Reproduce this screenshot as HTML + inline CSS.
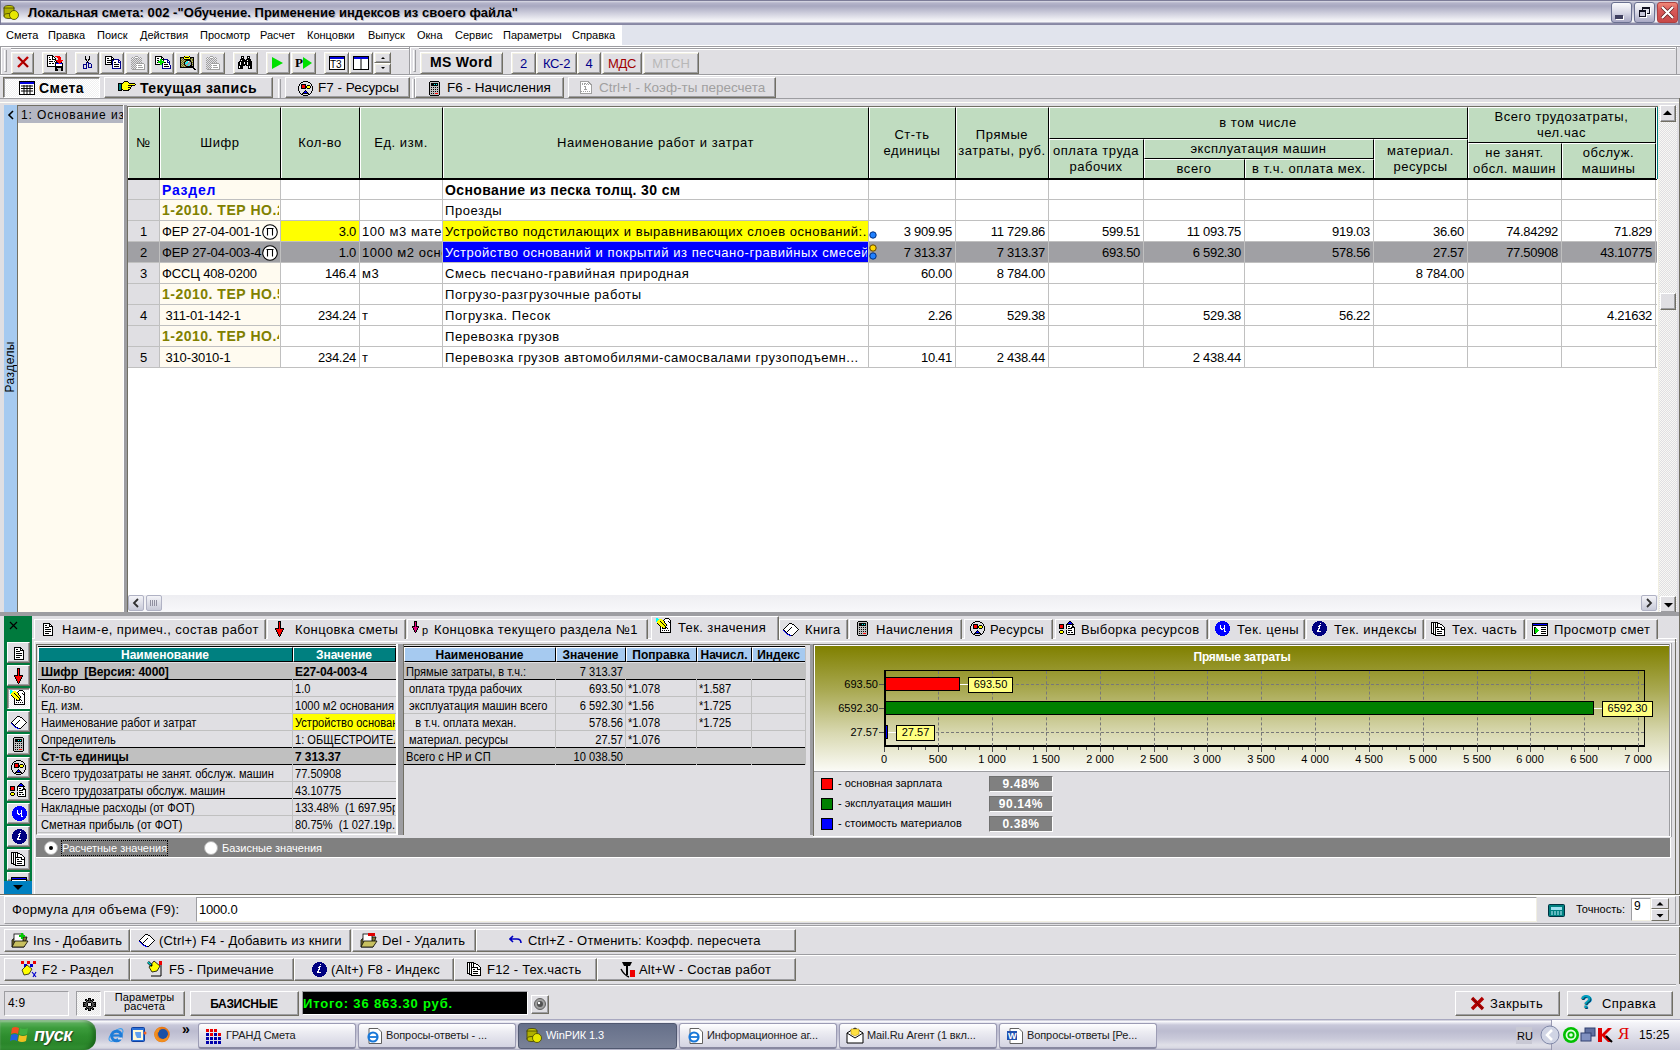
<!DOCTYPE html><html><head><meta charset="utf-8"><style>
*{margin:0;padding:0;box-sizing:border-box}
html,body{width:1680px;height:1050px;overflow:hidden;background:#E0DFE3;position:relative;font-family:"Liberation Sans",sans-serif;font-size:11px;color:#000}
div{position:absolute}
.t{white-space:nowrap;line-height:13px}
.b{font-weight:bold}
.btn{background:#E0DFE3;border:1px solid;border-color:#fff #716F64 #716F64 #fff;box-shadow:inset -1px -1px 0 #ACA899}
.sunk{border:1px solid;border-color:#ACA899 #fff #fff #ACA899}
</style></head><body><div style="left:0px;top:0px;width:1680px;height:25px;background:linear-gradient(#7C7C98 0px,#7C7C98 1px,#DCDCE6 1px,#B4B4CA 3px,#A8A8C0 6px,#C8C8D8 12px,#ECECF2 19px,#F8F8FA 22px,#9090AC 23px,#8484A0 25px)"></div><div style="left:0px;top:0px;width:1px;height:25px;background:#7C7C98"></div><div style="left:1678px;top:0px;width:2px;height:25px;background:#7C7C98"></div><svg style="position:absolute;left:2px;top:4px" width="17" height="17"><ellipse cx="7" cy="4" rx="5" ry="2.5" fill="#c8c800" stroke="#404000" stroke-width="0.8"/><rect x="2" y="4" width="10" height="8" fill="#b0b000" stroke="#404000" stroke-width="0.8"/><ellipse cx="7" cy="12" rx="5" ry="2.5" fill="#c0c000" stroke="#404000" stroke-width="0.8"/><ellipse cx="12" cy="11" rx="4.5" ry="4.5" fill="#e8e800" stroke="#404000" stroke-width="0.8"/></svg><div class="t" style="left:28px;top:5px;font-size:13px;font-weight:bold;line-height:15px;letter-spacing:0.05px;text-shadow:1px 1px 0 #b8b8c8">Локальная смета: 002 -"Обучение. Применение индексов из своего файла"</div><div style="left:1611px;top:2px;width:21px;height:21px;background:linear-gradient(#FAFAFC,#D8D8E6 50%,#A8A8C4);border:1px solid #6A7090;border-radius:3px"></div><div style="left:1634px;top:2px;width:21px;height:21px;background:linear-gradient(#FAFAFC,#D8D8E6 50%,#A8A8C4);border:1px solid #6A7090;border-radius:3px"></div><div style="left:1657px;top:2px;width:21px;height:21px;background:linear-gradient(#F08878,#D85858 40%,#C84848);border:1px solid #B04040;border-radius:3px"></div><div style="left:1615px;top:15px;width:8px;height:4px;background:#404060;box-shadow:1px 1px 0 #fff"></div><div style="left:1642px;top:7px;width:8px;height:7px;border:1px solid #101020;border-top-width:2px;box-shadow:1px 1px 0 #fff"></div><div style="left:1639px;top:10px;width:7px;height:7px;border:1px solid #101020;border-top-width:2px;background:#C8C8DA;box-shadow:1px 1px 0 #fff"></div><svg style="position:absolute;left:1657px;top:2px" width="21" height="21"><path d="M5 5 L16 16 M16 5 L5 16" stroke="#602020" stroke-width="3.6"/><path d="M5 5 L16 16 M16 5 L5 16" stroke="#fff" stroke-width="2.2"/></svg><div style="left:0px;top:25px;width:622px;height:20px;background:#fff"></div><div style="left:622px;top:25px;width:1058px;height:20px;background:#E1E4ED"></div><div class="t" style="left:6px;top:29px;">Смета</div><div class="t" style="left:48px;top:29px;">Правка</div><div class="t" style="left:97px;top:29px;">Поиск</div><div class="t" style="left:140px;top:29px;">Действия</div><div class="t" style="left:200px;top:29px;">Просмотр</div><div class="t" style="left:260px;top:29px;">Расчет</div><div class="t" style="left:307px;top:29px;">Концовки</div><div class="t" style="left:368px;top:29px;">Выпуск</div><div class="t" style="left:417px;top:29px;">Окна</div><div class="t" style="left:455px;top:29px;">Сервис</div><div class="t" style="left:503px;top:29px;">Параметры</div><div class="t" style="left:572px;top:29px;">Справка</div><div style="left:0px;top:45px;width:1680px;height:1px;background:#fff"></div><div style="left:0px;top:46px;width:1680px;height:1px;background:#9D9DA1"></div><div style="left:1px;top:47px;width:1677px;height:1px;background:#fff"></div><div style="left:0px;top:46px;width:1px;height:29px;background:#9D9DA1"></div><div style="left:1px;top:47px;width:1px;height:27px;background:#fff"></div><div style="left:0px;top:74px;width:1680px;height:1px;background:#9D9DA1"></div><div style="left:0px;top:75px;width:1680px;height:1px;background:#fff"></div><div style="left:11px;top:48px;width:398px;height:1px;background:#9D9DA1"></div><div style="left:11px;top:49px;width:398px;height:1px;background:#fff"></div><div style="left:419px;top:48px;width:1256px;height:1px;background:#9D9DA1"></div><div style="left:419px;top:49px;width:1256px;height:1px;background:#fff"></div><div style="left:409px;top:47px;width:1px;height:27px;background:#9D9DA1"></div><div style="left:410px;top:47px;width:1px;height:27px;background:#fff"></div><div style="left:1676px;top:46px;width:1px;height:29px;background:#9D9DA1"></div><div style="left:4px;top:50px;width:3px;height:22px;border-left:1px solid #fff;border-right:1px solid #9D9DA1;border-bottom:1px solid #9D9DA1"></div><div style="left:11px;top:52px;width:23px;height:22px;background:#E0DFE3;border:1px solid;border-color:#FFFFFF #716F64 #716F64 #FFFFFF;box-shadow:inset 1px 1px 0 #F1EFE2,inset -1px -1px 0 #9D9DA1"></div><div style="left:42px;top:52px;width:25px;height:22px;background:#E0DFE3;border:1px solid;border-color:#FFFFFF #716F64 #716F64 #FFFFFF;box-shadow:inset 1px 1px 0 #F1EFE2,inset -1px -1px 0 #9D9DA1"></div><div style="left:75px;top:52px;width:24px;height:22px;background:#E0DFE3;border:1px solid;border-color:#FFFFFF #716F64 #716F64 #FFFFFF;box-shadow:inset 1px 1px 0 #F1EFE2,inset -1px -1px 0 #9D9DA1"></div><div style="left:100px;top:52px;width:24px;height:22px;background:#E0DFE3;border:1px solid;border-color:#FFFFFF #716F64 #716F64 #FFFFFF;box-shadow:inset 1px 1px 0 #F1EFE2,inset -1px -1px 0 #9D9DA1"></div><div style="left:125px;top:52px;width:24px;height:22px;background:#E0DFE3;border:1px solid;border-color:#FFFFFF #716F64 #716F64 #FFFFFF;box-shadow:inset 1px 1px 0 #F1EFE2,inset -1px -1px 0 #9D9DA1"></div><div style="left:150px;top:52px;width:24px;height:22px;background:#E0DFE3;border:1px solid;border-color:#FFFFFF #716F64 #716F64 #FFFFFF;box-shadow:inset 1px 1px 0 #F1EFE2,inset -1px -1px 0 #9D9DA1"></div><div style="left:175px;top:52px;width:24px;height:22px;background:#E0DFE3;border:1px solid;border-color:#FFFFFF #716F64 #716F64 #FFFFFF;box-shadow:inset 1px 1px 0 #F1EFE2,inset -1px -1px 0 #9D9DA1"></div><div style="left:200px;top:52px;width:25px;height:22px;background:#E0DFE3;border:1px solid;border-color:#FFFFFF #716F64 #716F64 #FFFFFF;box-shadow:inset 1px 1px 0 #F1EFE2,inset -1px -1px 0 #9D9DA1"></div><div style="left:233px;top:52px;width:25px;height:22px;background:#E0DFE3;border:1px solid;border-color:#FFFFFF #716F64 #716F64 #FFFFFF;box-shadow:inset 1px 1px 0 #F1EFE2,inset -1px -1px 0 #9D9DA1"></div><div style="left:266px;top:52px;width:24px;height:22px;background:#E0DFE3;border:1px solid;border-color:#FFFFFF #716F64 #716F64 #FFFFFF;box-shadow:inset 1px 1px 0 #F1EFE2,inset -1px -1px 0 #9D9DA1"></div><div style="left:291px;top:52px;width:25px;height:22px;background:#E0DFE3;border:1px solid;border-color:#FFFFFF #716F64 #716F64 #FFFFFF;box-shadow:inset 1px 1px 0 #F1EFE2,inset -1px -1px 0 #9D9DA1"></div><div style="left:324px;top:52px;width:25px;height:22px;background:#E0DFE3;border:1px solid;border-color:#FFFFFF #716F64 #716F64 #FFFFFF;box-shadow:inset 1px 1px 0 #F1EFE2,inset -1px -1px 0 #9D9DA1"></div><div style="left:349px;top:52px;width:24px;height:22px;background:#E0DFE3;border:1px solid;border-color:#FFFFFF #716F64 #716F64 #FFFFFF;box-shadow:inset 1px 1px 0 #F1EFE2,inset -1px -1px 0 #9D9DA1"></div><div style="left:374px;top:52px;width:17px;height:11px;background:#E0DFE3;border:1px solid;border-color:#FFFFFF #716F64 #716F64 #FFFFFF;box-shadow:inset 1px 1px 0 #F1EFE2,inset -1px -1px 0 #9D9DA1"></div><div style="left:374px;top:63px;width:17px;height:11px;background:#E0DFE3;border:1px solid;border-color:#FFFFFF #716F64 #716F64 #FFFFFF;box-shadow:inset 1px 1px 0 #F1EFE2,inset -1px -1px 0 #9D9DA1"></div><svg style="position:absolute;left:16px;top:55px" width="14" height="14"><path d="M2 2 L12 12 M12 2 L2 12" stroke="#c00000" stroke-width="2.4"/><path d="M3 3 L12 12" stroke="#800000" stroke-width="1"/></svg><svg style="position:absolute;left:45px;top:54px;" width="20" height="17" shape-rendering="crispEdges"><rect x="2" y="1" width="6" height="1" fill="#000"/><rect x="2" y="2" width="1" height="1" fill="#000"/><rect x="3" y="2" width="4" height="1" fill="#fff"/><rect x="7" y="2" width="2" height="1" fill="#000"/><rect x="10" y="2" width="5" height="1" fill="#f00"/><rect x="2" y="3" width="1" height="1" fill="#000"/><rect x="3" y="3" width="1" height="1" fill="#fff"/><rect x="4" y="3" width="1" height="1" fill="#000"/><rect x="5" y="3" width="2" height="1" fill="#fff"/><rect x="7" y="3" width="1" height="1" fill="#000"/><rect x="8" y="3" width="1" height="1" fill="#fff"/><rect x="9" y="3" width="1" height="1" fill="#000"/><rect x="12" y="3" width="4" height="1" fill="#f00"/><rect x="2" y="4" width="1" height="1" fill="#000"/><rect x="3" y="4" width="4" height="1" fill="#fff"/><rect x="7" y="4" width="1" height="1" fill="#000"/><rect x="8" y="4" width="2" height="1" fill="#fff"/><rect x="10" y="4" width="1" height="1" fill="#000"/><rect x="13" y="4" width="3" height="1" fill="#f00"/><rect x="2" y="5" width="1" height="1" fill="#000"/><rect x="3" y="5" width="1" height="1" fill="#fff"/><rect x="4" y="5" width="2" height="1" fill="#000"/><rect x="6" y="5" width="1" height="1" fill="#fff"/><rect x="7" y="5" width="4" height="1" fill="#000"/><rect x="13" y="5" width="3" height="1" fill="#f00"/><rect x="2" y="6" width="1" height="1" fill="#000"/><rect x="3" y="6" width="7" height="1" fill="#fff"/><rect x="10" y="6" width="1" height="1" fill="#000"/><rect x="11" y="6" width="7" height="1" fill="#f00"/><rect x="2" y="7" width="1" height="1" fill="#000"/><rect x="3" y="7" width="1" height="1" fill="#fff"/><rect x="4" y="7" width="4" height="1" fill="#000"/><rect x="8" y="7" width="1" height="1" fill="#fff"/><rect x="9" y="7" width="1" height="1" fill="#000"/><rect x="10" y="7" width="1" height="1" fill="#fff"/><rect x="11" y="7" width="1" height="1" fill="#000"/><rect x="12" y="7" width="5" height="1" fill="#f00"/><rect x="2" y="8" width="1" height="1" fill="#000"/><rect x="3" y="8" width="7" height="1" fill="#fff"/><rect x="10" y="8" width="3" height="1" fill="#000"/><rect x="13" y="8" width="3" height="1" fill="#f00"/><rect x="16" y="8" width="1" height="1" fill="#000"/><rect x="2" y="9" width="1" height="1" fill="#000"/><rect x="3" y="9" width="1" height="1" fill="#fff"/><rect x="4" y="9" width="2" height="1" fill="#000"/><rect x="6" y="9" width="1" height="1" fill="#fff"/><rect x="7" y="9" width="2" height="1" fill="#000"/><rect x="9" y="9" width="1" height="1" fill="#fff"/><rect x="10" y="9" width="1" height="1" fill="#000"/><rect x="11" y="9" width="3" height="1" fill="#00f"/><rect x="14" y="9" width="1" height="1" fill="#f00"/><rect x="15" y="9" width="2" height="1" fill="#00f"/><rect x="17" y="9" width="1" height="1" fill="#000"/><rect x="2" y="10" width="1" height="1" fill="#000"/><rect x="3" y="10" width="7" height="1" fill="#fff"/><rect x="10" y="10" width="1" height="1" fill="#000"/><rect x="11" y="10" width="6" height="1" fill="#fff"/><rect x="17" y="10" width="1" height="1" fill="#000"/><rect x="2" y="11" width="1" height="1" fill="#000"/><rect x="3" y="11" width="7" height="1" fill="#fff"/><rect x="10" y="11" width="1" height="1" fill="#000"/><rect x="11" y="11" width="6" height="1" fill="#fff"/><rect x="17" y="11" width="1" height="1" fill="#000"/><rect x="2" y="12" width="16" height="1" fill="#000"/><rect x="10" y="13" width="8" height="1" fill="#000"/><rect x="10" y="14" width="2" height="1" fill="#000"/><rect x="12" y="14" width="4" height="1" fill="#c0c0c0"/><rect x="16" y="14" width="2" height="1" fill="#000"/><rect x="10" y="15" width="3" height="1" fill="#000"/><rect x="13" y="15" width="3" height="1" fill="#c0c0c0"/><rect x="16" y="15" width="2" height="1" fill="#000"/><rect x="10" y="16" width="3" height="1" fill="#000"/><rect x="13" y="16" width="3" height="1" fill="#c0c0c0"/><rect x="16" y="16" width="2" height="1" fill="#000"/></svg><svg style="position:absolute;left:80px;top:54px;" width="13" height="15" shape-rendering="crispEdges"><rect x="5" y="2" width="1" height="1" fill="#000"/><rect x="9" y="2" width="1" height="1" fill="#000"/><rect x="5" y="3" width="1" height="1" fill="#000"/><rect x="9" y="3" width="1" height="1" fill="#000"/><rect x="5" y="4" width="1" height="1" fill="#000"/><rect x="9" y="4" width="1" height="1" fill="#000"/><rect x="5" y="5" width="2" height="1" fill="#000"/><rect x="8" y="5" width="2" height="1" fill="#000"/><rect x="6" y="6" width="1" height="1" fill="#000"/><rect x="8" y="6" width="1" height="1" fill="#000"/><rect x="7" y="7" width="1" height="1" fill="#000"/><rect x="6" y="8" width="1" height="1" fill="#00008a"/><rect x="7" y="8" width="1" height="1" fill="#000"/><rect x="8" y="8" width="1" height="1" fill="#00008a"/><rect x="6" y="9" width="1" height="1" fill="#00008a"/><rect x="8" y="9" width="3" height="1" fill="#00008a"/><rect x="3" y="10" width="4" height="1" fill="#00008a"/><rect x="8" y="10" width="1" height="1" fill="#00008a"/><rect x="11" y="10" width="1" height="1" fill="#00008a"/><rect x="3" y="11" width="1" height="1" fill="#00008a"/><rect x="6" y="11" width="1" height="1" fill="#00008a"/><rect x="8" y="11" width="1" height="1" fill="#00008a"/><rect x="11" y="11" width="1" height="1" fill="#00008a"/><rect x="3" y="12" width="1" height="1" fill="#00008a"/><rect x="6" y="12" width="1" height="1" fill="#00008a"/><rect x="8" y="12" width="1" height="1" fill="#00008a"/><rect x="11" y="12" width="1" height="1" fill="#00008a"/><rect x="3" y="13" width="1" height="1" fill="#00008a"/><rect x="6" y="13" width="1" height="1" fill="#00008a"/><rect x="8" y="13" width="4" height="1" fill="#00008a"/><rect x="3" y="14" width="4" height="1" fill="#00008a"/></svg><svg style="position:absolute;left:105px;top:56px;" width="16" height="13" shape-rendering="crispEdges"><rect x="0" y="0" width="7" height="1" fill="#000"/><rect x="0" y="1" width="1" height="1" fill="#000"/><rect x="1" y="1" width="5" height="1" fill="#fff"/><rect x="6" y="1" width="2" height="1" fill="#000"/><rect x="0" y="2" width="1" height="1" fill="#000"/><rect x="1" y="2" width="1" height="1" fill="#fff"/><rect x="2" y="2" width="2" height="1" fill="#000"/><rect x="4" y="2" width="2" height="1" fill="#fff"/><rect x="6" y="2" width="1" height="1" fill="#000"/><rect x="7" y="2" width="1" height="1" fill="#fff"/><rect x="8" y="2" width="1" height="1" fill="#000"/><rect x="0" y="3" width="1" height="1" fill="#000"/><rect x="1" y="3" width="5" height="1" fill="#fff"/><rect x="6" y="3" width="3" height="1" fill="#000"/><rect x="9" y="3" width="5" height="1" fill="#00008a"/><rect x="0" y="4" width="1" height="1" fill="#000"/><rect x="1" y="4" width="1" height="1" fill="#fff"/><rect x="2" y="4" width="5" height="1" fill="#000"/><rect x="7" y="4" width="2" height="1" fill="#00008a"/><rect x="9" y="4" width="4" height="1" fill="#fff"/><rect x="13" y="4" width="2" height="1" fill="#00008a"/><rect x="0" y="5" width="1" height="1" fill="#000"/><rect x="1" y="5" width="5" height="1" fill="#fff"/><rect x="6" y="5" width="1" height="1" fill="#000"/><rect x="7" y="5" width="1" height="1" fill="#00008a"/><rect x="8" y="5" width="5" height="1" fill="#fff"/><rect x="13" y="5" width="1" height="1" fill="#00008a"/><rect x="14" y="5" width="1" height="1" fill="#fff"/><rect x="15" y="5" width="1" height="1" fill="#00008a"/><rect x="0" y="6" width="1" height="1" fill="#000"/><rect x="1" y="6" width="1" height="1" fill="#fff"/><rect x="2" y="6" width="5" height="1" fill="#000"/><rect x="7" y="6" width="1" height="1" fill="#00008a"/><rect x="8" y="6" width="1" height="1" fill="#fff"/><rect x="9" y="6" width="2" height="1" fill="#000"/><rect x="11" y="6" width="2" height="1" fill="#fff"/><rect x="13" y="6" width="3" height="1" fill="#00008a"/><rect x="0" y="7" width="1" height="1" fill="#000"/><rect x="1" y="7" width="5" height="1" fill="#fff"/><rect x="6" y="7" width="1" height="1" fill="#000"/><rect x="7" y="7" width="1" height="1" fill="#00008a"/><rect x="8" y="7" width="7" height="1" fill="#fff"/><rect x="15" y="7" width="1" height="1" fill="#00008a"/><rect x="0" y="8" width="7" height="1" fill="#000"/><rect x="7" y="8" width="1" height="1" fill="#00008a"/><rect x="8" y="8" width="1" height="1" fill="#fff"/><rect x="9" y="8" width="5" height="1" fill="#000"/><rect x="14" y="8" width="1" height="1" fill="#fff"/><rect x="15" y="8" width="1" height="1" fill="#00008a"/><rect x="7" y="9" width="1" height="1" fill="#00008a"/><rect x="8" y="9" width="7" height="1" fill="#fff"/><rect x="15" y="9" width="1" height="1" fill="#00008a"/><rect x="7" y="10" width="1" height="1" fill="#00008a"/><rect x="8" y="10" width="1" height="1" fill="#fff"/><rect x="9" y="10" width="5" height="1" fill="#000"/><rect x="14" y="10" width="1" height="1" fill="#fff"/><rect x="15" y="10" width="1" height="1" fill="#00008a"/><rect x="7" y="11" width="1" height="1" fill="#00008a"/><rect x="8" y="11" width="7" height="1" fill="#fff"/><rect x="15" y="11" width="1" height="1" fill="#00008a"/><rect x="7" y="12" width="9" height="1" fill="#00008a"/></svg><svg style="position:absolute;left:130px;top:56px;" width="16" height="14" shape-rendering="crispEdges"><rect x="5" y="0" width="3" height="1" fill="#A0A0A0"/><rect x="2" y="1" width="1" height="1" fill="#A0A0A0"/><rect x="4" y="1" width="1" height="1" fill="#A0A0A0"/><rect x="5" y="1" width="3" height="1" fill="#FFFFFF"/><rect x="8" y="1" width="1" height="1" fill="#A0A0A0"/><rect x="10" y="1" width="1" height="1" fill="#A0A0A0"/><rect x="1" y="2" width="1" height="1" fill="#A0A0A0"/><rect x="2" y="2" width="1" height="1" fill="#FFFFFF"/><rect x="3" y="2" width="1" height="1" fill="#A0A0A0"/><rect x="5" y="2" width="3" height="1" fill="#A0A0A0"/><rect x="9" y="2" width="1" height="1" fill="#A0A0A0"/><rect x="10" y="2" width="1" height="1" fill="#FFFFFF"/><rect x="11" y="2" width="1" height="1" fill="#A0A0A0"/><rect x="2" y="3" width="1" height="1" fill="#A0A0A0"/><rect x="4" y="3" width="1" height="1" fill="#A0A0A0"/><rect x="6" y="3" width="1" height="1" fill="#A0A0A0"/><rect x="8" y="3" width="1" height="1" fill="#A0A0A0"/><rect x="10" y="3" width="1" height="1" fill="#A0A0A0"/><rect x="1" y="4" width="1" height="1" fill="#A0A0A0"/><rect x="3" y="4" width="1" height="1" fill="#A0A0A0"/><rect x="5" y="4" width="1" height="1" fill="#A0A0A0"/><rect x="7" y="4" width="1" height="1" fill="#A0A0A0"/><rect x="9" y="4" width="1" height="1" fill="#A0A0A0"/><rect x="11" y="4" width="1" height="1" fill="#A0A0A0"/><rect x="2" y="5" width="1" height="1" fill="#A0A0A0"/><rect x="4" y="5" width="1" height="1" fill="#A0A0A0"/><rect x="6" y="5" width="1" height="1" fill="#A0A0A0"/><rect x="8" y="5" width="1" height="1" fill="#A0A0A0"/><rect x="10" y="5" width="1" height="1" fill="#A0A0A0"/><rect x="1" y="6" width="1" height="1" fill="#A0A0A0"/><rect x="3" y="6" width="1" height="1" fill="#A0A0A0"/><rect x="5" y="6" width="1" height="1" fill="#A0A0A0"/><rect x="7" y="6" width="1" height="1" fill="#A0A0A0"/><rect x="9" y="6" width="1" height="1" fill="#A0A0A0"/><rect x="11" y="6" width="1" height="1" fill="#A0A0A0"/><rect x="2" y="7" width="1" height="1" fill="#A0A0A0"/><rect x="4" y="7" width="1" height="1" fill="#A0A0A0"/><rect x="6" y="7" width="8" height="1" fill="#A0A0A0"/><rect x="1" y="8" width="1" height="1" fill="#A0A0A0"/><rect x="3" y="8" width="1" height="1" fill="#A0A0A0"/><rect x="5" y="8" width="1" height="1" fill="#A0A0A0"/><rect x="6" y="8" width="8" height="1" fill="#FFFFFF"/><rect x="14" y="8" width="1" height="1" fill="#A0A0A0"/><rect x="2" y="9" width="1" height="1" fill="#A0A0A0"/><rect x="4" y="9" width="1" height="1" fill="#A0A0A0"/><rect x="6" y="9" width="1" height="1" fill="#A0A0A0"/><rect x="7" y="9" width="1" height="1" fill="#FFFFFF"/><rect x="8" y="9" width="4" height="1" fill="#A0A0A0"/><rect x="12" y="9" width="2" height="1" fill="#FFFFFF"/><rect x="14" y="9" width="1" height="1" fill="#A0A0A0"/><rect x="1" y="10" width="1" height="1" fill="#A0A0A0"/><rect x="3" y="10" width="1" height="1" fill="#A0A0A0"/><rect x="5" y="10" width="1" height="1" fill="#A0A0A0"/><rect x="6" y="10" width="8" height="1" fill="#FFFFFF"/><rect x="14" y="10" width="1" height="1" fill="#A0A0A0"/><rect x="2" y="11" width="1" height="1" fill="#A0A0A0"/><rect x="4" y="11" width="1" height="1" fill="#A0A0A0"/><rect x="6" y="11" width="1" height="1" fill="#A0A0A0"/><rect x="7" y="11" width="1" height="1" fill="#FFFFFF"/><rect x="8" y="11" width="5" height="1" fill="#A0A0A0"/><rect x="13" y="11" width="1" height="1" fill="#FFFFFF"/><rect x="14" y="11" width="1" height="1" fill="#A0A0A0"/><rect x="1" y="12" width="1" height="1" fill="#A0A0A0"/><rect x="3" y="12" width="1" height="1" fill="#A0A0A0"/><rect x="5" y="12" width="1" height="1" fill="#A0A0A0"/><rect x="6" y="12" width="8" height="1" fill="#FFFFFF"/><rect x="14" y="12" width="1" height="1" fill="#A0A0A0"/><rect x="2" y="13" width="13" height="1" fill="#A0A0A0"/></svg><svg style="position:absolute;left:155px;top:56px;" width="16" height="13" shape-rendering="crispEdges"><rect x="0" y="0" width="7" height="1" fill="#000"/><rect x="0" y="1" width="1" height="1" fill="#000"/><rect x="1" y="1" width="5" height="1" fill="#fff"/><rect x="6" y="1" width="2" height="1" fill="#000"/><rect x="0" y="2" width="1" height="1" fill="#000"/><rect x="1" y="2" width="1" height="1" fill="#fff"/><rect x="2" y="2" width="2" height="1" fill="#000"/><rect x="4" y="2" width="2" height="1" fill="#fff"/><rect x="6" y="2" width="1" height="1" fill="#000"/><rect x="7" y="2" width="1" height="1" fill="#fff"/><rect x="8" y="2" width="1" height="1" fill="#000"/><rect x="0" y="3" width="1" height="1" fill="#000"/><rect x="1" y="3" width="4" height="1" fill="#fff"/><rect x="5" y="3" width="2" height="1" fill="#00E000"/><rect x="7" y="3" width="2" height="1" fill="#000"/><rect x="9" y="3" width="4" height="1" fill="#00008a"/><rect x="0" y="4" width="1" height="1" fill="#000"/><rect x="1" y="4" width="1" height="1" fill="#fff"/><rect x="2" y="4" width="2" height="1" fill="#000"/><rect x="4" y="4" width="1" height="1" fill="#fff"/><rect x="5" y="4" width="2" height="1" fill="#00E000"/><rect x="7" y="4" width="1" height="1" fill="#fff"/><rect x="8" y="4" width="1" height="1" fill="#000"/><rect x="9" y="4" width="3" height="1" fill="#fff"/><rect x="12" y="4" width="2" height="1" fill="#00008a"/><rect x="0" y="5" width="1" height="1" fill="#000"/><rect x="1" y="5" width="2" height="1" fill="#fff"/><rect x="3" y="5" width="6" height="1" fill="#00E000"/><rect x="9" y="5" width="3" height="1" fill="#fff"/><rect x="12" y="5" width="1" height="1" fill="#00008a"/><rect x="13" y="5" width="1" height="1" fill="#fff"/><rect x="14" y="5" width="1" height="1" fill="#00008a"/><rect x="0" y="6" width="1" height="1" fill="#000"/><rect x="1" y="6" width="1" height="1" fill="#fff"/><rect x="2" y="6" width="1" height="1" fill="#000"/><rect x="3" y="6" width="6" height="1" fill="#00E000"/><rect x="9" y="6" width="2" height="1" fill="#000"/><rect x="11" y="6" width="1" height="1" fill="#fff"/><rect x="12" y="6" width="3" height="1" fill="#00008a"/><rect x="0" y="7" width="1" height="1" fill="#000"/><rect x="1" y="7" width="4" height="1" fill="#fff"/><rect x="5" y="7" width="2" height="1" fill="#00E000"/><rect x="7" y="7" width="1" height="1" fill="#000"/><rect x="8" y="7" width="6" height="1" fill="#fff"/><rect x="14" y="7" width="1" height="1" fill="#00008a"/><rect x="0" y="8" width="5" height="1" fill="#000"/><rect x="5" y="8" width="2" height="1" fill="#00E000"/><rect x="7" y="8" width="1" height="1" fill="#00008a"/><rect x="8" y="8" width="1" height="1" fill="#fff"/><rect x="9" y="8" width="4" height="1" fill="#000"/><rect x="13" y="8" width="1" height="1" fill="#fff"/><rect x="14" y="8" width="1" height="1" fill="#00008a"/><rect x="7" y="9" width="1" height="1" fill="#00008a"/><rect x="8" y="9" width="7" height="1" fill="#fff"/><rect x="15" y="9" width="1" height="1" fill="#00008a"/><rect x="7" y="10" width="1" height="1" fill="#00008a"/><rect x="8" y="10" width="1" height="1" fill="#fff"/><rect x="9" y="10" width="5" height="1" fill="#000"/><rect x="14" y="10" width="1" height="1" fill="#fff"/><rect x="15" y="10" width="1" height="1" fill="#00008a"/><rect x="7" y="11" width="1" height="1" fill="#00008a"/><rect x="8" y="11" width="7" height="1" fill="#fff"/><rect x="15" y="11" width="1" height="1" fill="#00008a"/><rect x="7" y="12" width="9" height="1" fill="#00008a"/></svg><svg style="position:absolute;left:180px;top:56px;" width="17" height="14" shape-rendering="crispEdges"><rect x="4" y="0" width="1" height="1" fill="#000"/><rect x="5" y="0" width="4" height="1" fill="#FFFF00"/><rect x="9" y="0" width="1" height="1" fill="#000"/><rect x="0" y="1" width="4" height="1" fill="#000"/><rect x="4" y="1" width="1" height="1" fill="#FFFF00"/><rect x="5" y="1" width="4" height="1" fill="#000"/><rect x="9" y="1" width="1" height="1" fill="#FFFF00"/><rect x="10" y="1" width="4" height="1" fill="#000"/><rect x="0" y="2" width="1" height="1" fill="#000"/><rect x="1" y="2" width="1" height="1" fill="#808000"/><rect x="2" y="2" width="1" height="1" fill="#A0A0A0"/><rect x="3" y="2" width="1" height="1" fill="#000"/><rect x="4" y="2" width="6" height="1" fill="#FFFF00"/><rect x="10" y="2" width="1" height="1" fill="#000"/><rect x="11" y="2" width="1" height="1" fill="#808000"/><rect x="12" y="2" width="1" height="1" fill="#A0A0A0"/><rect x="13" y="2" width="1" height="1" fill="#000"/><rect x="0" y="3" width="1" height="1" fill="#000"/><rect x="1" y="3" width="1" height="1" fill="#A0A0A0"/><rect x="2" y="3" width="1" height="1" fill="#808000"/><rect x="3" y="3" width="1" height="1" fill="#A0A0A0"/><rect x="4" y="3" width="6" height="1" fill="#000"/><rect x="10" y="3" width="1" height="1" fill="#808000"/><rect x="11" y="3" width="1" height="1" fill="#A0A0A0"/><rect x="12" y="3" width="1" height="1" fill="#808000"/><rect x="13" y="3" width="1" height="1" fill="#000"/><rect x="0" y="4" width="1" height="1" fill="#000"/><rect x="1" y="4" width="1" height="1" fill="#808000"/><rect x="2" y="4" width="1" height="1" fill="#A0A0A0"/><rect x="3" y="4" width="1" height="1" fill="#808000"/><rect x="4" y="4" width="1" height="1" fill="#A0A0A0"/><rect x="5" y="4" width="1" height="1" fill="#808000"/><rect x="6" y="4" width="5" height="1" fill="#000"/><rect x="11" y="4" width="1" height="1" fill="#A0A0A0"/><rect x="12" y="4" width="1" height="1" fill="#808000"/><rect x="13" y="4" width="1" height="1" fill="#000"/><rect x="0" y="5" width="1" height="1" fill="#000"/><rect x="1" y="5" width="1" height="1" fill="#A0A0A0"/><rect x="2" y="5" width="1" height="1" fill="#808000"/><rect x="3" y="5" width="1" height="1" fill="#A0A0A0"/><rect x="4" y="5" width="1" height="1" fill="#808000"/><rect x="5" y="5" width="1" height="1" fill="#000"/><rect x="6" y="5" width="1" height="1" fill="#A0A0A0"/><rect x="7" y="5" width="1" height="1" fill="#00FFFF"/><rect x="8" y="5" width="1" height="1" fill="#fff"/><rect x="9" y="5" width="1" height="1" fill="#A0A0A0"/><rect x="10" y="5" width="1" height="1" fill="#000"/><rect x="11" y="5" width="1" height="1" fill="#808000"/><rect x="12" y="5" width="1" height="1" fill="#A0A0A0"/><rect x="13" y="5" width="1" height="1" fill="#000"/><rect x="0" y="6" width="1" height="1" fill="#000"/><rect x="1" y="6" width="1" height="1" fill="#808000"/><rect x="2" y="6" width="1" height="1" fill="#A0A0A0"/><rect x="3" y="6" width="1" height="1" fill="#808000"/><rect x="4" y="6" width="1" height="1" fill="#000"/><rect x="5" y="6" width="1" height="1" fill="#A0A0A0"/><rect x="6" y="6" width="2" height="1" fill="#00FFFF"/><rect x="8" y="6" width="3" height="1" fill="#A0A0A0"/><rect x="11" y="6" width="1" height="1" fill="#000"/><rect x="12" y="6" width="1" height="1" fill="#808000"/><rect x="13" y="6" width="1" height="1" fill="#000"/><rect x="0" y="7" width="1" height="1" fill="#000"/><rect x="1" y="7" width="1" height="1" fill="#A0A0A0"/><rect x="2" y="7" width="1" height="1" fill="#808000"/><rect x="3" y="7" width="1" height="1" fill="#A0A0A0"/><rect x="4" y="7" width="1" height="1" fill="#000"/><rect x="5" y="7" width="2" height="1" fill="#00FFFF"/><rect x="7" y="7" width="4" height="1" fill="#A0A0A0"/><rect x="11" y="7" width="1" height="1" fill="#000"/><rect x="12" y="7" width="1" height="1" fill="#A0A0A0"/><rect x="13" y="7" width="1" height="1" fill="#000"/><rect x="0" y="8" width="1" height="1" fill="#000"/><rect x="1" y="8" width="1" height="1" fill="#808000"/><rect x="2" y="8" width="1" height="1" fill="#A0A0A0"/><rect x="3" y="8" width="1" height="1" fill="#808000"/><rect x="4" y="8" width="1" height="1" fill="#000"/><rect x="5" y="8" width="4" height="1" fill="#A0A0A0"/><rect x="9" y="8" width="1" height="1" fill="#00FFFF"/><rect x="10" y="8" width="1" height="1" fill="#A0A0A0"/><rect x="11" y="8" width="1" height="1" fill="#000"/><rect x="12" y="8" width="1" height="1" fill="#808000"/><rect x="13" y="8" width="1" height="1" fill="#000"/><rect x="0" y="9" width="1" height="1" fill="#000"/><rect x="1" y="9" width="1" height="1" fill="#A0A0A0"/><rect x="2" y="9" width="1" height="1" fill="#808000"/><rect x="3" y="9" width="1" height="1" fill="#A0A0A0"/><rect x="4" y="9" width="1" height="1" fill="#808000"/><rect x="5" y="9" width="1" height="1" fill="#000"/><rect x="6" y="9" width="2" height="1" fill="#A0A0A0"/><rect x="8" y="9" width="1" height="1" fill="#00FFFF"/><rect x="9" y="9" width="1" height="1" fill="#A0A0A0"/><rect x="10" y="9" width="2" height="1" fill="#000"/><rect x="12" y="9" width="1" height="1" fill="#A0A0A0"/><rect x="13" y="9" width="1" height="1" fill="#000"/><rect x="0" y="10" width="1" height="1" fill="#000"/><rect x="1" y="10" width="1" height="1" fill="#808000"/><rect x="2" y="10" width="1" height="1" fill="#A0A0A0"/><rect x="3" y="10" width="1" height="1" fill="#808000"/><rect x="4" y="10" width="1" height="1" fill="#A0A0A0"/><rect x="5" y="10" width="1" height="1" fill="#808000"/><rect x="6" y="10" width="8" height="1" fill="#000"/><rect x="0" y="11" width="14" height="1" fill="#000"/><rect x="13" y="12" width="2" height="1" fill="#000"/><rect x="14" y="13" width="2" height="1" fill="#000"/></svg><svg style="position:absolute;left:205px;top:56px;" width="16" height="14" shape-rendering="crispEdges"><rect x="5" y="0" width="3" height="1" fill="#A0A0A0"/><rect x="2" y="1" width="1" height="1" fill="#A0A0A0"/><rect x="4" y="1" width="1" height="1" fill="#A0A0A0"/><rect x="5" y="1" width="3" height="1" fill="#FFFFFF"/><rect x="8" y="1" width="1" height="1" fill="#A0A0A0"/><rect x="10" y="1" width="1" height="1" fill="#A0A0A0"/><rect x="1" y="2" width="1" height="1" fill="#A0A0A0"/><rect x="2" y="2" width="1" height="1" fill="#FFFFFF"/><rect x="3" y="2" width="1" height="1" fill="#A0A0A0"/><rect x="5" y="2" width="3" height="1" fill="#A0A0A0"/><rect x="9" y="2" width="1" height="1" fill="#A0A0A0"/><rect x="10" y="2" width="1" height="1" fill="#FFFFFF"/><rect x="11" y="2" width="1" height="1" fill="#A0A0A0"/><rect x="2" y="3" width="1" height="1" fill="#A0A0A0"/><rect x="4" y="3" width="1" height="1" fill="#A0A0A0"/><rect x="6" y="3" width="1" height="1" fill="#A0A0A0"/><rect x="8" y="3" width="1" height="1" fill="#A0A0A0"/><rect x="10" y="3" width="1" height="1" fill="#A0A0A0"/><rect x="1" y="4" width="1" height="1" fill="#A0A0A0"/><rect x="3" y="4" width="1" height="1" fill="#A0A0A0"/><rect x="5" y="4" width="1" height="1" fill="#A0A0A0"/><rect x="7" y="4" width="1" height="1" fill="#A0A0A0"/><rect x="9" y="4" width="1" height="1" fill="#A0A0A0"/><rect x="11" y="4" width="1" height="1" fill="#A0A0A0"/><rect x="2" y="5" width="1" height="1" fill="#A0A0A0"/><rect x="4" y="5" width="1" height="1" fill="#A0A0A0"/><rect x="6" y="5" width="1" height="1" fill="#A0A0A0"/><rect x="8" y="5" width="1" height="1" fill="#A0A0A0"/><rect x="10" y="5" width="1" height="1" fill="#A0A0A0"/><rect x="1" y="6" width="1" height="1" fill="#A0A0A0"/><rect x="3" y="6" width="1" height="1" fill="#A0A0A0"/><rect x="5" y="6" width="1" height="1" fill="#A0A0A0"/><rect x="7" y="6" width="1" height="1" fill="#A0A0A0"/><rect x="9" y="6" width="1" height="1" fill="#A0A0A0"/><rect x="11" y="6" width="1" height="1" fill="#A0A0A0"/><rect x="2" y="7" width="1" height="1" fill="#A0A0A0"/><rect x="4" y="7" width="1" height="1" fill="#A0A0A0"/><rect x="6" y="7" width="8" height="1" fill="#A0A0A0"/><rect x="1" y="8" width="1" height="1" fill="#A0A0A0"/><rect x="3" y="8" width="1" height="1" fill="#A0A0A0"/><rect x="5" y="8" width="1" height="1" fill="#A0A0A0"/><rect x="6" y="8" width="8" height="1" fill="#FFFFFF"/><rect x="14" y="8" width="1" height="1" fill="#A0A0A0"/><rect x="2" y="9" width="1" height="1" fill="#A0A0A0"/><rect x="4" y="9" width="1" height="1" fill="#A0A0A0"/><rect x="6" y="9" width="1" height="1" fill="#A0A0A0"/><rect x="7" y="9" width="1" height="1" fill="#FFFFFF"/><rect x="8" y="9" width="4" height="1" fill="#A0A0A0"/><rect x="12" y="9" width="2" height="1" fill="#FFFFFF"/><rect x="14" y="9" width="1" height="1" fill="#A0A0A0"/><rect x="1" y="10" width="1" height="1" fill="#A0A0A0"/><rect x="3" y="10" width="1" height="1" fill="#A0A0A0"/><rect x="5" y="10" width="1" height="1" fill="#A0A0A0"/><rect x="6" y="10" width="8" height="1" fill="#FFFFFF"/><rect x="14" y="10" width="1" height="1" fill="#A0A0A0"/><rect x="2" y="11" width="1" height="1" fill="#A0A0A0"/><rect x="4" y="11" width="1" height="1" fill="#A0A0A0"/><rect x="6" y="11" width="1" height="1" fill="#A0A0A0"/><rect x="7" y="11" width="1" height="1" fill="#FFFFFF"/><rect x="8" y="11" width="5" height="1" fill="#A0A0A0"/><rect x="13" y="11" width="1" height="1" fill="#FFFFFF"/><rect x="14" y="11" width="1" height="1" fill="#A0A0A0"/><rect x="1" y="12" width="1" height="1" fill="#A0A0A0"/><rect x="3" y="12" width="1" height="1" fill="#A0A0A0"/><rect x="5" y="12" width="1" height="1" fill="#A0A0A0"/><rect x="6" y="12" width="8" height="1" fill="#FFFFFF"/><rect x="14" y="12" width="1" height="1" fill="#A0A0A0"/><rect x="2" y="13" width="13" height="1" fill="#A0A0A0"/></svg><svg style="position:absolute;left:238px;top:56px;" width="14" height="13" shape-rendering="crispEdges"><rect x="3" y="0" width="3" height="1" fill="#000"/><rect x="9" y="0" width="3" height="1" fill="#000"/><rect x="3" y="1" width="1" height="1" fill="#000"/><rect x="4" y="1" width="1" height="1" fill="#fff"/><rect x="5" y="1" width="1" height="1" fill="#000"/><rect x="9" y="1" width="1" height="1" fill="#000"/><rect x="10" y="1" width="1" height="1" fill="#fff"/><rect x="11" y="1" width="1" height="1" fill="#000"/><rect x="3" y="2" width="3" height="1" fill="#000"/><rect x="9" y="2" width="3" height="1" fill="#000"/><rect x="2" y="3" width="5" height="1" fill="#000"/><rect x="8" y="3" width="5" height="1" fill="#000"/><rect x="2" y="4" width="1" height="1" fill="#000"/><rect x="3" y="4" width="1" height="1" fill="#fff"/><rect x="4" y="4" width="5" height="1" fill="#000"/><rect x="9" y="4" width="1" height="1" fill="#fff"/><rect x="10" y="4" width="3" height="1" fill="#000"/><rect x="1" y="5" width="13" height="1" fill="#000"/><rect x="0" y="6" width="2" height="1" fill="#000"/><rect x="2" y="6" width="1" height="1" fill="#fff"/><rect x="3" y="6" width="3" height="1" fill="#000"/><rect x="6" y="6" width="1" height="1" fill="#fff"/><rect x="7" y="6" width="2" height="1" fill="#000"/><rect x="9" y="6" width="1" height="1" fill="#fff"/><rect x="10" y="6" width="4" height="1" fill="#000"/><rect x="0" y="7" width="2" height="1" fill="#000"/><rect x="2" y="7" width="1" height="1" fill="#fff"/><rect x="3" y="7" width="3" height="1" fill="#000"/><rect x="6" y="7" width="1" height="1" fill="#fff"/><rect x="7" y="7" width="2" height="1" fill="#000"/><rect x="9" y="7" width="1" height="1" fill="#fff"/><rect x="10" y="7" width="4" height="1" fill="#000"/><rect x="0" y="8" width="2" height="1" fill="#000"/><rect x="2" y="8" width="1" height="1" fill="#fff"/><rect x="3" y="8" width="6" height="1" fill="#000"/><rect x="9" y="8" width="1" height="1" fill="#fff"/><rect x="10" y="8" width="4" height="1" fill="#000"/><rect x="0" y="9" width="7" height="1" fill="#000"/><rect x="8" y="9" width="6" height="1" fill="#000"/><rect x="0" y="10" width="1" height="1" fill="#000"/><rect x="1" y="10" width="1" height="1" fill="#fff"/><rect x="2" y="10" width="3" height="1" fill="#000"/><rect x="10" y="10" width="1" height="1" fill="#000"/><rect x="11" y="10" width="1" height="1" fill="#fff"/><rect x="12" y="10" width="2" height="1" fill="#000"/><rect x="0" y="11" width="1" height="1" fill="#000"/><rect x="1" y="11" width="1" height="1" fill="#fff"/><rect x="2" y="11" width="3" height="1" fill="#000"/><rect x="10" y="11" width="1" height="1" fill="#000"/><rect x="11" y="11" width="1" height="1" fill="#fff"/><rect x="12" y="11" width="2" height="1" fill="#000"/><rect x="0" y="12" width="5" height="1" fill="#000"/><rect x="10" y="12" width="4" height="1" fill="#000"/></svg><svg style="position:absolute;left:271px;top:56px" width="14" height="14"><path d="M1 1 L12 7 L1 13 Z" fill="#00e000"/></svg><div class="t" style="left:295px;top:55px;font:bold 13px 'Liberation Serif';line-height:15px">P</div><svg style="position:absolute;left:303px;top:56px" width="10" height="14"><path d="M0 1 L9 7 L0 13 Z" fill="#00e000"/></svg><svg style="position:absolute;left:329px;top:56px" width="16" height="14"><rect x="0.5" y="0.5" width="15" height="13" fill="#fff" stroke="#000"/><rect x="1" y="1" width="14" height="2" fill="#0000e0"/></svg><div class="t" style="left:330px;top:59px;font-size:10px;line-height:11px">T3</div><svg style="position:absolute;left:353px;top:56px" width="16" height="14"><rect x="0.5" y="0.5" width="15" height="13" fill="#fff" stroke="#000"/><rect x="1" y="1" width="14" height="2" fill="#0000e0"/><path d="M8 3 v10" stroke="#000"/></svg><svg style="position:absolute;left:380px;top:55px" width="6" height="16"><path d="M1 4 L3 2 L5 4Z M1 12 L3 14 L5 12Z" fill="#000"/></svg><div style="left:413px;top:50px;width:3px;height:22px;border-left:1px solid #fff;border-right:1px solid #9D9DA1;border-bottom:1px solid #9D9DA1"></div><div style="left:420px;top:52px;width:83px;height:22px;background:#E0DFE3;border:1px solid;border-color:#FFFFFF #716F64 #716F64 #FFFFFF;box-shadow:inset 1px 1px 0 #F1EFE2,inset -1px -1px 0 #9D9DA1"></div><div class="t" style="left:430px;top:55px;font-weight:bold;font-size:14px;line-height:15px;letter-spacing:0.3px">MS Word</div><div style="left:511px;top:52px;width:25px;height:22px;background:#E0DFE3;border:1px solid;border-color:#FFFFFF #716F64 #716F64 #FFFFFF;box-shadow:inset 1px 1px 0 #F1EFE2,inset -1px -1px 0 #9D9DA1"></div><div class="t" style="left:511px;top:56px;width:25px;text-align:center;color:#00008a;font-size:13px;line-height:16px">2</div><div style="left:536px;top:52px;width:41px;height:22px;background:#E0DFE3;border:1px solid;border-color:#FFFFFF #716F64 #716F64 #FFFFFF;box-shadow:inset 1px 1px 0 #F1EFE2,inset -1px -1px 0 #9D9DA1"></div><div class="t" style="left:536px;top:56px;width:41px;text-align:center;color:#00008a;font-size:13px;line-height:16px;letter-spacing:-0.3px">КС-2</div><div style="left:577px;top:52px;width:24px;height:22px;background:#E0DFE3;border:1px solid;border-color:#FFFFFF #716F64 #716F64 #FFFFFF;box-shadow:inset 1px 1px 0 #F1EFE2,inset -1px -1px 0 #9D9DA1"></div><div class="t" style="left:577px;top:56px;width:24px;text-align:center;color:#00008a;font-size:13px;line-height:16px">4</div><div style="left:602px;top:52px;width:40px;height:22px;background:#E0DFE3;border:1px solid;border-color:#FFFFFF #716F64 #716F64 #FFFFFF;box-shadow:inset 1px 1px 0 #F1EFE2,inset -1px -1px 0 #9D9DA1"></div><div class="t" style="left:602px;top:56px;width:40px;text-align:center;color:#a00000;font-size:13px;line-height:16px;letter-spacing:-0.3px">МДС</div><div style="left:643px;top:52px;width:56px;height:22px;background:#E0DFE3;border:1px solid;border-color:#FFFFFF #716F64 #716F64 #FFFFFF;box-shadow:inset 1px 1px 0 #F1EFE2,inset -1px -1px 0 #9D9DA1"></div><div class="t" style="left:643px;top:56px;width:56px;text-align:center;color:#b8b8b8;font-size:13px;line-height:16px">МТСН</div><div style="left:3px;top:77px;width:97px;height:21px;background:repeating-conic-gradient(#F0F0F0 0 25%,#FFFFFF 0 50%) 0 0/2px 2px;border:1px solid;border-color:#716F64 #fff #fff #716F64;box-shadow:inset 1px 1px 0 #9D9DA1"></div><svg style="position:absolute;left:19px;top:81px" width="16" height="14"><rect x="0.5" y="0.5" width="15" height="13" fill="#fff" stroke="#000"/><rect x="1" y="1" width="14" height="2" fill="#0000e0"/><path d="M2 5h12M2 7.5h12M2 10h12M5 4v9M8 4v9M11 4v9" stroke="#000" stroke-width="1"/></svg><div class="t" style="left:39px;top:80px;font-weight:bold;font-size:14px;line-height:16px;letter-spacing:0.46px">Смета</div><div style="left:104px;top:77px;width:169px;height:21px;background:#E0DFE3;border:1px solid;border-color:#fff #716F64 #716F64 #fff;box-shadow:inset -1px -1px 0 #9D9DA1"></div><svg style="position:absolute;left:118px;top:81px;" width="19" height="10" shape-rendering="crispEdges"><rect x="6" y="0" width="4" height="1" fill="#000"/><rect x="5" y="1" width="1" height="1" fill="#000"/><rect x="6" y="1" width="4" height="1" fill="#FFFF00"/><rect x="10" y="1" width="1" height="1" fill="#000"/><rect x="0" y="2" width="5" height="1" fill="#000"/><rect x="5" y="2" width="6" height="1" fill="#FFFF00"/><rect x="11" y="2" width="6" height="1" fill="#000"/><rect x="0" y="3" width="1" height="1" fill="#000"/><rect x="1" y="3" width="2" height="1" fill="#008080"/><rect x="3" y="3" width="1" height="1" fill="#000"/><rect x="4" y="3" width="13" height="1" fill="#FFFF00"/><rect x="17" y="3" width="1" height="1" fill="#000"/><rect x="0" y="4" width="1" height="1" fill="#000"/><rect x="1" y="4" width="2" height="1" fill="#008080"/><rect x="3" y="4" width="1" height="1" fill="#000"/><rect x="4" y="4" width="6" height="1" fill="#FFFF00"/><rect x="10" y="4" width="7" height="1" fill="#000"/><rect x="0" y="5" width="1" height="1" fill="#000"/><rect x="1" y="5" width="2" height="1" fill="#008080"/><rect x="3" y="5" width="1" height="1" fill="#000"/><rect x="4" y="5" width="9" height="1" fill="#FFFF00"/><rect x="13" y="5" width="1" height="1" fill="#000"/><rect x="0" y="6" width="1" height="1" fill="#000"/><rect x="1" y="6" width="2" height="1" fill="#008080"/><rect x="3" y="6" width="1" height="1" fill="#000"/><rect x="4" y="6" width="6" height="1" fill="#FFFF00"/><rect x="10" y="6" width="3" height="1" fill="#000"/><rect x="0" y="7" width="1" height="1" fill="#000"/><rect x="1" y="7" width="2" height="1" fill="#008080"/><rect x="3" y="7" width="1" height="1" fill="#000"/><rect x="4" y="7" width="8" height="1" fill="#FFFF00"/><rect x="12" y="7" width="1" height="1" fill="#000"/><rect x="0" y="8" width="1" height="1" fill="#000"/><rect x="1" y="8" width="2" height="1" fill="#008080"/><rect x="3" y="8" width="2" height="1" fill="#000"/><rect x="5" y="8" width="5" height="1" fill="#FFFF00"/><rect x="10" y="8" width="2" height="1" fill="#000"/><rect x="0" y="9" width="4" height="1" fill="#000"/><rect x="5" y="9" width="6" height="1" fill="#000"/></svg><div class="t" style="left:140px;top:80px;font-weight:bold;font-size:14px;line-height:16px;letter-spacing:0.48px">Текущая запись</div><div style="left:278px;top:79px;width:3px;height:19px;border-left:1px solid #fff;border-right:1px solid #9D9DA1"></div><div style="left:285px;top:77px;width:125px;height:21px;background:#E0DFE3;border:1px solid;border-color:#fff #716F64 #716F64 #fff;box-shadow:inset -1px -1px 0 #9D9DA1"></div><svg style="position:absolute;left:298px;top:81px;" width="15" height="15" shape-rendering="crispEdges"><rect x="5" y="0" width="5" height="1" fill="#000"/><rect x="3" y="1" width="2" height="1" fill="#000"/><rect x="10" y="1" width="2" height="1" fill="#000"/><rect x="2" y="2" width="1" height="1" fill="#000"/><rect x="12" y="2" width="1" height="1" fill="#000"/><rect x="1" y="3" width="1" height="1" fill="#000"/><rect x="3" y="3" width="5" height="1" fill="#000"/><rect x="13" y="3" width="1" height="1" fill="#000"/><rect x="1" y="4" width="1" height="1" fill="#000"/><rect x="3" y="4" width="1" height="1" fill="#000"/><rect x="4" y="4" width="3" height="1" fill="#f00"/><rect x="7" y="4" width="1" height="1" fill="#000"/><rect x="9" y="4" width="3" height="1" fill="#000"/><rect x="13" y="4" width="1" height="1" fill="#000"/><rect x="0" y="5" width="1" height="1" fill="#000"/><rect x="3" y="5" width="1" height="1" fill="#000"/><rect x="4" y="5" width="3" height="1" fill="#f00"/><rect x="7" y="5" width="2" height="1" fill="#000"/><rect x="9" y="5" width="3" height="1" fill="#FFFF00"/><rect x="12" y="5" width="1" height="1" fill="#000"/><rect x="14" y="5" width="1" height="1" fill="#000"/><rect x="0" y="6" width="1" height="1" fill="#000"/><rect x="3" y="6" width="1" height="1" fill="#000"/><rect x="4" y="6" width="3" height="1" fill="#f00"/><rect x="7" y="6" width="2" height="1" fill="#000"/><rect x="9" y="6" width="3" height="1" fill="#FFFF00"/><rect x="12" y="6" width="1" height="1" fill="#000"/><rect x="14" y="6" width="1" height="1" fill="#000"/><rect x="0" y="7" width="1" height="1" fill="#000"/><rect x="3" y="7" width="5" height="1" fill="#000"/><rect x="9" y="7" width="3" height="1" fill="#000"/><rect x="14" y="7" width="1" height="1" fill="#000"/><rect x="0" y="8" width="1" height="1" fill="#000"/><rect x="14" y="8" width="1" height="1" fill="#000"/><rect x="0" y="9" width="1" height="1" fill="#000"/><rect x="7" y="9" width="1" height="1" fill="#000"/><rect x="14" y="9" width="1" height="1" fill="#000"/><rect x="1" y="10" width="1" height="1" fill="#000"/><rect x="6" y="10" width="1" height="1" fill="#000"/><rect x="7" y="10" width="1" height="1" fill="#00f"/><rect x="8" y="10" width="1" height="1" fill="#000"/><rect x="13" y="10" width="1" height="1" fill="#000"/><rect x="1" y="11" width="1" height="1" fill="#000"/><rect x="5" y="11" width="1" height="1" fill="#000"/><rect x="6" y="11" width="3" height="1" fill="#00f"/><rect x="9" y="11" width="1" height="1" fill="#000"/><rect x="13" y="11" width="1" height="1" fill="#000"/><rect x="2" y="12" width="1" height="1" fill="#000"/><rect x="4" y="12" width="7" height="1" fill="#000"/><rect x="12" y="12" width="1" height="1" fill="#000"/><rect x="3" y="13" width="2" height="1" fill="#000"/><rect x="10" y="13" width="2" height="1" fill="#000"/><rect x="5" y="14" width="5" height="1" fill="#000"/></svg><div class="t" style="left:318px;top:80px;font-size:13.5px;line-height:16px">F7 - Ресурсы</div><div style="left:412px;top:79px;width:3px;height:19px;border-left:1px solid #fff;border-right:1px solid #9D9DA1"></div><div style="left:415px;top:77px;width:149px;height:21px;background:#E0DFE3;border:1px solid;border-color:#fff #716F64 #716F64 #fff;box-shadow:inset -1px -1px 0 #9D9DA1"></div><svg style="position:absolute;left:429px;top:81px;" width="11" height="15" shape-rendering="crispEdges"><rect x="1" y="0" width="9" height="1" fill="#000"/><rect x="0" y="1" width="1" height="1" fill="#000"/><rect x="1" y="1" width="9" height="1" fill="#C0C0C0"/><rect x="10" y="1" width="1" height="1" fill="#000"/><rect x="0" y="2" width="1" height="1" fill="#000"/><rect x="1" y="2" width="1" height="1" fill="#C0C0C0"/><rect x="2" y="2" width="7" height="1" fill="#000"/><rect x="9" y="2" width="1" height="1" fill="#C0C0C0"/><rect x="10" y="2" width="1" height="1" fill="#000"/><rect x="0" y="3" width="1" height="1" fill="#000"/><rect x="1" y="3" width="1" height="1" fill="#C0C0C0"/><rect x="2" y="3" width="3" height="1" fill="#000"/><rect x="5" y="3" width="1" height="1" fill="#00FFFF"/><rect x="6" y="3" width="1" height="1" fill="#000"/><rect x="7" y="3" width="1" height="1" fill="#00FFFF"/><rect x="8" y="3" width="1" height="1" fill="#000"/><rect x="9" y="3" width="1" height="1" fill="#C0C0C0"/><rect x="10" y="3" width="1" height="1" fill="#000"/><rect x="0" y="4" width="1" height="1" fill="#000"/><rect x="1" y="4" width="1" height="1" fill="#C0C0C0"/><rect x="2" y="4" width="7" height="1" fill="#000"/><rect x="9" y="4" width="1" height="1" fill="#C0C0C0"/><rect x="10" y="4" width="1" height="1" fill="#000"/><rect x="0" y="5" width="1" height="1" fill="#000"/><rect x="1" y="5" width="9" height="1" fill="#C0C0C0"/><rect x="10" y="5" width="1" height="1" fill="#000"/><rect x="0" y="6" width="1" height="1" fill="#000"/><rect x="1" y="6" width="1" height="1" fill="#C0C0C0"/><rect x="2" y="6" width="1" height="1" fill="#000"/><rect x="3" y="6" width="1" height="1" fill="#C0C0C0"/><rect x="4" y="6" width="1" height="1" fill="#000"/><rect x="5" y="6" width="1" height="1" fill="#C0C0C0"/><rect x="6" y="6" width="1" height="1" fill="#000"/><rect x="7" y="6" width="1" height="1" fill="#C0C0C0"/><rect x="8" y="6" width="1" height="1" fill="#000"/><rect x="9" y="6" width="1" height="1" fill="#C0C0C0"/><rect x="10" y="6" width="1" height="1" fill="#000"/><rect x="0" y="7" width="1" height="1" fill="#000"/><rect x="1" y="7" width="9" height="1" fill="#C0C0C0"/><rect x="10" y="7" width="1" height="1" fill="#000"/><rect x="0" y="8" width="1" height="1" fill="#000"/><rect x="1" y="8" width="1" height="1" fill="#C0C0C0"/><rect x="2" y="8" width="1" height="1" fill="#000"/><rect x="3" y="8" width="1" height="1" fill="#C0C0C0"/><rect x="4" y="8" width="1" height="1" fill="#000"/><rect x="5" y="8" width="1" height="1" fill="#C0C0C0"/><rect x="6" y="8" width="1" height="1" fill="#000"/><rect x="7" y="8" width="1" height="1" fill="#C0C0C0"/><rect x="8" y="8" width="1" height="1" fill="#000"/><rect x="9" y="8" width="1" height="1" fill="#C0C0C0"/><rect x="10" y="8" width="1" height="1" fill="#000"/><rect x="0" y="9" width="1" height="1" fill="#000"/><rect x="1" y="9" width="9" height="1" fill="#C0C0C0"/><rect x="10" y="9" width="1" height="1" fill="#000"/><rect x="0" y="10" width="1" height="1" fill="#000"/><rect x="1" y="10" width="1" height="1" fill="#C0C0C0"/><rect x="2" y="10" width="1" height="1" fill="#000"/><rect x="3" y="10" width="1" height="1" fill="#C0C0C0"/><rect x="4" y="10" width="1" height="1" fill="#000"/><rect x="5" y="10" width="1" height="1" fill="#C0C0C0"/><rect x="6" y="10" width="1" height="1" fill="#000"/><rect x="7" y="10" width="1" height="1" fill="#C0C0C0"/><rect x="8" y="10" width="1" height="1" fill="#000"/><rect x="9" y="10" width="1" height="1" fill="#C0C0C0"/><rect x="10" y="10" width="1" height="1" fill="#000"/><rect x="0" y="11" width="1" height="1" fill="#000"/><rect x="1" y="11" width="9" height="1" fill="#C0C0C0"/><rect x="10" y="11" width="1" height="1" fill="#000"/><rect x="0" y="12" width="1" height="1" fill="#000"/><rect x="1" y="12" width="1" height="1" fill="#C0C0C0"/><rect x="2" y="12" width="1" height="1" fill="#000"/><rect x="3" y="12" width="1" height="1" fill="#C0C0C0"/><rect x="4" y="12" width="1" height="1" fill="#000"/><rect x="5" y="12" width="1" height="1" fill="#C0C0C0"/><rect x="6" y="12" width="3" height="1" fill="#f00"/><rect x="9" y="12" width="1" height="1" fill="#C0C0C0"/><rect x="10" y="12" width="1" height="1" fill="#000"/><rect x="0" y="13" width="1" height="1" fill="#000"/><rect x="1" y="13" width="9" height="1" fill="#C0C0C0"/><rect x="10" y="13" width="1" height="1" fill="#000"/><rect x="1" y="14" width="9" height="1" fill="#000"/></svg><div class="t" style="left:447px;top:80px;font-size:13.5px;line-height:16px">F6 - Начисления</div><div style="left:568px;top:77px;width:208px;height:21px;background:#E0DFE3;border:1px solid;border-color:#fff #716F64 #716F64 #fff;box-shadow:inset -1px -1px 0 #9D9DA1"></div><svg style="position:absolute;left:580px;top:81px;" width="12" height="13" shape-rendering="crispEdges"><rect x="0" y="0" width="9" height="1" fill="#A0A0A0"/><rect x="0" y="1" width="1" height="1" fill="#A0A0A0"/><rect x="1" y="1" width="7" height="1" fill="#FFFFFF"/><rect x="8" y="1" width="2" height="1" fill="#A0A0A0"/><rect x="0" y="2" width="1" height="1" fill="#A0A0A0"/><rect x="1" y="2" width="1" height="1" fill="#FFFFFF"/><rect x="2" y="2" width="1" height="1" fill="#A0A0A0"/><rect x="3" y="2" width="1" height="1" fill="#FFFFFF"/><rect x="4" y="2" width="2" height="1" fill="#A0A0A0"/><rect x="6" y="2" width="1" height="1" fill="#FFFFFF"/><rect x="7" y="2" width="1" height="1" fill="#A0A0A0"/><rect x="8" y="2" width="1" height="1" fill="#FFFFFF"/><rect x="9" y="2" width="2" height="1" fill="#A0A0A0"/><rect x="0" y="3" width="1" height="1" fill="#A0A0A0"/><rect x="1" y="3" width="1" height="1" fill="#FFFFFF"/><rect x="2" y="3" width="1" height="1" fill="#A0A0A0"/><rect x="3" y="3" width="1" height="1" fill="#FFFFFF"/><rect x="4" y="3" width="1" height="1" fill="#A0A0A0"/><rect x="5" y="3" width="1" height="1" fill="#FFFFFF"/><rect x="6" y="3" width="1" height="1" fill="#A0A0A0"/><rect x="7" y="3" width="1" height="1" fill="#FFFFFF"/><rect x="8" y="3" width="1" height="1" fill="#A0A0A0"/><rect x="9" y="3" width="1" height="1" fill="#FFFFFF"/><rect x="10" y="3" width="2" height="1" fill="#A0A0A0"/><rect x="0" y="4" width="1" height="1" fill="#A0A0A0"/><rect x="1" y="4" width="10" height="1" fill="#FFFFFF"/><rect x="11" y="4" width="1" height="1" fill="#A0A0A0"/><rect x="0" y="5" width="1" height="1" fill="#A0A0A0"/><rect x="1" y="5" width="3" height="1" fill="#FFFFFF"/><rect x="4" y="5" width="2" height="1" fill="#A0A0A0"/><rect x="6" y="5" width="5" height="1" fill="#FFFFFF"/><rect x="11" y="5" width="1" height="1" fill="#A0A0A0"/><rect x="0" y="6" width="1" height="1" fill="#A0A0A0"/><rect x="1" y="6" width="4" height="1" fill="#FFFFFF"/><rect x="5" y="6" width="1" height="1" fill="#A0A0A0"/><rect x="6" y="6" width="5" height="1" fill="#FFFFFF"/><rect x="11" y="6" width="1" height="1" fill="#A0A0A0"/><rect x="0" y="7" width="1" height="1" fill="#A0A0A0"/><rect x="1" y="7" width="4" height="1" fill="#FFFFFF"/><rect x="5" y="7" width="1" height="1" fill="#A0A0A0"/><rect x="6" y="7" width="5" height="1" fill="#FFFFFF"/><rect x="11" y="7" width="1" height="1" fill="#A0A0A0"/><rect x="0" y="8" width="1" height="1" fill="#A0A0A0"/><rect x="1" y="8" width="3" height="1" fill="#FFFFFF"/><rect x="4" y="8" width="3" height="1" fill="#A0A0A0"/><rect x="7" y="8" width="4" height="1" fill="#FFFFFF"/><rect x="11" y="8" width="1" height="1" fill="#A0A0A0"/><rect x="0" y="9" width="1" height="1" fill="#A0A0A0"/><rect x="1" y="9" width="10" height="1" fill="#FFFFFF"/><rect x="11" y="9" width="1" height="1" fill="#A0A0A0"/><rect x="0" y="10" width="2" height="1" fill="#A0A0A0"/><rect x="2" y="10" width="1" height="1" fill="#FFFFFF"/><rect x="3" y="10" width="1" height="1" fill="#A0A0A0"/><rect x="4" y="10" width="1" height="1" fill="#FFFFFF"/><rect x="5" y="10" width="1" height="1" fill="#A0A0A0"/><rect x="6" y="10" width="1" height="1" fill="#FFFFFF"/><rect x="7" y="10" width="1" height="1" fill="#A0A0A0"/><rect x="8" y="10" width="1" height="1" fill="#FFFFFF"/><rect x="9" y="10" width="1" height="1" fill="#A0A0A0"/><rect x="10" y="10" width="1" height="1" fill="#FFFFFF"/><rect x="11" y="10" width="1" height="1" fill="#A0A0A0"/><rect x="0" y="11" width="1" height="1" fill="#A0A0A0"/><rect x="1" y="11" width="10" height="1" fill="#FFFFFF"/><rect x="11" y="11" width="1" height="1" fill="#A0A0A0"/><rect x="0" y="12" width="12" height="1" fill="#A0A0A0"/></svg><div class="t" style="left:599px;top:80px;font-size:13.5px;line-height:16px;color:#A0A0A0">Ctrl+I - Коэф-ты пересчета</div><div style="left:0px;top:98px;width:1679px;height:1px;background:#9D9DA1"></div><div style="left:0px;top:102px;width:1679px;height:1px;background:#FFFFF8"></div><div style="left:4px;top:105px;width:14px;height:507px;background:#A6CAF0"></div><svg style="position:absolute;left:7px;top:110px" width="8" height="10"><path d="M6 1 L2 5 L6 9" stroke="#000" stroke-width="1.6" fill="none"/></svg><div class="t" style="left:-15px;top:361px;width:50px;transform:rotate(-90deg);font-size:12px;letter-spacing:0.45px;text-align:center">Разделы</div><div style="left:17px;top:105px;width:106px;height:507px;background:#FFFBF0;border-left:1px solid #716F64;border-top:1px solid #716F64"></div><div style="left:18px;top:106px;width:105px;height:17px;background:#B4B6C2"></div><div class="t" style="left:21px;top:109px;font-size:12px;letter-spacing:0.9px;clip-path:inset(0 0 0 0);overflow:hidden;width:102px">1: Основание из</div><div style="left:123px;top:105px;width:1px;height:507px;background:#fff"></div><div style="left:124px;top:105px;width:3px;height:508px;background:#9D9DA1"></div><div style="left:127px;top:106px;width:1531px;height:506px;background:#fff;border-left:1px solid #716F64;border-top:1px solid #716F64"></div><div style="left:128px;top:107px;width:32px;height:72px;background:#C0DCC0;border-left:1px solid #fff;border-top:1px solid #fff;border-right:1px solid #000;border-bottom:1px solid #000"></div><div class="t hd" style="left:128px;top:135px;width:31px;text-align:center;line-height:16px;font-size:13px;letter-spacing:0.55px">№</div><div style="left:160px;top:107px;width:121px;height:72px;background:#C0DCC0;border-left:1px solid #fff;border-top:1px solid #fff;border-right:1px solid #000;border-bottom:1px solid #000"></div><div class="t hd" style="left:160px;top:135px;width:120px;text-align:center;line-height:16px;font-size:13px;letter-spacing:0.55px">Шифр</div><div style="left:281px;top:107px;width:79px;height:72px;background:#C0DCC0;border-left:1px solid #fff;border-top:1px solid #fff;border-right:1px solid #000;border-bottom:1px solid #000"></div><div class="t hd" style="left:281px;top:135px;width:78px;text-align:center;line-height:16px;font-size:13px;letter-spacing:0.55px">Кол-во</div><div style="left:360px;top:107px;width:83px;height:72px;background:#C0DCC0;border-left:1px solid #fff;border-top:1px solid #fff;border-right:1px solid #000;border-bottom:1px solid #000"></div><div class="t hd" style="left:360px;top:135px;width:82px;text-align:center;line-height:16px;font-size:13px;letter-spacing:0.55px">Ед. изм.</div><div style="left:443px;top:107px;width:426px;height:72px;background:#C0DCC0;border-left:1px solid #fff;border-top:1px solid #fff;border-right:1px solid #000;border-bottom:1px solid #000"></div><div class="t hd" style="left:443px;top:135px;width:425px;text-align:center;line-height:16px;font-size:13px;letter-spacing:0.55px">Наименование работ и затрат</div><div style="left:869px;top:107px;width:87px;height:72px;background:#C0DCC0;border-left:1px solid #fff;border-top:1px solid #fff;border-right:1px solid #000;border-bottom:1px solid #000"></div><div class="t hd" style="left:869px;top:127px;width:86px;text-align:center;line-height:16px;font-size:13px;letter-spacing:0.55px">Ст-ть<br>единицы</div><div style="left:956px;top:107px;width:93px;height:72px;background:#C0DCC0;border-left:1px solid #fff;border-top:1px solid #fff;border-right:1px solid #000;border-bottom:1px solid #000"></div><div class="t hd" style="left:956px;top:127px;width:92px;text-align:center;line-height:16px;font-size:13px;letter-spacing:0.55px">Прямые<br>затраты, руб.</div><div style="left:1049px;top:107px;width:419px;height:32px;background:#C0DCC0;border-left:1px solid #fff;border-top:1px solid #fff;border-right:1px solid #000;border-bottom:1px solid #000"></div><div class="t hd" style="left:1049px;top:115px;width:418px;text-align:center;line-height:16px;font-size:13px;letter-spacing:0.55px">в том числе</div><div style="left:1049px;top:139px;width:95px;height:40px;background:#C0DCC0;border-left:1px solid #fff;border-top:1px solid #fff;border-right:1px solid #000;border-bottom:1px solid #000"></div><div class="t hd" style="left:1049px;top:143px;width:94px;text-align:center;line-height:16px;font-size:13px;letter-spacing:0.55px">оплата труда<br>рабочих</div><div style="left:1144px;top:139px;width:230px;height:20px;background:#C0DCC0;border-left:1px solid #fff;border-top:1px solid #fff;border-right:1px solid #000;border-bottom:1px solid #000"></div><div class="t hd" style="left:1144px;top:141px;width:229px;text-align:center;line-height:16px;font-size:13px;letter-spacing:0.55px">эксплуатация машин</div><div style="left:1144px;top:159px;width:101px;height:20px;background:#C0DCC0;border-left:1px solid #fff;border-top:1px solid #fff;border-right:1px solid #000;border-bottom:1px solid #000"></div><div class="t hd" style="left:1144px;top:161px;width:100px;text-align:center;line-height:16px;font-size:13px;letter-spacing:0.55px">всего</div><div style="left:1245px;top:159px;width:129px;height:20px;background:#C0DCC0;border-left:1px solid #fff;border-top:1px solid #fff;border-right:1px solid #000;border-bottom:1px solid #000"></div><div class="t hd" style="left:1245px;top:161px;width:128px;text-align:center;line-height:16px;font-size:13px;letter-spacing:0.55px">в т.ч. оплата мех.</div><div style="left:1374px;top:139px;width:94px;height:40px;background:#C0DCC0;border-left:1px solid #fff;border-top:1px solid #fff;border-right:1px solid #000;border-bottom:1px solid #000"></div><div class="t hd" style="left:1374px;top:143px;width:93px;text-align:center;line-height:16px;font-size:13px;letter-spacing:0.55px">материал.<br>ресурсы</div><div style="left:1468px;top:107px;width:188px;height:36px;background:#C0DCC0;border-left:1px solid #fff;border-top:1px solid #fff;border-right:1px solid #000;border-bottom:1px solid #000"></div><div class="t hd" style="left:1468px;top:109px;width:187px;text-align:center;line-height:16px;font-size:13px;letter-spacing:0.55px">Всего трудозатраты,<br>чел.час</div><div style="left:1468px;top:143px;width:94px;height:36px;background:#C0DCC0;border-left:1px solid #fff;border-top:1px solid #fff;border-right:1px solid #000;border-bottom:1px solid #000"></div><div class="t hd" style="left:1468px;top:145px;width:93px;text-align:center;line-height:16px;font-size:13px;letter-spacing:0.55px">не занят.<br>обсл. машин</div><div style="left:1562px;top:143px;width:94px;height:36px;background:#C0DCC0;border-left:1px solid #fff;border-top:1px solid #fff;border-right:1px solid #000;border-bottom:1px solid #000"></div><div class="t hd" style="left:1562px;top:145px;width:93px;text-align:center;line-height:16px;font-size:13px;letter-spacing:0.55px">обслуж.<br>машины</div><div style="left:128px;top:178px;width:1529px;height:2px;background:#000"></div><div style="left:1656px;top:107px;width:1px;height:72px;background:#fff"></div><div style="left:1657px;top:107px;width:1px;height:72px;background:#008080"></div><div style="left:128px;top:180px;width:31px;height:19px;background:#E0DFE3"></div><div style="left:160px;top:180px;width:120px;height:19px;background:#FFFBF0"></div><div style="left:281px;top:180px;width:1376px;height:19px;background:#fff"></div><div style="left:128px;top:199px;width:1529px;height:1px;background:#C0C0C0"></div><div class="t" style="left:162px;top:182px;width:117px;overflow:hidden;color:#0000FF;font-weight:bold;font-size:14px;letter-spacing:0.73px;line-height:16px">Раздел</div><div class="t" style="left:445px;top:182px;width:422px;overflow:hidden;font-weight:bold;font-size:14px;letter-spacing:0.4px;line-height:16px">Основание из песка толщ. 30 см</div><div style="left:128px;top:200px;width:31px;height:20px;background:#E0DFE3"></div><div style="left:160px;top:200px;width:120px;height:20px;background:#FFFBF0"></div><div style="left:281px;top:200px;width:1376px;height:20px;background:#fff"></div><div style="left:128px;top:220px;width:1529px;height:1px;background:#C0C0C0"></div><div class="t" style="left:162px;top:202px;width:117px;overflow:hidden;color:#808000;font-weight:bold;font-size:14px;letter-spacing:0.5px;line-height:16px">1-2010. ТЕР НО.2</div><div class="t" style="left:445px;top:203px;width:422px;overflow:hidden;letter-spacing:0.55px;font-size:13px;line-height:16px">Проезды</div><div style="left:128px;top:221px;width:31px;height:20px;background:#E0DFE3"></div><div style="left:160px;top:221px;width:120px;height:20px;background:#FFFBF0"></div><div style="left:281px;top:221px;width:1376px;height:20px;background:#fff"></div><div style="left:281px;top:221px;width:78px;height:20px;background:#FFFF00"></div><div style="left:443px;top:221px;width:425px;height:20px;background:#FFFF00"></div><div style="left:128px;top:241px;width:1529px;height:1px;background:#C0C0C0"></div><div class="t" style="left:128px;top:224px;width:31px;text-align:center;font-size:13px;line-height:16px">1</div><div class="t" style="left:162px;top:224px;width:117px;overflow:hidden;letter-spacing:-0.15px;font-size:13px;line-height:16px">ФЕР 27-04-001-1</div><svg style="position:absolute;left:262px;top:224px" width="17" height="16"><circle cx="8" cy="8" r="7.3" fill="#fff" stroke="#000" stroke-width="1.1"/><path d="M4.5 4.5 h7 M5.5 4.5 v7 M10.5 4.5 v7" stroke="#000" stroke-width="1.1"/></svg><div class="t" style="left:281px;top:224px;width:75px;text-align:right;letter-spacing:-0.3px;font-size:13px;line-height:16px">3.0</div><div class="t" style="left:362px;top:224px;width:80px;overflow:hidden;letter-spacing:0.55px;font-size:13px;line-height:16px">100 м3 материала</div><div class="t" style="left:445px;top:224px;width:422px;overflow:hidden;letter-spacing:0.55px;font-size:13px;line-height:16px">Устройство подстилающих и выравнивающих слоев оснований:...</div><svg style="position:absolute;left:869px;top:231px" width="8" height="8"><circle cx="4" cy="4" r="3.2" fill="#2080ff" stroke="#003080"/></svg><div class="t" style="left:869px;top:224px;width:83px;text-align:right;letter-spacing:-0.3px;font-size:13px;line-height:16px">3 909.95</div><div class="t" style="left:956px;top:224px;width:89px;text-align:right;letter-spacing:-0.3px;font-size:13px;line-height:16px">11 729.86</div><div class="t" style="left:1049px;top:224px;width:91px;text-align:right;letter-spacing:-0.3px;font-size:13px;line-height:16px">599.51</div><div class="t" style="left:1144px;top:224px;width:97px;text-align:right;letter-spacing:-0.3px;font-size:13px;line-height:16px">11 093.75</div><div class="t" style="left:1245px;top:224px;width:125px;text-align:right;letter-spacing:-0.3px;font-size:13px;line-height:16px">919.03</div><div class="t" style="left:1374px;top:224px;width:90px;text-align:right;letter-spacing:-0.3px;font-size:13px;line-height:16px">36.60</div><div class="t" style="left:1468px;top:224px;width:90px;text-align:right;letter-spacing:-0.3px;font-size:13px;line-height:16px">74.84292</div><div class="t" style="left:1562px;top:224px;width:90px;text-align:right;letter-spacing:-0.3px;font-size:13px;line-height:16px">71.829</div><div style="left:128px;top:242px;width:31px;height:20px;background:#A0A0A4"></div><div style="left:160px;top:242px;width:120px;height:20px;background:#A0A0A4"></div><div style="left:281px;top:242px;width:1376px;height:20px;background:#A0A0A4"></div><div style="left:443px;top:242px;width:425px;height:20px;background:#0000FF"></div><div style="left:128px;top:262px;width:1529px;height:1px;background:#C0C0C0"></div><div class="t" style="left:128px;top:245px;width:31px;text-align:center;font-size:13px;line-height:16px">2</div><div class="t" style="left:162px;top:245px;width:117px;overflow:hidden;letter-spacing:-0.15px;font-size:13px;line-height:16px">ФЕР 27-04-003-4</div><svg style="position:absolute;left:262px;top:245px" width="17" height="16"><circle cx="8" cy="8" r="7.3" fill="#fff" stroke="#000" stroke-width="1.1"/><path d="M4.5 4.5 h7 M5.5 4.5 v7 M10.5 4.5 v7" stroke="#000" stroke-width="1.1"/></svg><div class="t" style="left:281px;top:245px;width:75px;text-align:right;letter-spacing:-0.3px;font-size:13px;line-height:16px">1.0</div><div class="t" style="left:362px;top:245px;width:80px;overflow:hidden;letter-spacing:0.55px;font-size:13px;line-height:16px">1000 м2 основания</div><div class="t" style="left:445px;top:245px;width:422px;overflow:hidden;color:#fff;letter-spacing:0.55px;font-size:13px;line-height:16px">Устройство оснований и покрытий из песчано-гравийных смесей</div><svg style="position:absolute;left:869px;top:244px" width="8" height="16"><circle cx="4" cy="4" r="3.2" fill="#ffd800" stroke="#604000"/><circle cx="4" cy="12" r="3.2" fill="#2080ff" stroke="#003080"/></svg><div class="t" style="left:869px;top:245px;width:83px;text-align:right;letter-spacing:-0.3px;font-size:13px;line-height:16px">7 313.37</div><div class="t" style="left:956px;top:245px;width:89px;text-align:right;letter-spacing:-0.3px;font-size:13px;line-height:16px">7 313.37</div><div class="t" style="left:1049px;top:245px;width:91px;text-align:right;letter-spacing:-0.3px;font-size:13px;line-height:16px">693.50</div><div class="t" style="left:1144px;top:245px;width:97px;text-align:right;letter-spacing:-0.3px;font-size:13px;line-height:16px">6 592.30</div><div class="t" style="left:1245px;top:245px;width:125px;text-align:right;letter-spacing:-0.3px;font-size:13px;line-height:16px">578.56</div><div class="t" style="left:1374px;top:245px;width:90px;text-align:right;letter-spacing:-0.3px;font-size:13px;line-height:16px">27.57</div><div class="t" style="left:1468px;top:245px;width:90px;text-align:right;letter-spacing:-0.3px;font-size:13px;line-height:16px">77.50908</div><div class="t" style="left:1562px;top:245px;width:90px;text-align:right;letter-spacing:-0.3px;font-size:13px;line-height:16px">43.10775</div><div style="left:128px;top:263px;width:31px;height:20px;background:#E0DFE3"></div><div style="left:160px;top:263px;width:120px;height:20px;background:#FFFBF0"></div><div style="left:281px;top:263px;width:1376px;height:20px;background:#fff"></div><div style="left:128px;top:283px;width:1529px;height:1px;background:#C0C0C0"></div><div class="t" style="left:128px;top:266px;width:31px;text-align:center;font-size:13px;line-height:16px">3</div><div class="t" style="left:162px;top:266px;width:117px;overflow:hidden;letter-spacing:-0.15px;font-size:13px;line-height:16px">ФССЦ 408-0200</div><div class="t" style="left:281px;top:266px;width:75px;text-align:right;letter-spacing:-0.3px;font-size:13px;line-height:16px">146.4</div><div class="t" style="left:362px;top:266px;width:80px;overflow:hidden;letter-spacing:0.55px;font-size:13px;line-height:16px">м3</div><div class="t" style="left:445px;top:266px;width:422px;overflow:hidden;letter-spacing:0.55px;font-size:13px;line-height:16px">Смесь песчано-гравийная природная</div><div class="t" style="left:869px;top:266px;width:83px;text-align:right;letter-spacing:-0.3px;font-size:13px;line-height:16px">60.00</div><div class="t" style="left:956px;top:266px;width:89px;text-align:right;letter-spacing:-0.3px;font-size:13px;line-height:16px">8 784.00</div><div class="t" style="left:1374px;top:266px;width:90px;text-align:right;letter-spacing:-0.3px;font-size:13px;line-height:16px">8 784.00</div><div style="left:128px;top:284px;width:31px;height:20px;background:#E0DFE3"></div><div style="left:160px;top:284px;width:120px;height:20px;background:#FFFBF0"></div><div style="left:281px;top:284px;width:1376px;height:20px;background:#fff"></div><div style="left:128px;top:304px;width:1529px;height:1px;background:#C0C0C0"></div><div class="t" style="left:162px;top:286px;width:117px;overflow:hidden;color:#808000;font-weight:bold;font-size:14px;letter-spacing:0.5px;line-height:16px">1-2010. ТЕР НО.5</div><div class="t" style="left:445px;top:287px;width:422px;overflow:hidden;letter-spacing:0.55px;font-size:13px;line-height:16px">Погрузо-разгрузочные работы</div><div style="left:128px;top:305px;width:31px;height:20px;background:#E0DFE3"></div><div style="left:160px;top:305px;width:120px;height:20px;background:#FFFBF0"></div><div style="left:281px;top:305px;width:1376px;height:20px;background:#fff"></div><div style="left:128px;top:325px;width:1529px;height:1px;background:#C0C0C0"></div><div class="t" style="left:128px;top:308px;width:31px;text-align:center;font-size:13px;line-height:16px">4</div><div class="t" style="left:162px;top:308px;width:117px;overflow:hidden;letter-spacing:-0.15px;font-size:13px;line-height:16px">&nbsp;311-01-142-1</div><div class="t" style="left:281px;top:308px;width:75px;text-align:right;letter-spacing:-0.3px;font-size:13px;line-height:16px">234.24</div><div class="t" style="left:362px;top:308px;width:80px;overflow:hidden;letter-spacing:0.55px;font-size:13px;line-height:16px">т</div><div class="t" style="left:445px;top:308px;width:422px;overflow:hidden;letter-spacing:0.55px;font-size:13px;line-height:16px">Погрузка. Песок</div><div class="t" style="left:869px;top:308px;width:83px;text-align:right;letter-spacing:-0.3px;font-size:13px;line-height:16px">2.26</div><div class="t" style="left:956px;top:308px;width:89px;text-align:right;letter-spacing:-0.3px;font-size:13px;line-height:16px">529.38</div><div class="t" style="left:1144px;top:308px;width:97px;text-align:right;letter-spacing:-0.3px;font-size:13px;line-height:16px">529.38</div><div class="t" style="left:1245px;top:308px;width:125px;text-align:right;letter-spacing:-0.3px;font-size:13px;line-height:16px">56.22</div><div class="t" style="left:1562px;top:308px;width:90px;text-align:right;letter-spacing:-0.3px;font-size:13px;line-height:16px">4.21632</div><div style="left:128px;top:326px;width:31px;height:20px;background:#E0DFE3"></div><div style="left:160px;top:326px;width:120px;height:20px;background:#FFFBF0"></div><div style="left:281px;top:326px;width:1376px;height:20px;background:#fff"></div><div style="left:128px;top:346px;width:1529px;height:1px;background:#C0C0C0"></div><div class="t" style="left:162px;top:328px;width:117px;overflow:hidden;color:#808000;font-weight:bold;font-size:14px;letter-spacing:0.5px;line-height:16px">1-2010. ТЕР НО.4</div><div class="t" style="left:445px;top:329px;width:422px;overflow:hidden;letter-spacing:0.55px;font-size:13px;line-height:16px">Перевозка грузов</div><div style="left:128px;top:347px;width:31px;height:20px;background:#E0DFE3"></div><div style="left:160px;top:347px;width:120px;height:20px;background:#FFFBF0"></div><div style="left:281px;top:347px;width:1376px;height:20px;background:#fff"></div><div style="left:128px;top:367px;width:1529px;height:1px;background:#C0C0C0"></div><div class="t" style="left:128px;top:350px;width:31px;text-align:center;font-size:13px;line-height:16px">5</div><div class="t" style="left:162px;top:350px;width:117px;overflow:hidden;letter-spacing:-0.15px;font-size:13px;line-height:16px">&nbsp;310-3010-1</div><div class="t" style="left:281px;top:350px;width:75px;text-align:right;letter-spacing:-0.3px;font-size:13px;line-height:16px">234.24</div><div class="t" style="left:362px;top:350px;width:80px;overflow:hidden;letter-spacing:0.55px;font-size:13px;line-height:16px">т</div><div class="t" style="left:445px;top:350px;width:422px;overflow:hidden;letter-spacing:0.55px;font-size:13px;line-height:16px">Перевозка грузов автомобилями-самосвалами грузоподъемн...</div><div class="t" style="left:869px;top:350px;width:83px;text-align:right;letter-spacing:-0.3px;font-size:13px;line-height:16px">10.41</div><div class="t" style="left:956px;top:350px;width:89px;text-align:right;letter-spacing:-0.3px;font-size:13px;line-height:16px">2 438.44</div><div class="t" style="left:1144px;top:350px;width:97px;text-align:right;letter-spacing:-0.3px;font-size:13px;line-height:16px">2 438.44</div><div style="left:159px;top:180px;width:1px;height:188px;background:#C0C0C0"></div><div style="left:280px;top:180px;width:1px;height:188px;background:#C0C0C0"></div><div style="left:359px;top:180px;width:1px;height:188px;background:#C0C0C0"></div><div style="left:442px;top:180px;width:1px;height:188px;background:#C0C0C0"></div><div style="left:868px;top:180px;width:1px;height:188px;background:#C0C0C0"></div><div style="left:955px;top:180px;width:1px;height:188px;background:#C0C0C0"></div><div style="left:1048px;top:180px;width:1px;height:188px;background:#C0C0C0"></div><div style="left:1143px;top:180px;width:1px;height:188px;background:#C0C0C0"></div><div style="left:1244px;top:180px;width:1px;height:188px;background:#C0C0C0"></div><div style="left:1373px;top:180px;width:1px;height:188px;background:#C0C0C0"></div><div style="left:1467px;top:180px;width:1px;height:188px;background:#C0C0C0"></div><div style="left:1561px;top:180px;width:1px;height:188px;background:#C0C0C0"></div><div style="left:1655px;top:180px;width:1px;height:188px;background:#C0C0C0"></div><div style="left:127px;top:180px;width:1px;height:432px;background:#716F64"></div><div style="left:128px;top:595px;width:1530px;height:17px;background:linear-gradient(#EEEEF2,#F8F8FA)"></div><div style="left:128px;top:595px;width:16px;height:16px;background:linear-gradient(#F4F4F8,#C8CAD8);border:1px solid #B0B2C4;border-radius:2px"></div><svg style="position:absolute;left:132px;top:598px" width="8" height="10"><path d="M6 1 L2 5 L6 9" stroke="#303030" stroke-width="1.8" fill="none"/></svg><div style="left:146px;top:595px;width:16px;height:16px;background:linear-gradient(#F4F4F8,#C8CAD8);border:1px solid #B0B2C4;border-radius:2px"></div><svg style="position:absolute;left:150px;top:600px" width="8" height="6"><path d="M0.5 0v6M2.5 0v6M4.5 0v6M6.5 0v6" stroke="#9090a0"/></svg><div style="left:1641px;top:595px;width:16px;height:16px;background:linear-gradient(#F4F4F8,#C8CAD8);border:1px solid #B0B2C4;border-radius:2px"></div><svg style="position:absolute;left:1645px;top:598px" width="8" height="10"><path d="M2 1 L6 5 L2 9" stroke="#303030" stroke-width="1.8" fill="none"/></svg><div style="left:1658px;top:105px;width:19px;height:508px;background:repeating-conic-gradient(#F8F8F4 0 25%,#E0DFE3 0 50%) 0 0/2px 2px"></div><div style="left:1658px;top:105px;width:1px;height:508px;background:#F1EFE2"></div><div style="left:1660px;top:105px;width:16px;height:17px;background:#E0DFE3;border:1px solid;border-color:#fff #716F64 #716F64 #fff;box-shadow:inset -1px -1px 0 #9D9DA1"></div><svg style="position:absolute;left:1663px;top:110px" width="9" height="6"><path d="M0 5 L4.5 0.5 L9 5Z" fill="#000"/></svg><div style="left:1660px;top:293px;width:16px;height:17px;background:#E0DFE3;border:1px solid;border-color:#fff #716F64 #716F64 #fff;box-shadow:inset -1px -1px 0 #9D9DA1"></div><div style="left:1660px;top:596px;width:16px;height:17px;background:#E0DFE3;border:1px solid;border-color:#fff #716F64 #716F64 #fff;box-shadow:inset -1px -1px 0 #9D9DA1"></div><svg style="position:absolute;left:1664px;top:602px" width="9" height="6"><path d="M0 1 L4.5 5.5 L9 1Z" fill="#000"/></svg><div style="left:0px;top:612px;width:1680px;height:4px;background:#9D9DA1"></div><div style="left:1679px;top:98px;width:1px;height:886px;background:#716F64"></div><div style="left:4px;top:616px;width:28px;height:265px;background:#007A3D"></div><svg style="position:absolute;left:9px;top:621px" width="9" height="9"><path d="M1 1 L8 8 M8 1 L1 8" stroke="#000" stroke-width="1.2"/></svg><div style="left:7px;top:642px;width:23px;height:21px;background:#E0DFE3;border:1px solid;border-color:#fff #716F64 #716F64 #fff;box-shadow:inset -1px -1px 0 #9D9DA1"></div><div style="left:7px;top:665px;width:23px;height:21px;background:#E0DFE3;border:1px solid;border-color:#fff #716F64 #716F64 #fff;box-shadow:inset -1px -1px 0 #9D9DA1"></div><div style="left:7px;top:688px;width:23px;height:21px;background:#E0DFE3;border:1px solid;border-color:#fff #716F64 #716F64 #fff;box-shadow:inset -1px -1px 0 #9D9DA1"></div><div style="left:7px;top:711px;width:23px;height:21px;background:#E0DFE3;border:1px solid;border-color:#fff #716F64 #716F64 #fff;box-shadow:inset -1px -1px 0 #9D9DA1"></div><div style="left:7px;top:734px;width:23px;height:21px;background:#E0DFE3;border:1px solid;border-color:#fff #716F64 #716F64 #fff;box-shadow:inset -1px -1px 0 #9D9DA1"></div><div style="left:7px;top:757px;width:23px;height:21px;background:#E0DFE3;border:1px solid;border-color:#fff #716F64 #716F64 #fff;box-shadow:inset -1px -1px 0 #9D9DA1"></div><div style="left:7px;top:780px;width:23px;height:21px;background:#E0DFE3;border:1px solid;border-color:#fff #716F64 #716F64 #fff;box-shadow:inset -1px -1px 0 #9D9DA1"></div><div style="left:7px;top:803px;width:23px;height:21px;background:#E0DFE3;border:1px solid;border-color:#fff #716F64 #716F64 #fff;box-shadow:inset -1px -1px 0 #9D9DA1"></div><div style="left:7px;top:826px;width:23px;height:21px;background:#E0DFE3;border:1px solid;border-color:#fff #716F64 #716F64 #fff;box-shadow:inset -1px -1px 0 #9D9DA1"></div><div style="left:7px;top:849px;width:23px;height:21px;background:#E0DFE3;border:1px solid;border-color:#fff #716F64 #716F64 #fff;box-shadow:inset -1px -1px 0 #9D9DA1"></div><div style="left:7px;top:872px;width:23px;height:9px;background:#E0DFE3;border:1px solid;border-color:#fff #716F64 #716F64 #fff;box-shadow:inset -1px -1px 0 #9D9DA1"></div><div style="left:4px;top:881px;width:28px;height:14px;background:#0080C0"></div><svg style="position:absolute;left:13px;top:885px" width="10" height="6"><path d="M0 0 L5 5 L10 0Z" fill="#000"/></svg><svg style="position:absolute;left:14px;top:647px;" width="10" height="13" shape-rendering="crispEdges"><rect x="0" y="0" width="7" height="1" fill="#000"/><rect x="0" y="1" width="1" height="1" fill="#000"/><rect x="1" y="1" width="5" height="1" fill="#fff"/><rect x="6" y="1" width="2" height="1" fill="#000"/><rect x="0" y="2" width="1" height="1" fill="#000"/><rect x="1" y="2" width="1" height="1" fill="#fff"/><rect x="2" y="2" width="2" height="1" fill="#000"/><rect x="4" y="2" width="2" height="1" fill="#fff"/><rect x="6" y="2" width="1" height="1" fill="#000"/><rect x="7" y="2" width="1" height="1" fill="#fff"/><rect x="8" y="2" width="1" height="1" fill="#000"/><rect x="0" y="3" width="1" height="1" fill="#000"/><rect x="1" y="3" width="5" height="1" fill="#fff"/><rect x="6" y="3" width="4" height="1" fill="#000"/><rect x="0" y="4" width="1" height="1" fill="#000"/><rect x="1" y="4" width="1" height="1" fill="#fff"/><rect x="2" y="4" width="4" height="1" fill="#000"/><rect x="6" y="4" width="3" height="1" fill="#fff"/><rect x="9" y="4" width="1" height="1" fill="#000"/><rect x="0" y="5" width="1" height="1" fill="#000"/><rect x="1" y="5" width="8" height="1" fill="#fff"/><rect x="9" y="5" width="1" height="1" fill="#000"/><rect x="0" y="6" width="1" height="1" fill="#000"/><rect x="1" y="6" width="1" height="1" fill="#fff"/><rect x="2" y="6" width="6" height="1" fill="#000"/><rect x="8" y="6" width="1" height="1" fill="#fff"/><rect x="9" y="6" width="1" height="1" fill="#000"/><rect x="0" y="7" width="1" height="1" fill="#000"/><rect x="1" y="7" width="8" height="1" fill="#fff"/><rect x="9" y="7" width="1" height="1" fill="#000"/><rect x="0" y="8" width="1" height="1" fill="#000"/><rect x="1" y="8" width="1" height="1" fill="#fff"/><rect x="2" y="8" width="6" height="1" fill="#000"/><rect x="8" y="8" width="1" height="1" fill="#fff"/><rect x="9" y="8" width="1" height="1" fill="#000"/><rect x="0" y="9" width="1" height="1" fill="#000"/><rect x="1" y="9" width="8" height="1" fill="#fff"/><rect x="9" y="9" width="1" height="1" fill="#000"/><rect x="0" y="10" width="1" height="1" fill="#000"/><rect x="1" y="10" width="1" height="1" fill="#fff"/><rect x="2" y="10" width="4" height="1" fill="#000"/><rect x="6" y="10" width="3" height="1" fill="#fff"/><rect x="9" y="10" width="1" height="1" fill="#000"/><rect x="0" y="11" width="1" height="1" fill="#000"/><rect x="1" y="11" width="8" height="1" fill="#fff"/><rect x="9" y="11" width="1" height="1" fill="#000"/><rect x="0" y="12" width="10" height="1" fill="#000"/></svg><svg style="position:absolute;left:14px;top:668px;" width="9" height="16" shape-rendering="crispEdges"><rect x="3" y="0" width="3" height="1" fill="#000"/><rect x="3" y="1" width="1" height="1" fill="#000"/><rect x="4" y="1" width="1" height="1" fill="#f00"/><rect x="5" y="1" width="1" height="1" fill="#000"/><rect x="3" y="2" width="1" height="1" fill="#000"/><rect x="4" y="2" width="1" height="1" fill="#f00"/><rect x="5" y="2" width="1" height="1" fill="#000"/><rect x="3" y="3" width="1" height="1" fill="#000"/><rect x="4" y="3" width="1" height="1" fill="#f00"/><rect x="5" y="3" width="1" height="1" fill="#000"/><rect x="3" y="4" width="1" height="1" fill="#000"/><rect x="4" y="4" width="1" height="1" fill="#f00"/><rect x="5" y="4" width="1" height="1" fill="#000"/><rect x="3" y="5" width="1" height="1" fill="#000"/><rect x="4" y="5" width="1" height="1" fill="#f00"/><rect x="5" y="5" width="1" height="1" fill="#000"/><rect x="3" y="6" width="1" height="1" fill="#000"/><rect x="4" y="6" width="1" height="1" fill="#f00"/><rect x="5" y="6" width="1" height="1" fill="#000"/><rect x="0" y="7" width="4" height="1" fill="#000"/><rect x="4" y="7" width="1" height="1" fill="#f00"/><rect x="5" y="7" width="4" height="1" fill="#000"/><rect x="0" y="8" width="1" height="1" fill="#000"/><rect x="1" y="8" width="7" height="1" fill="#f00"/><rect x="8" y="8" width="1" height="1" fill="#000"/><rect x="1" y="9" width="1" height="1" fill="#000"/><rect x="2" y="9" width="5" height="1" fill="#f00"/><rect x="7" y="9" width="1" height="1" fill="#000"/><rect x="1" y="10" width="1" height="1" fill="#000"/><rect x="2" y="10" width="5" height="1" fill="#f00"/><rect x="7" y="10" width="1" height="1" fill="#000"/><rect x="2" y="11" width="1" height="1" fill="#000"/><rect x="3" y="11" width="3" height="1" fill="#f00"/><rect x="6" y="11" width="1" height="1" fill="#000"/><rect x="2" y="12" width="1" height="1" fill="#000"/><rect x="3" y="12" width="3" height="1" fill="#f00"/><rect x="6" y="12" width="1" height="1" fill="#000"/><rect x="3" y="13" width="1" height="1" fill="#000"/><rect x="4" y="13" width="1" height="1" fill="#f00"/><rect x="5" y="13" width="1" height="1" fill="#000"/><rect x="3" y="14" width="1" height="1" fill="#000"/><rect x="4" y="14" width="1" height="1" fill="#f00"/><rect x="5" y="14" width="1" height="1" fill="#000"/><rect x="4" y="15" width="1" height="1" fill="#000"/></svg><svg style="position:absolute;left:10px;top:690px;" width="17" height="15" shape-rendering="crispEdges"><rect x="0" y="0" width="2" height="1" fill="#00FFFF"/><rect x="9" y="0" width="4" height="1" fill="#000"/><rect x="0" y="1" width="3" height="1" fill="#00FFFF"/><rect x="3" y="1" width="3" height="1" fill="#FFFF00"/><rect x="8" y="1" width="1" height="1" fill="#000"/><rect x="9" y="1" width="4" height="1" fill="#fff"/><rect x="13" y="1" width="1" height="1" fill="#000"/><rect x="0" y="2" width="2" height="1" fill="#00FFFF"/><rect x="2" y="2" width="5" height="1" fill="#FFFF00"/><rect x="7" y="2" width="1" height="1" fill="#000"/><rect x="8" y="2" width="6" height="1" fill="#fff"/><rect x="14" y="2" width="1" height="1" fill="#000"/><rect x="0" y="3" width="1" height="1" fill="#00FFFF"/><rect x="1" y="3" width="3" height="1" fill="#FFFF00"/><rect x="4" y="3" width="1" height="1" fill="#000"/><rect x="5" y="3" width="3" height="1" fill="#FFFF00"/><rect x="8" y="3" width="1" height="1" fill="#000"/><rect x="9" y="3" width="3" height="1" fill="#fff"/><rect x="12" y="3" width="1" height="1" fill="#000"/><rect x="13" y="3" width="1" height="1" fill="#fff"/><rect x="14" y="3" width="1" height="1" fill="#000"/><rect x="1" y="4" width="4" height="1" fill="#FFFF00"/><rect x="5" y="4" width="1" height="1" fill="#000"/><rect x="6" y="4" width="2" height="1" fill="#FFFF00"/><rect x="8" y="4" width="1" height="1" fill="#000"/><rect x="9" y="4" width="4" height="1" fill="#fff"/><rect x="13" y="4" width="2" height="1" fill="#000"/><rect x="1" y="5" width="1" height="1" fill="#000"/><rect x="2" y="5" width="4" height="1" fill="#FFFF00"/><rect x="6" y="5" width="1" height="1" fill="#000"/><rect x="7" y="5" width="2" height="1" fill="#FFFF00"/><rect x="9" y="5" width="1" height="1" fill="#000"/><rect x="10" y="5" width="4" height="1" fill="#fff"/><rect x="14" y="5" width="1" height="1" fill="#000"/><rect x="2" y="6" width="1" height="1" fill="#000"/><rect x="3" y="6" width="4" height="1" fill="#FFFF00"/><rect x="7" y="6" width="1" height="1" fill="#000"/><rect x="8" y="6" width="2" height="1" fill="#FFFF00"/><rect x="10" y="6" width="1" height="1" fill="#000"/><rect x="11" y="6" width="3" height="1" fill="#fff"/><rect x="14" y="6" width="1" height="1" fill="#000"/><rect x="3" y="7" width="1" height="1" fill="#000"/><rect x="4" y="7" width="4" height="1" fill="#FFFF00"/><rect x="8" y="7" width="1" height="1" fill="#000"/><rect x="9" y="7" width="1" height="1" fill="#FFFF00"/><rect x="10" y="7" width="1" height="1" fill="#000"/><rect x="12" y="7" width="2" height="1" fill="#fff"/><rect x="14" y="7" width="1" height="1" fill="#000"/><rect x="4" y="8" width="1" height="1" fill="#000"/><rect x="5" y="8" width="4" height="1" fill="#FFFF00"/><rect x="9" y="8" width="1" height="1" fill="#000"/><rect x="10" y="8" width="4" height="1" fill="#fff"/><rect x="14" y="8" width="1" height="1" fill="#000"/><rect x="4" y="9" width="1" height="1" fill="#000"/><rect x="5" y="9" width="1" height="1" fill="#fff"/><rect x="6" y="9" width="1" height="1" fill="#000"/><rect x="7" y="9" width="2" height="1" fill="#FFFF00"/><rect x="9" y="9" width="2" height="1" fill="#000"/><rect x="11" y="9" width="3" height="1" fill="#fff"/><rect x="14" y="9" width="1" height="1" fill="#000"/><rect x="4" y="10" width="1" height="1" fill="#000"/><rect x="5" y="10" width="1" height="1" fill="#fff"/><rect x="6" y="10" width="4" height="1" fill="#000"/><rect x="10" y="10" width="1" height="1" fill="#fff"/><rect x="11" y="10" width="1" height="1" fill="#000"/><rect x="12" y="10" width="2" height="1" fill="#fff"/><rect x="14" y="10" width="1" height="1" fill="#000"/><rect x="4" y="11" width="1" height="1" fill="#000"/><rect x="5" y="11" width="9" height="1" fill="#fff"/><rect x="14" y="11" width="1" height="1" fill="#000"/><rect x="4" y="12" width="1" height="1" fill="#000"/><rect x="5" y="12" width="1" height="1" fill="#fff"/><rect x="6" y="12" width="1" height="1" fill="#000"/><rect x="7" y="12" width="1" height="1" fill="#fff"/><rect x="8" y="12" width="1" height="1" fill="#000"/><rect x="9" y="12" width="1" height="1" fill="#fff"/><rect x="10" y="12" width="1" height="1" fill="#000"/><rect x="11" y="12" width="1" height="1" fill="#fff"/><rect x="12" y="12" width="1" height="1" fill="#000"/><rect x="13" y="12" width="1" height="1" fill="#fff"/><rect x="14" y="12" width="1" height="1" fill="#000"/><rect x="4" y="13" width="1" height="1" fill="#000"/><rect x="5" y="13" width="9" height="1" fill="#fff"/><rect x="14" y="13" width="1" height="1" fill="#000"/><rect x="4" y="14" width="11" height="1" fill="#000"/></svg><svg style="position:absolute;left:11px;top:716px;" width="17" height="13" shape-rendering="crispEdges"><rect x="6" y="0" width="3" height="1" fill="#000"/><rect x="5" y="1" width="1" height="1" fill="#000"/><rect x="6" y="1" width="3" height="1" fill="#fff"/><rect x="9" y="1" width="2" height="1" fill="#000"/><rect x="4" y="2" width="1" height="1" fill="#000"/><rect x="5" y="2" width="6" height="1" fill="#fff"/><rect x="11" y="2" width="1" height="1" fill="#000"/><rect x="3" y="3" width="1" height="1" fill="#000"/><rect x="4" y="3" width="8" height="1" fill="#fff"/><rect x="12" y="3" width="1" height="1" fill="#000"/><rect x="2" y="4" width="1" height="1" fill="#000"/><rect x="3" y="4" width="5" height="1" fill="#fff"/><rect x="8" y="4" width="1" height="1" fill="#000"/><rect x="9" y="4" width="4" height="1" fill="#fff"/><rect x="13" y="4" width="1" height="1" fill="#000"/><rect x="1" y="5" width="1" height="1" fill="#000"/><rect x="2" y="5" width="5" height="1" fill="#fff"/><rect x="7" y="5" width="1" height="1" fill="#000"/><rect x="8" y="5" width="6" height="1" fill="#fff"/><rect x="14" y="5" width="1" height="1" fill="#000"/><rect x="0" y="6" width="1" height="1" fill="#000"/><rect x="1" y="6" width="5" height="1" fill="#fff"/><rect x="6" y="6" width="1" height="1" fill="#000"/><rect x="7" y="6" width="8" height="1" fill="#fff"/><rect x="15" y="6" width="1" height="1" fill="#000"/><rect x="0" y="7" width="1" height="1" fill="#00f"/><rect x="1" y="7" width="1" height="1" fill="#000"/><rect x="2" y="7" width="3" height="1" fill="#fff"/><rect x="5" y="7" width="1" height="1" fill="#000"/><rect x="6" y="7" width="8" height="1" fill="#fff"/><rect x="14" y="7" width="1" height="1" fill="#000"/><rect x="1" y="8" width="1" height="1" fill="#00f"/><rect x="2" y="8" width="1" height="1" fill="#000"/><rect x="3" y="8" width="1" height="1" fill="#fff"/><rect x="4" y="8" width="1" height="1" fill="#000"/><rect x="5" y="8" width="8" height="1" fill="#fff"/><rect x="13" y="8" width="1" height="1" fill="#000"/><rect x="2" y="9" width="1" height="1" fill="#00f"/><rect x="3" y="9" width="1" height="1" fill="#000"/><rect x="4" y="9" width="8" height="1" fill="#fff"/><rect x="12" y="9" width="1" height="1" fill="#000"/><rect x="3" y="10" width="1" height="1" fill="#00f"/><rect x="4" y="10" width="1" height="1" fill="#000"/><rect x="5" y="10" width="6" height="1" fill="#fff"/><rect x="11" y="10" width="1" height="1" fill="#000"/><rect x="4" y="11" width="2" height="1" fill="#00f"/><rect x="6" y="11" width="1" height="1" fill="#000"/><rect x="7" y="11" width="3" height="1" fill="#fff"/><rect x="10" y="11" width="1" height="1" fill="#000"/><rect x="6" y="12" width="2" height="1" fill="#00f"/><rect x="8" y="12" width="2" height="1" fill="#000"/></svg><svg style="position:absolute;left:13px;top:737px;" width="11" height="15" shape-rendering="crispEdges"><rect x="1" y="0" width="9" height="1" fill="#000"/><rect x="0" y="1" width="1" height="1" fill="#000"/><rect x="1" y="1" width="9" height="1" fill="#C0C0C0"/><rect x="10" y="1" width="1" height="1" fill="#000"/><rect x="0" y="2" width="1" height="1" fill="#000"/><rect x="1" y="2" width="1" height="1" fill="#C0C0C0"/><rect x="2" y="2" width="7" height="1" fill="#000"/><rect x="9" y="2" width="1" height="1" fill="#C0C0C0"/><rect x="10" y="2" width="1" height="1" fill="#000"/><rect x="0" y="3" width="1" height="1" fill="#000"/><rect x="1" y="3" width="1" height="1" fill="#C0C0C0"/><rect x="2" y="3" width="3" height="1" fill="#000"/><rect x="5" y="3" width="1" height="1" fill="#00FFFF"/><rect x="6" y="3" width="1" height="1" fill="#000"/><rect x="7" y="3" width="1" height="1" fill="#00FFFF"/><rect x="8" y="3" width="1" height="1" fill="#000"/><rect x="9" y="3" width="1" height="1" fill="#C0C0C0"/><rect x="10" y="3" width="1" height="1" fill="#000"/><rect x="0" y="4" width="1" height="1" fill="#000"/><rect x="1" y="4" width="1" height="1" fill="#C0C0C0"/><rect x="2" y="4" width="7" height="1" fill="#000"/><rect x="9" y="4" width="1" height="1" fill="#C0C0C0"/><rect x="10" y="4" width="1" height="1" fill="#000"/><rect x="0" y="5" width="1" height="1" fill="#000"/><rect x="1" y="5" width="9" height="1" fill="#C0C0C0"/><rect x="10" y="5" width="1" height="1" fill="#000"/><rect x="0" y="6" width="1" height="1" fill="#000"/><rect x="1" y="6" width="1" height="1" fill="#C0C0C0"/><rect x="2" y="6" width="1" height="1" fill="#000"/><rect x="3" y="6" width="1" height="1" fill="#C0C0C0"/><rect x="4" y="6" width="1" height="1" fill="#000"/><rect x="5" y="6" width="1" height="1" fill="#C0C0C0"/><rect x="6" y="6" width="1" height="1" fill="#000"/><rect x="7" y="6" width="1" height="1" fill="#C0C0C0"/><rect x="8" y="6" width="1" height="1" fill="#000"/><rect x="9" y="6" width="1" height="1" fill="#C0C0C0"/><rect x="10" y="6" width="1" height="1" fill="#000"/><rect x="0" y="7" width="1" height="1" fill="#000"/><rect x="1" y="7" width="9" height="1" fill="#C0C0C0"/><rect x="10" y="7" width="1" height="1" fill="#000"/><rect x="0" y="8" width="1" height="1" fill="#000"/><rect x="1" y="8" width="1" height="1" fill="#C0C0C0"/><rect x="2" y="8" width="1" height="1" fill="#000"/><rect x="3" y="8" width="1" height="1" fill="#C0C0C0"/><rect x="4" y="8" width="1" height="1" fill="#000"/><rect x="5" y="8" width="1" height="1" fill="#C0C0C0"/><rect x="6" y="8" width="1" height="1" fill="#000"/><rect x="7" y="8" width="1" height="1" fill="#C0C0C0"/><rect x="8" y="8" width="1" height="1" fill="#000"/><rect x="9" y="8" width="1" height="1" fill="#C0C0C0"/><rect x="10" y="8" width="1" height="1" fill="#000"/><rect x="0" y="9" width="1" height="1" fill="#000"/><rect x="1" y="9" width="9" height="1" fill="#C0C0C0"/><rect x="10" y="9" width="1" height="1" fill="#000"/><rect x="0" y="10" width="1" height="1" fill="#000"/><rect x="1" y="10" width="1" height="1" fill="#C0C0C0"/><rect x="2" y="10" width="1" height="1" fill="#000"/><rect x="3" y="10" width="1" height="1" fill="#C0C0C0"/><rect x="4" y="10" width="1" height="1" fill="#000"/><rect x="5" y="10" width="1" height="1" fill="#C0C0C0"/><rect x="6" y="10" width="1" height="1" fill="#000"/><rect x="7" y="10" width="1" height="1" fill="#C0C0C0"/><rect x="8" y="10" width="1" height="1" fill="#000"/><rect x="9" y="10" width="1" height="1" fill="#C0C0C0"/><rect x="10" y="10" width="1" height="1" fill="#000"/><rect x="0" y="11" width="1" height="1" fill="#000"/><rect x="1" y="11" width="9" height="1" fill="#C0C0C0"/><rect x="10" y="11" width="1" height="1" fill="#000"/><rect x="0" y="12" width="1" height="1" fill="#000"/><rect x="1" y="12" width="1" height="1" fill="#C0C0C0"/><rect x="2" y="12" width="1" height="1" fill="#000"/><rect x="3" y="12" width="1" height="1" fill="#C0C0C0"/><rect x="4" y="12" width="1" height="1" fill="#000"/><rect x="5" y="12" width="1" height="1" fill="#C0C0C0"/><rect x="6" y="12" width="3" height="1" fill="#f00"/><rect x="9" y="12" width="1" height="1" fill="#C0C0C0"/><rect x="10" y="12" width="1" height="1" fill="#000"/><rect x="0" y="13" width="1" height="1" fill="#000"/><rect x="1" y="13" width="9" height="1" fill="#C0C0C0"/><rect x="10" y="13" width="1" height="1" fill="#000"/><rect x="1" y="14" width="9" height="1" fill="#000"/></svg><svg style="position:absolute;left:11px;top:760px;" width="15" height="15" shape-rendering="crispEdges"><rect x="5" y="0" width="5" height="1" fill="#000"/><rect x="3" y="1" width="2" height="1" fill="#000"/><rect x="10" y="1" width="2" height="1" fill="#000"/><rect x="2" y="2" width="1" height="1" fill="#000"/><rect x="12" y="2" width="1" height="1" fill="#000"/><rect x="1" y="3" width="1" height="1" fill="#000"/><rect x="3" y="3" width="5" height="1" fill="#000"/><rect x="13" y="3" width="1" height="1" fill="#000"/><rect x="1" y="4" width="1" height="1" fill="#000"/><rect x="3" y="4" width="1" height="1" fill="#000"/><rect x="4" y="4" width="3" height="1" fill="#f00"/><rect x="7" y="4" width="1" height="1" fill="#000"/><rect x="9" y="4" width="3" height="1" fill="#000"/><rect x="13" y="4" width="1" height="1" fill="#000"/><rect x="0" y="5" width="1" height="1" fill="#000"/><rect x="3" y="5" width="1" height="1" fill="#000"/><rect x="4" y="5" width="3" height="1" fill="#f00"/><rect x="7" y="5" width="2" height="1" fill="#000"/><rect x="9" y="5" width="3" height="1" fill="#FFFF00"/><rect x="12" y="5" width="1" height="1" fill="#000"/><rect x="14" y="5" width="1" height="1" fill="#000"/><rect x="0" y="6" width="1" height="1" fill="#000"/><rect x="3" y="6" width="1" height="1" fill="#000"/><rect x="4" y="6" width="3" height="1" fill="#f00"/><rect x="7" y="6" width="2" height="1" fill="#000"/><rect x="9" y="6" width="3" height="1" fill="#FFFF00"/><rect x="12" y="6" width="1" height="1" fill="#000"/><rect x="14" y="6" width="1" height="1" fill="#000"/><rect x="0" y="7" width="1" height="1" fill="#000"/><rect x="3" y="7" width="5" height="1" fill="#000"/><rect x="9" y="7" width="3" height="1" fill="#000"/><rect x="14" y="7" width="1" height="1" fill="#000"/><rect x="0" y="8" width="1" height="1" fill="#000"/><rect x="14" y="8" width="1" height="1" fill="#000"/><rect x="0" y="9" width="1" height="1" fill="#000"/><rect x="7" y="9" width="1" height="1" fill="#000"/><rect x="14" y="9" width="1" height="1" fill="#000"/><rect x="1" y="10" width="1" height="1" fill="#000"/><rect x="6" y="10" width="1" height="1" fill="#000"/><rect x="7" y="10" width="1" height="1" fill="#00f"/><rect x="8" y="10" width="1" height="1" fill="#000"/><rect x="13" y="10" width="1" height="1" fill="#000"/><rect x="1" y="11" width="1" height="1" fill="#000"/><rect x="5" y="11" width="1" height="1" fill="#000"/><rect x="6" y="11" width="3" height="1" fill="#00f"/><rect x="9" y="11" width="1" height="1" fill="#000"/><rect x="13" y="11" width="1" height="1" fill="#000"/><rect x="2" y="12" width="1" height="1" fill="#000"/><rect x="4" y="12" width="7" height="1" fill="#000"/><rect x="12" y="12" width="1" height="1" fill="#000"/><rect x="3" y="13" width="2" height="1" fill="#000"/><rect x="10" y="13" width="2" height="1" fill="#000"/><rect x="5" y="14" width="5" height="1" fill="#000"/></svg><svg style="position:absolute;left:10px;top:783px;" width="17" height="14" shape-rendering="crispEdges"><rect x="10" y="0" width="2" height="1" fill="#000"/><rect x="9" y="1" width="1" height="1" fill="#000"/><rect x="10" y="1" width="2" height="1" fill="#00f"/><rect x="12" y="1" width="1" height="1" fill="#000"/><rect x="8" y="2" width="1" height="1" fill="#000"/><rect x="9" y="2" width="4" height="1" fill="#00f"/><rect x="13" y="2" width="1" height="1" fill="#000"/><rect x="0" y="3" width="5" height="1" fill="#000"/><rect x="7" y="3" width="8" height="1" fill="#000"/><rect x="0" y="4" width="1" height="1" fill="#000"/><rect x="1" y="4" width="3" height="1" fill="#f00"/><rect x="4" y="4" width="1" height="1" fill="#000"/><rect x="7" y="4" width="1" height="1" fill="#000"/><rect x="8" y="4" width="5" height="1" fill="#fff"/><rect x="13" y="4" width="1" height="1" fill="#000"/><rect x="0" y="5" width="1" height="1" fill="#000"/><rect x="1" y="5" width="3" height="1" fill="#f00"/><rect x="4" y="5" width="1" height="1" fill="#000"/><rect x="7" y="5" width="1" height="1" fill="#000"/><rect x="8" y="5" width="1" height="1" fill="#fff"/><rect x="9" y="5" width="2" height="1" fill="#000"/><rect x="11" y="5" width="2" height="1" fill="#fff"/><rect x="13" y="5" width="2" height="1" fill="#000"/><rect x="0" y="6" width="1" height="1" fill="#000"/><rect x="1" y="6" width="3" height="1" fill="#f00"/><rect x="4" y="6" width="1" height="1" fill="#000"/><rect x="7" y="6" width="1" height="1" fill="#000"/><rect x="8" y="6" width="4" height="1" fill="#fff"/><rect x="12" y="6" width="4" height="1" fill="#000"/><rect x="0" y="7" width="5" height="1" fill="#000"/><rect x="7" y="7" width="1" height="1" fill="#000"/><rect x="8" y="7" width="1" height="1" fill="#fff"/><rect x="9" y="7" width="4" height="1" fill="#000"/><rect x="13" y="7" width="2" height="1" fill="#fff"/><rect x="15" y="7" width="1" height="1" fill="#000"/><rect x="10" y="8" width="5" height="1" fill="#fff"/><rect x="15" y="8" width="1" height="1" fill="#000"/><rect x="1" y="9" width="3" height="1" fill="#000"/><rect x="7" y="9" width="1" height="1" fill="#000"/><rect x="8" y="9" width="1" height="1" fill="#fff"/><rect x="9" y="9" width="4" height="1" fill="#000"/><rect x="13" y="9" width="2" height="1" fill="#fff"/><rect x="15" y="9" width="1" height="1" fill="#000"/><rect x="0" y="10" width="1" height="1" fill="#000"/><rect x="1" y="10" width="3" height="1" fill="#FFFF00"/><rect x="4" y="10" width="1" height="1" fill="#000"/><rect x="7" y="10" width="1" height="1" fill="#000"/><rect x="8" y="10" width="7" height="1" fill="#fff"/><rect x="15" y="10" width="1" height="1" fill="#000"/><rect x="0" y="11" width="1" height="1" fill="#000"/><rect x="1" y="11" width="3" height="1" fill="#FFFF00"/><rect x="4" y="11" width="1" height="1" fill="#000"/><rect x="7" y="11" width="1" height="1" fill="#000"/><rect x="8" y="11" width="1" height="1" fill="#fff"/><rect x="9" y="11" width="2" height="1" fill="#000"/><rect x="11" y="11" width="1" height="1" fill="#fff"/><rect x="12" y="11" width="2" height="1" fill="#000"/><rect x="14" y="11" width="1" height="1" fill="#fff"/><rect x="15" y="11" width="1" height="1" fill="#000"/><rect x="1" y="12" width="3" height="1" fill="#000"/><rect x="7" y="12" width="1" height="1" fill="#000"/><rect x="8" y="12" width="7" height="1" fill="#fff"/><rect x="15" y="12" width="1" height="1" fill="#000"/><rect x="8" y="13" width="8" height="1" fill="#000"/></svg><svg style="position:absolute;left:12px;top:806px;" width="15" height="15" shape-rendering="crispEdges"><rect x="5" y="0" width="5" height="1" fill="#00f"/><rect x="3" y="1" width="9" height="1" fill="#00f"/><rect x="2" y="2" width="11" height="1" fill="#00f"/><rect x="1" y="3" width="13" height="1" fill="#00f"/><rect x="1" y="4" width="4" height="1" fill="#00f"/><rect x="5" y="4" width="1" height="1" fill="#fff"/><rect x="6" y="4" width="3" height="1" fill="#00f"/><rect x="9" y="4" width="1" height="1" fill="#fff"/><rect x="10" y="4" width="4" height="1" fill="#00f"/><rect x="0" y="5" width="5" height="1" fill="#00f"/><rect x="5" y="5" width="1" height="1" fill="#fff"/><rect x="6" y="5" width="3" height="1" fill="#00f"/><rect x="9" y="5" width="1" height="1" fill="#fff"/><rect x="10" y="5" width="5" height="1" fill="#00f"/><rect x="0" y="6" width="5" height="1" fill="#00f"/><rect x="5" y="6" width="1" height="1" fill="#fff"/><rect x="6" y="6" width="3" height="1" fill="#00f"/><rect x="9" y="6" width="1" height="1" fill="#fff"/><rect x="10" y="6" width="5" height="1" fill="#00f"/><rect x="0" y="7" width="5" height="1" fill="#00f"/><rect x="5" y="7" width="2" height="1" fill="#fff"/><rect x="7" y="7" width="1" height="1" fill="#00f"/><rect x="8" y="7" width="2" height="1" fill="#fff"/><rect x="10" y="7" width="5" height="1" fill="#00f"/><rect x="0" y="8" width="6" height="1" fill="#00f"/><rect x="6" y="8" width="2" height="1" fill="#fff"/><rect x="8" y="8" width="1" height="1" fill="#00f"/><rect x="9" y="8" width="1" height="1" fill="#fff"/><rect x="10" y="8" width="5" height="1" fill="#00f"/><rect x="0" y="9" width="9" height="1" fill="#00f"/><rect x="9" y="9" width="1" height="1" fill="#fff"/><rect x="10" y="9" width="5" height="1" fill="#00f"/><rect x="1" y="10" width="8" height="1" fill="#00f"/><rect x="9" y="10" width="2" height="1" fill="#fff"/><rect x="11" y="10" width="3" height="1" fill="#00f"/><rect x="1" y="11" width="13" height="1" fill="#00f"/><rect x="2" y="12" width="11" height="1" fill="#00f"/><rect x="3" y="13" width="9" height="1" fill="#00f"/><rect x="5" y="14" width="5" height="1" fill="#00f"/></svg><svg style="position:absolute;left:12px;top:829px;" width="15" height="15" shape-rendering="crispEdges"><rect x="5" y="0" width="5" height="1" fill="#000080"/><rect x="3" y="1" width="9" height="1" fill="#000080"/><rect x="2" y="2" width="6" height="1" fill="#000080"/><rect x="8" y="2" width="1" height="1" fill="#fff"/><rect x="9" y="2" width="4" height="1" fill="#000080"/><rect x="1" y="3" width="13" height="1" fill="#000080"/><rect x="1" y="4" width="6" height="1" fill="#000080"/><rect x="7" y="4" width="2" height="1" fill="#fff"/><rect x="9" y="4" width="5" height="1" fill="#000080"/><rect x="0" y="5" width="6" height="1" fill="#000080"/><rect x="6" y="5" width="2" height="1" fill="#fff"/><rect x="8" y="5" width="7" height="1" fill="#000080"/><rect x="0" y="6" width="7" height="1" fill="#000080"/><rect x="7" y="6" width="1" height="1" fill="#fff"/><rect x="8" y="6" width="7" height="1" fill="#000080"/><rect x="0" y="7" width="6" height="1" fill="#000080"/><rect x="6" y="7" width="2" height="1" fill="#fff"/><rect x="8" y="7" width="7" height="1" fill="#000080"/><rect x="0" y="8" width="6" height="1" fill="#000080"/><rect x="6" y="8" width="1" height="1" fill="#fff"/><rect x="7" y="8" width="8" height="1" fill="#000080"/><rect x="0" y="9" width="5" height="1" fill="#000080"/><rect x="5" y="9" width="2" height="1" fill="#fff"/><rect x="7" y="9" width="8" height="1" fill="#000080"/><rect x="1" y="10" width="4" height="1" fill="#000080"/><rect x="5" y="10" width="4" height="1" fill="#fff"/><rect x="9" y="10" width="5" height="1" fill="#000080"/><rect x="1" y="11" width="13" height="1" fill="#000080"/><rect x="2" y="12" width="11" height="1" fill="#000080"/><rect x="3" y="13" width="9" height="1" fill="#000080"/><rect x="5" y="14" width="5" height="1" fill="#000080"/></svg><svg style="position:absolute;left:11px;top:852px;" width="16" height="14" shape-rendering="crispEdges"><rect x="0" y="0" width="7" height="1" fill="#000"/><rect x="0" y="1" width="1" height="1" fill="#000"/><rect x="1" y="1" width="1" height="1" fill="#fff"/><rect x="2" y="1" width="1" height="1" fill="#000"/><rect x="3" y="1" width="1" height="1" fill="#fff"/><rect x="4" y="1" width="1" height="1" fill="#000"/><rect x="5" y="1" width="1" height="1" fill="#fff"/><rect x="6" y="1" width="3" height="1" fill="#000"/><rect x="0" y="2" width="1" height="1" fill="#000"/><rect x="1" y="2" width="1" height="1" fill="#fff"/><rect x="2" y="2" width="1" height="1" fill="#000"/><rect x="3" y="2" width="1" height="1" fill="#fff"/><rect x="4" y="2" width="1" height="1" fill="#000"/><rect x="5" y="2" width="1" height="1" fill="#fff"/><rect x="6" y="2" width="1" height="1" fill="#000"/><rect x="7" y="2" width="2" height="1" fill="#fff"/><rect x="9" y="2" width="2" height="1" fill="#000"/><rect x="0" y="3" width="1" height="1" fill="#000"/><rect x="1" y="3" width="1" height="1" fill="#fff"/><rect x="2" y="3" width="1" height="1" fill="#000"/><rect x="3" y="3" width="1" height="1" fill="#fff"/><rect x="4" y="3" width="1" height="1" fill="#000"/><rect x="5" y="3" width="1" height="1" fill="#fff"/><rect x="6" y="3" width="1" height="1" fill="#000"/><rect x="7" y="3" width="4" height="1" fill="#fff"/><rect x="11" y="3" width="1" height="1" fill="#000"/><rect x="0" y="4" width="1" height="1" fill="#000"/><rect x="1" y="4" width="1" height="1" fill="#fff"/><rect x="2" y="4" width="1" height="1" fill="#000"/><rect x="3" y="4" width="1" height="1" fill="#fff"/><rect x="4" y="4" width="1" height="1" fill="#000"/><rect x="5" y="4" width="1" height="1" fill="#fff"/><rect x="6" y="4" width="1" height="1" fill="#000"/><rect x="7" y="4" width="5" height="1" fill="#fff"/><rect x="12" y="4" width="1" height="1" fill="#000"/><rect x="0" y="5" width="1" height="1" fill="#000"/><rect x="1" y="5" width="1" height="1" fill="#fff"/><rect x="2" y="5" width="1" height="1" fill="#000"/><rect x="3" y="5" width="1" height="1" fill="#fff"/><rect x="4" y="5" width="7" height="1" fill="#000"/><rect x="11" y="5" width="2" height="1" fill="#fff"/><rect x="13" y="5" width="1" height="1" fill="#000"/><rect x="0" y="6" width="1" height="1" fill="#000"/><rect x="1" y="6" width="1" height="1" fill="#fff"/><rect x="2" y="6" width="1" height="1" fill="#000"/><rect x="3" y="6" width="1" height="1" fill="#fff"/><rect x="4" y="6" width="1" height="1" fill="#000"/><rect x="5" y="6" width="5" height="1" fill="#fff"/><rect x="10" y="6" width="1" height="1" fill="#000"/><rect x="11" y="6" width="2" height="1" fill="#fff"/><rect x="13" y="6" width="1" height="1" fill="#000"/><rect x="0" y="7" width="1" height="1" fill="#000"/><rect x="1" y="7" width="1" height="1" fill="#fff"/><rect x="2" y="7" width="1" height="1" fill="#000"/><rect x="3" y="7" width="1" height="1" fill="#fff"/><rect x="4" y="7" width="1" height="1" fill="#000"/><rect x="5" y="7" width="1" height="1" fill="#fff"/><rect x="6" y="7" width="2" height="1" fill="#000"/><rect x="8" y="7" width="2" height="1" fill="#fff"/><rect x="10" y="7" width="4" height="1" fill="#000"/><rect x="0" y="8" width="1" height="1" fill="#000"/><rect x="1" y="8" width="1" height="1" fill="#fff"/><rect x="2" y="8" width="1" height="1" fill="#000"/><rect x="3" y="8" width="1" height="1" fill="#fff"/><rect x="4" y="8" width="1" height="1" fill="#000"/><rect x="5" y="8" width="8" height="1" fill="#fff"/><rect x="13" y="8" width="1" height="1" fill="#000"/><rect x="0" y="9" width="1" height="1" fill="#000"/><rect x="1" y="9" width="1" height="1" fill="#fff"/><rect x="2" y="9" width="1" height="1" fill="#000"/><rect x="3" y="9" width="1" height="1" fill="#fff"/><rect x="4" y="9" width="1" height="1" fill="#000"/><rect x="5" y="9" width="1" height="1" fill="#fff"/><rect x="6" y="9" width="5" height="1" fill="#000"/><rect x="11" y="9" width="2" height="1" fill="#fff"/><rect x="13" y="9" width="1" height="1" fill="#000"/><rect x="0" y="10" width="1" height="1" fill="#000"/><rect x="1" y="10" width="1" height="1" fill="#fff"/><rect x="2" y="10" width="1" height="1" fill="#000"/><rect x="3" y="10" width="1" height="1" fill="#fff"/><rect x="4" y="10" width="1" height="1" fill="#000"/><rect x="5" y="10" width="8" height="1" fill="#fff"/><rect x="13" y="10" width="1" height="1" fill="#000"/><rect x="0" y="11" width="3" height="1" fill="#000"/><rect x="3" y="11" width="1" height="1" fill="#fff"/><rect x="4" y="11" width="1" height="1" fill="#000"/><rect x="5" y="11" width="1" height="1" fill="#fff"/><rect x="6" y="11" width="5" height="1" fill="#000"/><rect x="11" y="11" width="2" height="1" fill="#fff"/><rect x="13" y="11" width="1" height="1" fill="#000"/><rect x="2" y="12" width="3" height="1" fill="#000"/><rect x="5" y="12" width="8" height="1" fill="#fff"/><rect x="13" y="12" width="1" height="1" fill="#000"/><rect x="4" y="13" width="10" height="1" fill="#000"/></svg><svg style="position:absolute;left:11px;top:877px;" width="16" height="4" shape-rendering="crispEdges"><rect x="0" y="0" width="16" height="1" fill="#000"/><rect x="0" y="1" width="1" height="1" fill="#000"/><rect x="1" y="1" width="14" height="1" fill="#00f"/><rect x="15" y="1" width="1" height="1" fill="#000"/><rect x="0" y="2" width="16" height="1" fill="#000"/><rect x="0" y="3" width="1" height="1" fill="#000"/><rect x="1" y="3" width="14" height="1" fill="#fff"/><rect x="15" y="3" width="1" height="1" fill="#000"/></svg><div style="left:7px;top:688px;width:23px;height:21px;background:repeating-conic-gradient(#F0F0F0 0 25%,#FFFFFF 0 50%) 0 0/2px 2px;border:1px solid;border-color:#716F64 #fff #fff #716F64;box-shadow:inset 1px 1px 0 #9D9DA1"></div><svg style="position:absolute;left:10px;top:690px;" width="17" height="15" shape-rendering="crispEdges"><rect x="0" y="0" width="2" height="1" fill="#00FFFF"/><rect x="9" y="0" width="4" height="1" fill="#000"/><rect x="0" y="1" width="3" height="1" fill="#00FFFF"/><rect x="3" y="1" width="3" height="1" fill="#FFFF00"/><rect x="8" y="1" width="1" height="1" fill="#000"/><rect x="9" y="1" width="4" height="1" fill="#fff"/><rect x="13" y="1" width="1" height="1" fill="#000"/><rect x="0" y="2" width="2" height="1" fill="#00FFFF"/><rect x="2" y="2" width="5" height="1" fill="#FFFF00"/><rect x="7" y="2" width="1" height="1" fill="#000"/><rect x="8" y="2" width="6" height="1" fill="#fff"/><rect x="14" y="2" width="1" height="1" fill="#000"/><rect x="0" y="3" width="1" height="1" fill="#00FFFF"/><rect x="1" y="3" width="3" height="1" fill="#FFFF00"/><rect x="4" y="3" width="1" height="1" fill="#000"/><rect x="5" y="3" width="3" height="1" fill="#FFFF00"/><rect x="8" y="3" width="1" height="1" fill="#000"/><rect x="9" y="3" width="3" height="1" fill="#fff"/><rect x="12" y="3" width="1" height="1" fill="#000"/><rect x="13" y="3" width="1" height="1" fill="#fff"/><rect x="14" y="3" width="1" height="1" fill="#000"/><rect x="1" y="4" width="4" height="1" fill="#FFFF00"/><rect x="5" y="4" width="1" height="1" fill="#000"/><rect x="6" y="4" width="2" height="1" fill="#FFFF00"/><rect x="8" y="4" width="1" height="1" fill="#000"/><rect x="9" y="4" width="4" height="1" fill="#fff"/><rect x="13" y="4" width="2" height="1" fill="#000"/><rect x="1" y="5" width="1" height="1" fill="#000"/><rect x="2" y="5" width="4" height="1" fill="#FFFF00"/><rect x="6" y="5" width="1" height="1" fill="#000"/><rect x="7" y="5" width="2" height="1" fill="#FFFF00"/><rect x="9" y="5" width="1" height="1" fill="#000"/><rect x="10" y="5" width="4" height="1" fill="#fff"/><rect x="14" y="5" width="1" height="1" fill="#000"/><rect x="2" y="6" width="1" height="1" fill="#000"/><rect x="3" y="6" width="4" height="1" fill="#FFFF00"/><rect x="7" y="6" width="1" height="1" fill="#000"/><rect x="8" y="6" width="2" height="1" fill="#FFFF00"/><rect x="10" y="6" width="1" height="1" fill="#000"/><rect x="11" y="6" width="3" height="1" fill="#fff"/><rect x="14" y="6" width="1" height="1" fill="#000"/><rect x="3" y="7" width="1" height="1" fill="#000"/><rect x="4" y="7" width="4" height="1" fill="#FFFF00"/><rect x="8" y="7" width="1" height="1" fill="#000"/><rect x="9" y="7" width="1" height="1" fill="#FFFF00"/><rect x="10" y="7" width="1" height="1" fill="#000"/><rect x="12" y="7" width="2" height="1" fill="#fff"/><rect x="14" y="7" width="1" height="1" fill="#000"/><rect x="4" y="8" width="1" height="1" fill="#000"/><rect x="5" y="8" width="4" height="1" fill="#FFFF00"/><rect x="9" y="8" width="1" height="1" fill="#000"/><rect x="10" y="8" width="4" height="1" fill="#fff"/><rect x="14" y="8" width="1" height="1" fill="#000"/><rect x="4" y="9" width="1" height="1" fill="#000"/><rect x="5" y="9" width="1" height="1" fill="#fff"/><rect x="6" y="9" width="1" height="1" fill="#000"/><rect x="7" y="9" width="2" height="1" fill="#FFFF00"/><rect x="9" y="9" width="2" height="1" fill="#000"/><rect x="11" y="9" width="3" height="1" fill="#fff"/><rect x="14" y="9" width="1" height="1" fill="#000"/><rect x="4" y="10" width="1" height="1" fill="#000"/><rect x="5" y="10" width="1" height="1" fill="#fff"/><rect x="6" y="10" width="4" height="1" fill="#000"/><rect x="10" y="10" width="1" height="1" fill="#fff"/><rect x="11" y="10" width="1" height="1" fill="#000"/><rect x="12" y="10" width="2" height="1" fill="#fff"/><rect x="14" y="10" width="1" height="1" fill="#000"/><rect x="4" y="11" width="1" height="1" fill="#000"/><rect x="5" y="11" width="9" height="1" fill="#fff"/><rect x="14" y="11" width="1" height="1" fill="#000"/><rect x="4" y="12" width="1" height="1" fill="#000"/><rect x="5" y="12" width="1" height="1" fill="#fff"/><rect x="6" y="12" width="1" height="1" fill="#000"/><rect x="7" y="12" width="1" height="1" fill="#fff"/><rect x="8" y="12" width="1" height="1" fill="#000"/><rect x="9" y="12" width="1" height="1" fill="#fff"/><rect x="10" y="12" width="1" height="1" fill="#000"/><rect x="11" y="12" width="1" height="1" fill="#fff"/><rect x="12" y="12" width="1" height="1" fill="#000"/><rect x="13" y="12" width="1" height="1" fill="#fff"/><rect x="14" y="12" width="1" height="1" fill="#000"/><rect x="4" y="13" width="1" height="1" fill="#000"/><rect x="5" y="13" width="9" height="1" fill="#fff"/><rect x="14" y="13" width="1" height="1" fill="#000"/><rect x="4" y="14" width="11" height="1" fill="#000"/></svg><div style="left:32px;top:616px;width:1645px;height:279px;background:#E0DFE3"></div><div style="left:32px;top:638px;width:1645px;height:1px;background:#fff"></div><div style="left:34px;top:619px;width:232px;height:20px;background:#E0DFE3;border-left:1px solid #fff;border-top:1px solid #fff;border-right:1px solid #716F64;box-shadow:inset -1px 0 0 #9D9DA1"></div><div class="t" style="left:62px;top:622px;font-size:13px;letter-spacing:0.4px;line-height:16px">Наим-е, примеч., состав работ</div><div style="left:267px;top:619px;width:139px;height:20px;background:#E0DFE3;border-left:1px solid #fff;border-top:1px solid #fff;border-right:1px solid #716F64;box-shadow:inset -1px 0 0 #9D9DA1"></div><div class="t" style="left:295px;top:622px;font-size:13px;letter-spacing:0.4px;line-height:16px">Концовка сметы</div><div style="left:407px;top:619px;width:241px;height:20px;background:#E0DFE3;border-left:1px solid #fff;border-top:1px solid #fff;border-right:1px solid #716F64;box-shadow:inset -1px 0 0 #9D9DA1"></div><div class="t" style="left:434px;top:622px;font-size:13px;letter-spacing:0.4px;line-height:16px">Концовка текущего раздела №1</div><div style="left:651px;top:616px;width:128px;height:24px;background:#E0DFE3;border-left:1px solid #fff;border-top:1px solid #fff;border-right:1px solid #716F64;box-shadow:inset -1px 0 0 #9D9DA1"></div><div class="t" style="left:678px;top:620px;font-size:13px;letter-spacing:0.4px;line-height:16px">Тек. значения</div><div style="left:779px;top:619px;width:69px;height:20px;background:#E0DFE3;border-left:1px solid #fff;border-top:1px solid #fff;border-right:1px solid #716F64;box-shadow:inset -1px 0 0 #9D9DA1"></div><div class="t" style="left:805px;top:622px;font-size:13px;letter-spacing:0.4px;line-height:16px">Книга</div><div style="left:849px;top:619px;width:113px;height:20px;background:#E0DFE3;border-left:1px solid #fff;border-top:1px solid #fff;border-right:1px solid #716F64;box-shadow:inset -1px 0 0 #9D9DA1"></div><div class="t" style="left:876px;top:622px;font-size:13px;letter-spacing:0.4px;line-height:16px">Начисления</div><div style="left:964px;top:619px;width:89px;height:20px;background:#E0DFE3;border-left:1px solid #fff;border-top:1px solid #fff;border-right:1px solid #716F64;box-shadow:inset -1px 0 0 #9D9DA1"></div><div class="t" style="left:990px;top:622px;font-size:13px;letter-spacing:0.4px;line-height:16px">Ресурсы</div><div style="left:1055px;top:619px;width:153px;height:20px;background:#E0DFE3;border-left:1px solid #fff;border-top:1px solid #fff;border-right:1px solid #716F64;box-shadow:inset -1px 0 0 #9D9DA1"></div><div class="t" style="left:1081px;top:622px;font-size:13px;letter-spacing:0.4px;line-height:16px">Выборка ресурсов</div><div style="left:1209px;top:619px;width:96px;height:20px;background:#E0DFE3;border-left:1px solid #fff;border-top:1px solid #fff;border-right:1px solid #716F64;box-shadow:inset -1px 0 0 #9D9DA1"></div><div class="t" style="left:1237px;top:622px;font-size:13px;letter-spacing:0.4px;line-height:16px">Тек. цены</div><div style="left:1306px;top:619px;width:118px;height:20px;background:#E0DFE3;border-left:1px solid #fff;border-top:1px solid #fff;border-right:1px solid #716F64;box-shadow:inset -1px 0 0 #9D9DA1"></div><div class="t" style="left:1334px;top:622px;font-size:13px;letter-spacing:0.4px;line-height:16px">Тек. индексы</div><div style="left:1425px;top:619px;width:100px;height:20px;background:#E0DFE3;border-left:1px solid #fff;border-top:1px solid #fff;border-right:1px solid #716F64;box-shadow:inset -1px 0 0 #9D9DA1"></div><div class="t" style="left:1452px;top:622px;font-size:13px;letter-spacing:0.4px;line-height:16px">Тех. часть</div><div style="left:1526px;top:619px;width:132px;height:20px;background:#E0DFE3;border-left:1px solid #fff;border-top:1px solid #fff;border-right:1px solid #716F64;box-shadow:inset -1px 0 0 #9D9DA1"></div><div class="t" style="left:1554px;top:622px;font-size:13px;letter-spacing:0.4px;line-height:16px">Просмотр смет</div><svg style="position:absolute;left:43px;top:623px;" width="10" height="13" shape-rendering="crispEdges"><rect x="0" y="0" width="7" height="1" fill="#000"/><rect x="0" y="1" width="1" height="1" fill="#000"/><rect x="1" y="1" width="5" height="1" fill="#fff"/><rect x="6" y="1" width="2" height="1" fill="#000"/><rect x="0" y="2" width="1" height="1" fill="#000"/><rect x="1" y="2" width="1" height="1" fill="#fff"/><rect x="2" y="2" width="2" height="1" fill="#000"/><rect x="4" y="2" width="2" height="1" fill="#fff"/><rect x="6" y="2" width="1" height="1" fill="#000"/><rect x="7" y="2" width="1" height="1" fill="#fff"/><rect x="8" y="2" width="1" height="1" fill="#000"/><rect x="0" y="3" width="1" height="1" fill="#000"/><rect x="1" y="3" width="5" height="1" fill="#fff"/><rect x="6" y="3" width="4" height="1" fill="#000"/><rect x="0" y="4" width="1" height="1" fill="#000"/><rect x="1" y="4" width="1" height="1" fill="#fff"/><rect x="2" y="4" width="4" height="1" fill="#000"/><rect x="6" y="4" width="3" height="1" fill="#fff"/><rect x="9" y="4" width="1" height="1" fill="#000"/><rect x="0" y="5" width="1" height="1" fill="#000"/><rect x="1" y="5" width="8" height="1" fill="#fff"/><rect x="9" y="5" width="1" height="1" fill="#000"/><rect x="0" y="6" width="1" height="1" fill="#000"/><rect x="1" y="6" width="1" height="1" fill="#fff"/><rect x="2" y="6" width="6" height="1" fill="#000"/><rect x="8" y="6" width="1" height="1" fill="#fff"/><rect x="9" y="6" width="1" height="1" fill="#000"/><rect x="0" y="7" width="1" height="1" fill="#000"/><rect x="1" y="7" width="8" height="1" fill="#fff"/><rect x="9" y="7" width="1" height="1" fill="#000"/><rect x="0" y="8" width="1" height="1" fill="#000"/><rect x="1" y="8" width="1" height="1" fill="#fff"/><rect x="2" y="8" width="6" height="1" fill="#000"/><rect x="8" y="8" width="1" height="1" fill="#fff"/><rect x="9" y="8" width="1" height="1" fill="#000"/><rect x="0" y="9" width="1" height="1" fill="#000"/><rect x="1" y="9" width="8" height="1" fill="#fff"/><rect x="9" y="9" width="1" height="1" fill="#000"/><rect x="0" y="10" width="1" height="1" fill="#000"/><rect x="1" y="10" width="1" height="1" fill="#fff"/><rect x="2" y="10" width="4" height="1" fill="#000"/><rect x="6" y="10" width="3" height="1" fill="#fff"/><rect x="9" y="10" width="1" height="1" fill="#000"/><rect x="0" y="11" width="1" height="1" fill="#000"/><rect x="1" y="11" width="8" height="1" fill="#fff"/><rect x="9" y="11" width="1" height="1" fill="#000"/><rect x="0" y="12" width="10" height="1" fill="#000"/></svg><svg style="position:absolute;left:275px;top:621px;" width="9" height="16" shape-rendering="crispEdges"><rect x="3" y="0" width="3" height="1" fill="#000"/><rect x="3" y="1" width="1" height="1" fill="#000"/><rect x="4" y="1" width="1" height="1" fill="#f00"/><rect x="5" y="1" width="1" height="1" fill="#000"/><rect x="3" y="2" width="1" height="1" fill="#000"/><rect x="4" y="2" width="1" height="1" fill="#f00"/><rect x="5" y="2" width="1" height="1" fill="#000"/><rect x="3" y="3" width="1" height="1" fill="#000"/><rect x="4" y="3" width="1" height="1" fill="#f00"/><rect x="5" y="3" width="1" height="1" fill="#000"/><rect x="3" y="4" width="1" height="1" fill="#000"/><rect x="4" y="4" width="1" height="1" fill="#f00"/><rect x="5" y="4" width="1" height="1" fill="#000"/><rect x="3" y="5" width="1" height="1" fill="#000"/><rect x="4" y="5" width="1" height="1" fill="#f00"/><rect x="5" y="5" width="1" height="1" fill="#000"/><rect x="3" y="6" width="1" height="1" fill="#000"/><rect x="4" y="6" width="1" height="1" fill="#f00"/><rect x="5" y="6" width="1" height="1" fill="#000"/><rect x="0" y="7" width="4" height="1" fill="#000"/><rect x="4" y="7" width="1" height="1" fill="#f00"/><rect x="5" y="7" width="4" height="1" fill="#000"/><rect x="0" y="8" width="1" height="1" fill="#000"/><rect x="1" y="8" width="7" height="1" fill="#f00"/><rect x="8" y="8" width="1" height="1" fill="#000"/><rect x="1" y="9" width="1" height="1" fill="#000"/><rect x="2" y="9" width="5" height="1" fill="#f00"/><rect x="7" y="9" width="1" height="1" fill="#000"/><rect x="1" y="10" width="1" height="1" fill="#000"/><rect x="2" y="10" width="5" height="1" fill="#f00"/><rect x="7" y="10" width="1" height="1" fill="#000"/><rect x="2" y="11" width="1" height="1" fill="#000"/><rect x="3" y="11" width="3" height="1" fill="#f00"/><rect x="6" y="11" width="1" height="1" fill="#000"/><rect x="2" y="12" width="1" height="1" fill="#000"/><rect x="3" y="12" width="3" height="1" fill="#f00"/><rect x="6" y="12" width="1" height="1" fill="#000"/><rect x="3" y="13" width="1" height="1" fill="#000"/><rect x="4" y="13" width="1" height="1" fill="#f00"/><rect x="5" y="13" width="1" height="1" fill="#000"/><rect x="3" y="14" width="1" height="1" fill="#000"/><rect x="4" y="14" width="1" height="1" fill="#f00"/><rect x="5" y="14" width="1" height="1" fill="#000"/><rect x="4" y="15" width="1" height="1" fill="#000"/></svg><svg style="position:absolute;left:412px;top:621px;" width="9" height="12" shape-rendering="crispEdges"><rect x="2" y="0" width="3" height="1" fill="#000"/><rect x="2" y="1" width="1" height="1" fill="#000"/><rect x="3" y="1" width="1" height="1" fill="#E0007C"/><rect x="4" y="1" width="1" height="1" fill="#000"/><rect x="2" y="2" width="1" height="1" fill="#000"/><rect x="3" y="2" width="1" height="1" fill="#E0007C"/><rect x="4" y="2" width="1" height="1" fill="#000"/><rect x="2" y="3" width="1" height="1" fill="#000"/><rect x="3" y="3" width="1" height="1" fill="#E0007C"/><rect x="4" y="3" width="1" height="1" fill="#000"/><rect x="2" y="4" width="1" height="1" fill="#000"/><rect x="3" y="4" width="1" height="1" fill="#E0007C"/><rect x="4" y="4" width="1" height="1" fill="#000"/><rect x="0" y="5" width="3" height="1" fill="#000"/><rect x="3" y="5" width="1" height="1" fill="#E0007C"/><rect x="4" y="5" width="3" height="1" fill="#000"/><rect x="0" y="6" width="1" height="1" fill="#000"/><rect x="1" y="6" width="5" height="1" fill="#E0007C"/><rect x="6" y="6" width="1" height="1" fill="#000"/><rect x="1" y="7" width="1" height="1" fill="#000"/><rect x="2" y="7" width="3" height="1" fill="#E0007C"/><rect x="5" y="7" width="1" height="1" fill="#000"/><rect x="1" y="8" width="1" height="1" fill="#000"/><rect x="2" y="8" width="3" height="1" fill="#E0007C"/><rect x="5" y="8" width="1" height="1" fill="#000"/><rect x="2" y="9" width="1" height="1" fill="#000"/><rect x="3" y="9" width="1" height="1" fill="#E0007C"/><rect x="4" y="9" width="1" height="1" fill="#000"/><rect x="2" y="10" width="1" height="1" fill="#000"/><rect x="3" y="10" width="1" height="1" fill="#E0007C"/><rect x="4" y="10" width="1" height="1" fill="#000"/><rect x="3" y="11" width="1" height="1" fill="#000"/></svg><div class="t" style="left:422px;top:624px;font-size:11px;line-height:12px">р</div><svg style="position:absolute;left:656px;top:618px;" width="17" height="15" shape-rendering="crispEdges"><rect x="0" y="0" width="2" height="1" fill="#00FFFF"/><rect x="9" y="0" width="4" height="1" fill="#000"/><rect x="0" y="1" width="3" height="1" fill="#00FFFF"/><rect x="3" y="1" width="3" height="1" fill="#FFFF00"/><rect x="8" y="1" width="1" height="1" fill="#000"/><rect x="9" y="1" width="4" height="1" fill="#fff"/><rect x="13" y="1" width="1" height="1" fill="#000"/><rect x="0" y="2" width="2" height="1" fill="#00FFFF"/><rect x="2" y="2" width="5" height="1" fill="#FFFF00"/><rect x="7" y="2" width="1" height="1" fill="#000"/><rect x="8" y="2" width="6" height="1" fill="#fff"/><rect x="14" y="2" width="1" height="1" fill="#000"/><rect x="0" y="3" width="1" height="1" fill="#00FFFF"/><rect x="1" y="3" width="3" height="1" fill="#FFFF00"/><rect x="4" y="3" width="1" height="1" fill="#000"/><rect x="5" y="3" width="3" height="1" fill="#FFFF00"/><rect x="8" y="3" width="1" height="1" fill="#000"/><rect x="9" y="3" width="3" height="1" fill="#fff"/><rect x="12" y="3" width="1" height="1" fill="#000"/><rect x="13" y="3" width="1" height="1" fill="#fff"/><rect x="14" y="3" width="1" height="1" fill="#000"/><rect x="1" y="4" width="4" height="1" fill="#FFFF00"/><rect x="5" y="4" width="1" height="1" fill="#000"/><rect x="6" y="4" width="2" height="1" fill="#FFFF00"/><rect x="8" y="4" width="1" height="1" fill="#000"/><rect x="9" y="4" width="4" height="1" fill="#fff"/><rect x="13" y="4" width="2" height="1" fill="#000"/><rect x="1" y="5" width="1" height="1" fill="#000"/><rect x="2" y="5" width="4" height="1" fill="#FFFF00"/><rect x="6" y="5" width="1" height="1" fill="#000"/><rect x="7" y="5" width="2" height="1" fill="#FFFF00"/><rect x="9" y="5" width="1" height="1" fill="#000"/><rect x="10" y="5" width="4" height="1" fill="#fff"/><rect x="14" y="5" width="1" height="1" fill="#000"/><rect x="2" y="6" width="1" height="1" fill="#000"/><rect x="3" y="6" width="4" height="1" fill="#FFFF00"/><rect x="7" y="6" width="1" height="1" fill="#000"/><rect x="8" y="6" width="2" height="1" fill="#FFFF00"/><rect x="10" y="6" width="1" height="1" fill="#000"/><rect x="11" y="6" width="3" height="1" fill="#fff"/><rect x="14" y="6" width="1" height="1" fill="#000"/><rect x="3" y="7" width="1" height="1" fill="#000"/><rect x="4" y="7" width="4" height="1" fill="#FFFF00"/><rect x="8" y="7" width="1" height="1" fill="#000"/><rect x="9" y="7" width="1" height="1" fill="#FFFF00"/><rect x="10" y="7" width="1" height="1" fill="#000"/><rect x="12" y="7" width="2" height="1" fill="#fff"/><rect x="14" y="7" width="1" height="1" fill="#000"/><rect x="4" y="8" width="1" height="1" fill="#000"/><rect x="5" y="8" width="4" height="1" fill="#FFFF00"/><rect x="9" y="8" width="1" height="1" fill="#000"/><rect x="10" y="8" width="4" height="1" fill="#fff"/><rect x="14" y="8" width="1" height="1" fill="#000"/><rect x="4" y="9" width="1" height="1" fill="#000"/><rect x="5" y="9" width="1" height="1" fill="#fff"/><rect x="6" y="9" width="1" height="1" fill="#000"/><rect x="7" y="9" width="2" height="1" fill="#FFFF00"/><rect x="9" y="9" width="2" height="1" fill="#000"/><rect x="11" y="9" width="3" height="1" fill="#fff"/><rect x="14" y="9" width="1" height="1" fill="#000"/><rect x="4" y="10" width="1" height="1" fill="#000"/><rect x="5" y="10" width="1" height="1" fill="#fff"/><rect x="6" y="10" width="4" height="1" fill="#000"/><rect x="10" y="10" width="1" height="1" fill="#fff"/><rect x="11" y="10" width="1" height="1" fill="#000"/><rect x="12" y="10" width="2" height="1" fill="#fff"/><rect x="14" y="10" width="1" height="1" fill="#000"/><rect x="4" y="11" width="1" height="1" fill="#000"/><rect x="5" y="11" width="9" height="1" fill="#fff"/><rect x="14" y="11" width="1" height="1" fill="#000"/><rect x="4" y="12" width="1" height="1" fill="#000"/><rect x="5" y="12" width="1" height="1" fill="#fff"/><rect x="6" y="12" width="1" height="1" fill="#000"/><rect x="7" y="12" width="1" height="1" fill="#fff"/><rect x="8" y="12" width="1" height="1" fill="#000"/><rect x="9" y="12" width="1" height="1" fill="#fff"/><rect x="10" y="12" width="1" height="1" fill="#000"/><rect x="11" y="12" width="1" height="1" fill="#fff"/><rect x="12" y="12" width="1" height="1" fill="#000"/><rect x="13" y="12" width="1" height="1" fill="#fff"/><rect x="14" y="12" width="1" height="1" fill="#000"/><rect x="4" y="13" width="1" height="1" fill="#000"/><rect x="5" y="13" width="9" height="1" fill="#fff"/><rect x="14" y="13" width="1" height="1" fill="#000"/><rect x="4" y="14" width="11" height="1" fill="#000"/></svg><svg style="position:absolute;left:783px;top:623px;" width="17" height="13" shape-rendering="crispEdges"><rect x="6" y="0" width="3" height="1" fill="#000"/><rect x="5" y="1" width="1" height="1" fill="#000"/><rect x="6" y="1" width="3" height="1" fill="#fff"/><rect x="9" y="1" width="2" height="1" fill="#000"/><rect x="4" y="2" width="1" height="1" fill="#000"/><rect x="5" y="2" width="6" height="1" fill="#fff"/><rect x="11" y="2" width="1" height="1" fill="#000"/><rect x="3" y="3" width="1" height="1" fill="#000"/><rect x="4" y="3" width="8" height="1" fill="#fff"/><rect x="12" y="3" width="1" height="1" fill="#000"/><rect x="2" y="4" width="1" height="1" fill="#000"/><rect x="3" y="4" width="5" height="1" fill="#fff"/><rect x="8" y="4" width="1" height="1" fill="#000"/><rect x="9" y="4" width="4" height="1" fill="#fff"/><rect x="13" y="4" width="1" height="1" fill="#000"/><rect x="1" y="5" width="1" height="1" fill="#000"/><rect x="2" y="5" width="5" height="1" fill="#fff"/><rect x="7" y="5" width="1" height="1" fill="#000"/><rect x="8" y="5" width="6" height="1" fill="#fff"/><rect x="14" y="5" width="1" height="1" fill="#000"/><rect x="0" y="6" width="1" height="1" fill="#000"/><rect x="1" y="6" width="5" height="1" fill="#fff"/><rect x="6" y="6" width="1" height="1" fill="#000"/><rect x="7" y="6" width="8" height="1" fill="#fff"/><rect x="15" y="6" width="1" height="1" fill="#000"/><rect x="0" y="7" width="1" height="1" fill="#00f"/><rect x="1" y="7" width="1" height="1" fill="#000"/><rect x="2" y="7" width="3" height="1" fill="#fff"/><rect x="5" y="7" width="1" height="1" fill="#000"/><rect x="6" y="7" width="8" height="1" fill="#fff"/><rect x="14" y="7" width="1" height="1" fill="#000"/><rect x="1" y="8" width="1" height="1" fill="#00f"/><rect x="2" y="8" width="1" height="1" fill="#000"/><rect x="3" y="8" width="1" height="1" fill="#fff"/><rect x="4" y="8" width="1" height="1" fill="#000"/><rect x="5" y="8" width="8" height="1" fill="#fff"/><rect x="13" y="8" width="1" height="1" fill="#000"/><rect x="2" y="9" width="1" height="1" fill="#00f"/><rect x="3" y="9" width="1" height="1" fill="#000"/><rect x="4" y="9" width="8" height="1" fill="#fff"/><rect x="12" y="9" width="1" height="1" fill="#000"/><rect x="3" y="10" width="1" height="1" fill="#00f"/><rect x="4" y="10" width="1" height="1" fill="#000"/><rect x="5" y="10" width="6" height="1" fill="#fff"/><rect x="11" y="10" width="1" height="1" fill="#000"/><rect x="4" y="11" width="2" height="1" fill="#00f"/><rect x="6" y="11" width="1" height="1" fill="#000"/><rect x="7" y="11" width="3" height="1" fill="#fff"/><rect x="10" y="11" width="1" height="1" fill="#000"/><rect x="6" y="12" width="2" height="1" fill="#00f"/><rect x="8" y="12" width="2" height="1" fill="#000"/></svg><svg style="position:absolute;left:857px;top:621px;" width="11" height="15" shape-rendering="crispEdges"><rect x="1" y="0" width="9" height="1" fill="#000"/><rect x="0" y="1" width="1" height="1" fill="#000"/><rect x="1" y="1" width="9" height="1" fill="#C0C0C0"/><rect x="10" y="1" width="1" height="1" fill="#000"/><rect x="0" y="2" width="1" height="1" fill="#000"/><rect x="1" y="2" width="1" height="1" fill="#C0C0C0"/><rect x="2" y="2" width="7" height="1" fill="#000"/><rect x="9" y="2" width="1" height="1" fill="#C0C0C0"/><rect x="10" y="2" width="1" height="1" fill="#000"/><rect x="0" y="3" width="1" height="1" fill="#000"/><rect x="1" y="3" width="1" height="1" fill="#C0C0C0"/><rect x="2" y="3" width="3" height="1" fill="#000"/><rect x="5" y="3" width="1" height="1" fill="#00FFFF"/><rect x="6" y="3" width="1" height="1" fill="#000"/><rect x="7" y="3" width="1" height="1" fill="#00FFFF"/><rect x="8" y="3" width="1" height="1" fill="#000"/><rect x="9" y="3" width="1" height="1" fill="#C0C0C0"/><rect x="10" y="3" width="1" height="1" fill="#000"/><rect x="0" y="4" width="1" height="1" fill="#000"/><rect x="1" y="4" width="1" height="1" fill="#C0C0C0"/><rect x="2" y="4" width="7" height="1" fill="#000"/><rect x="9" y="4" width="1" height="1" fill="#C0C0C0"/><rect x="10" y="4" width="1" height="1" fill="#000"/><rect x="0" y="5" width="1" height="1" fill="#000"/><rect x="1" y="5" width="9" height="1" fill="#C0C0C0"/><rect x="10" y="5" width="1" height="1" fill="#000"/><rect x="0" y="6" width="1" height="1" fill="#000"/><rect x="1" y="6" width="1" height="1" fill="#C0C0C0"/><rect x="2" y="6" width="1" height="1" fill="#000"/><rect x="3" y="6" width="1" height="1" fill="#C0C0C0"/><rect x="4" y="6" width="1" height="1" fill="#000"/><rect x="5" y="6" width="1" height="1" fill="#C0C0C0"/><rect x="6" y="6" width="1" height="1" fill="#000"/><rect x="7" y="6" width="1" height="1" fill="#C0C0C0"/><rect x="8" y="6" width="1" height="1" fill="#000"/><rect x="9" y="6" width="1" height="1" fill="#C0C0C0"/><rect x="10" y="6" width="1" height="1" fill="#000"/><rect x="0" y="7" width="1" height="1" fill="#000"/><rect x="1" y="7" width="9" height="1" fill="#C0C0C0"/><rect x="10" y="7" width="1" height="1" fill="#000"/><rect x="0" y="8" width="1" height="1" fill="#000"/><rect x="1" y="8" width="1" height="1" fill="#C0C0C0"/><rect x="2" y="8" width="1" height="1" fill="#000"/><rect x="3" y="8" width="1" height="1" fill="#C0C0C0"/><rect x="4" y="8" width="1" height="1" fill="#000"/><rect x="5" y="8" width="1" height="1" fill="#C0C0C0"/><rect x="6" y="8" width="1" height="1" fill="#000"/><rect x="7" y="8" width="1" height="1" fill="#C0C0C0"/><rect x="8" y="8" width="1" height="1" fill="#000"/><rect x="9" y="8" width="1" height="1" fill="#C0C0C0"/><rect x="10" y="8" width="1" height="1" fill="#000"/><rect x="0" y="9" width="1" height="1" fill="#000"/><rect x="1" y="9" width="9" height="1" fill="#C0C0C0"/><rect x="10" y="9" width="1" height="1" fill="#000"/><rect x="0" y="10" width="1" height="1" fill="#000"/><rect x="1" y="10" width="1" height="1" fill="#C0C0C0"/><rect x="2" y="10" width="1" height="1" fill="#000"/><rect x="3" y="10" width="1" height="1" fill="#C0C0C0"/><rect x="4" y="10" width="1" height="1" fill="#000"/><rect x="5" y="10" width="1" height="1" fill="#C0C0C0"/><rect x="6" y="10" width="1" height="1" fill="#000"/><rect x="7" y="10" width="1" height="1" fill="#C0C0C0"/><rect x="8" y="10" width="1" height="1" fill="#000"/><rect x="9" y="10" width="1" height="1" fill="#C0C0C0"/><rect x="10" y="10" width="1" height="1" fill="#000"/><rect x="0" y="11" width="1" height="1" fill="#000"/><rect x="1" y="11" width="9" height="1" fill="#C0C0C0"/><rect x="10" y="11" width="1" height="1" fill="#000"/><rect x="0" y="12" width="1" height="1" fill="#000"/><rect x="1" y="12" width="1" height="1" fill="#C0C0C0"/><rect x="2" y="12" width="1" height="1" fill="#000"/><rect x="3" y="12" width="1" height="1" fill="#C0C0C0"/><rect x="4" y="12" width="1" height="1" fill="#000"/><rect x="5" y="12" width="1" height="1" fill="#C0C0C0"/><rect x="6" y="12" width="3" height="1" fill="#f00"/><rect x="9" y="12" width="1" height="1" fill="#C0C0C0"/><rect x="10" y="12" width="1" height="1" fill="#000"/><rect x="0" y="13" width="1" height="1" fill="#000"/><rect x="1" y="13" width="9" height="1" fill="#C0C0C0"/><rect x="10" y="13" width="1" height="1" fill="#000"/><rect x="1" y="14" width="9" height="1" fill="#000"/></svg><svg style="position:absolute;left:970px;top:621px;" width="15" height="15" shape-rendering="crispEdges"><rect x="5" y="0" width="5" height="1" fill="#000"/><rect x="3" y="1" width="2" height="1" fill="#000"/><rect x="10" y="1" width="2" height="1" fill="#000"/><rect x="2" y="2" width="1" height="1" fill="#000"/><rect x="12" y="2" width="1" height="1" fill="#000"/><rect x="1" y="3" width="1" height="1" fill="#000"/><rect x="3" y="3" width="5" height="1" fill="#000"/><rect x="13" y="3" width="1" height="1" fill="#000"/><rect x="1" y="4" width="1" height="1" fill="#000"/><rect x="3" y="4" width="1" height="1" fill="#000"/><rect x="4" y="4" width="3" height="1" fill="#f00"/><rect x="7" y="4" width="1" height="1" fill="#000"/><rect x="9" y="4" width="3" height="1" fill="#000"/><rect x="13" y="4" width="1" height="1" fill="#000"/><rect x="0" y="5" width="1" height="1" fill="#000"/><rect x="3" y="5" width="1" height="1" fill="#000"/><rect x="4" y="5" width="3" height="1" fill="#f00"/><rect x="7" y="5" width="2" height="1" fill="#000"/><rect x="9" y="5" width="3" height="1" fill="#FFFF00"/><rect x="12" y="5" width="1" height="1" fill="#000"/><rect x="14" y="5" width="1" height="1" fill="#000"/><rect x="0" y="6" width="1" height="1" fill="#000"/><rect x="3" y="6" width="1" height="1" fill="#000"/><rect x="4" y="6" width="3" height="1" fill="#f00"/><rect x="7" y="6" width="2" height="1" fill="#000"/><rect x="9" y="6" width="3" height="1" fill="#FFFF00"/><rect x="12" y="6" width="1" height="1" fill="#000"/><rect x="14" y="6" width="1" height="1" fill="#000"/><rect x="0" y="7" width="1" height="1" fill="#000"/><rect x="3" y="7" width="5" height="1" fill="#000"/><rect x="9" y="7" width="3" height="1" fill="#000"/><rect x="14" y="7" width="1" height="1" fill="#000"/><rect x="0" y="8" width="1" height="1" fill="#000"/><rect x="14" y="8" width="1" height="1" fill="#000"/><rect x="0" y="9" width="1" height="1" fill="#000"/><rect x="7" y="9" width="1" height="1" fill="#000"/><rect x="14" y="9" width="1" height="1" fill="#000"/><rect x="1" y="10" width="1" height="1" fill="#000"/><rect x="6" y="10" width="1" height="1" fill="#000"/><rect x="7" y="10" width="1" height="1" fill="#00f"/><rect x="8" y="10" width="1" height="1" fill="#000"/><rect x="13" y="10" width="1" height="1" fill="#000"/><rect x="1" y="11" width="1" height="1" fill="#000"/><rect x="5" y="11" width="1" height="1" fill="#000"/><rect x="6" y="11" width="3" height="1" fill="#00f"/><rect x="9" y="11" width="1" height="1" fill="#000"/><rect x="13" y="11" width="1" height="1" fill="#000"/><rect x="2" y="12" width="1" height="1" fill="#000"/><rect x="4" y="12" width="7" height="1" fill="#000"/><rect x="12" y="12" width="1" height="1" fill="#000"/><rect x="3" y="13" width="2" height="1" fill="#000"/><rect x="10" y="13" width="2" height="1" fill="#000"/><rect x="5" y="14" width="5" height="1" fill="#000"/></svg><svg style="position:absolute;left:1059px;top:621px;" width="17" height="14" shape-rendering="crispEdges"><rect x="10" y="0" width="2" height="1" fill="#000"/><rect x="9" y="1" width="1" height="1" fill="#000"/><rect x="10" y="1" width="2" height="1" fill="#00f"/><rect x="12" y="1" width="1" height="1" fill="#000"/><rect x="8" y="2" width="1" height="1" fill="#000"/><rect x="9" y="2" width="4" height="1" fill="#00f"/><rect x="13" y="2" width="1" height="1" fill="#000"/><rect x="0" y="3" width="5" height="1" fill="#000"/><rect x="7" y="3" width="8" height="1" fill="#000"/><rect x="0" y="4" width="1" height="1" fill="#000"/><rect x="1" y="4" width="3" height="1" fill="#f00"/><rect x="4" y="4" width="1" height="1" fill="#000"/><rect x="7" y="4" width="1" height="1" fill="#000"/><rect x="8" y="4" width="5" height="1" fill="#fff"/><rect x="13" y="4" width="1" height="1" fill="#000"/><rect x="0" y="5" width="1" height="1" fill="#000"/><rect x="1" y="5" width="3" height="1" fill="#f00"/><rect x="4" y="5" width="1" height="1" fill="#000"/><rect x="7" y="5" width="1" height="1" fill="#000"/><rect x="8" y="5" width="1" height="1" fill="#fff"/><rect x="9" y="5" width="2" height="1" fill="#000"/><rect x="11" y="5" width="2" height="1" fill="#fff"/><rect x="13" y="5" width="2" height="1" fill="#000"/><rect x="0" y="6" width="1" height="1" fill="#000"/><rect x="1" y="6" width="3" height="1" fill="#f00"/><rect x="4" y="6" width="1" height="1" fill="#000"/><rect x="7" y="6" width="1" height="1" fill="#000"/><rect x="8" y="6" width="4" height="1" fill="#fff"/><rect x="12" y="6" width="4" height="1" fill="#000"/><rect x="0" y="7" width="5" height="1" fill="#000"/><rect x="7" y="7" width="1" height="1" fill="#000"/><rect x="8" y="7" width="1" height="1" fill="#fff"/><rect x="9" y="7" width="4" height="1" fill="#000"/><rect x="13" y="7" width="2" height="1" fill="#fff"/><rect x="15" y="7" width="1" height="1" fill="#000"/><rect x="10" y="8" width="5" height="1" fill="#fff"/><rect x="15" y="8" width="1" height="1" fill="#000"/><rect x="1" y="9" width="3" height="1" fill="#000"/><rect x="7" y="9" width="1" height="1" fill="#000"/><rect x="8" y="9" width="1" height="1" fill="#fff"/><rect x="9" y="9" width="4" height="1" fill="#000"/><rect x="13" y="9" width="2" height="1" fill="#fff"/><rect x="15" y="9" width="1" height="1" fill="#000"/><rect x="0" y="10" width="1" height="1" fill="#000"/><rect x="1" y="10" width="3" height="1" fill="#FFFF00"/><rect x="4" y="10" width="1" height="1" fill="#000"/><rect x="7" y="10" width="1" height="1" fill="#000"/><rect x="8" y="10" width="7" height="1" fill="#fff"/><rect x="15" y="10" width="1" height="1" fill="#000"/><rect x="0" y="11" width="1" height="1" fill="#000"/><rect x="1" y="11" width="3" height="1" fill="#FFFF00"/><rect x="4" y="11" width="1" height="1" fill="#000"/><rect x="7" y="11" width="1" height="1" fill="#000"/><rect x="8" y="11" width="1" height="1" fill="#fff"/><rect x="9" y="11" width="2" height="1" fill="#000"/><rect x="11" y="11" width="1" height="1" fill="#fff"/><rect x="12" y="11" width="2" height="1" fill="#000"/><rect x="14" y="11" width="1" height="1" fill="#fff"/><rect x="15" y="11" width="1" height="1" fill="#000"/><rect x="1" y="12" width="3" height="1" fill="#000"/><rect x="7" y="12" width="1" height="1" fill="#000"/><rect x="8" y="12" width="7" height="1" fill="#fff"/><rect x="15" y="12" width="1" height="1" fill="#000"/><rect x="8" y="13" width="8" height="1" fill="#000"/></svg><svg style="position:absolute;left:1215px;top:621px;" width="15" height="15" shape-rendering="crispEdges"><rect x="5" y="0" width="5" height="1" fill="#00f"/><rect x="3" y="1" width="9" height="1" fill="#00f"/><rect x="2" y="2" width="11" height="1" fill="#00f"/><rect x="1" y="3" width="13" height="1" fill="#00f"/><rect x="1" y="4" width="4" height="1" fill="#00f"/><rect x="5" y="4" width="1" height="1" fill="#fff"/><rect x="6" y="4" width="3" height="1" fill="#00f"/><rect x="9" y="4" width="1" height="1" fill="#fff"/><rect x="10" y="4" width="4" height="1" fill="#00f"/><rect x="0" y="5" width="5" height="1" fill="#00f"/><rect x="5" y="5" width="1" height="1" fill="#fff"/><rect x="6" y="5" width="3" height="1" fill="#00f"/><rect x="9" y="5" width="1" height="1" fill="#fff"/><rect x="10" y="5" width="5" height="1" fill="#00f"/><rect x="0" y="6" width="5" height="1" fill="#00f"/><rect x="5" y="6" width="1" height="1" fill="#fff"/><rect x="6" y="6" width="3" height="1" fill="#00f"/><rect x="9" y="6" width="1" height="1" fill="#fff"/><rect x="10" y="6" width="5" height="1" fill="#00f"/><rect x="0" y="7" width="5" height="1" fill="#00f"/><rect x="5" y="7" width="2" height="1" fill="#fff"/><rect x="7" y="7" width="1" height="1" fill="#00f"/><rect x="8" y="7" width="2" height="1" fill="#fff"/><rect x="10" y="7" width="5" height="1" fill="#00f"/><rect x="0" y="8" width="6" height="1" fill="#00f"/><rect x="6" y="8" width="2" height="1" fill="#fff"/><rect x="8" y="8" width="1" height="1" fill="#00f"/><rect x="9" y="8" width="1" height="1" fill="#fff"/><rect x="10" y="8" width="5" height="1" fill="#00f"/><rect x="0" y="9" width="9" height="1" fill="#00f"/><rect x="9" y="9" width="1" height="1" fill="#fff"/><rect x="10" y="9" width="5" height="1" fill="#00f"/><rect x="1" y="10" width="8" height="1" fill="#00f"/><rect x="9" y="10" width="2" height="1" fill="#fff"/><rect x="11" y="10" width="3" height="1" fill="#00f"/><rect x="1" y="11" width="13" height="1" fill="#00f"/><rect x="2" y="12" width="11" height="1" fill="#00f"/><rect x="3" y="13" width="9" height="1" fill="#00f"/><rect x="5" y="14" width="5" height="1" fill="#00f"/></svg><svg style="position:absolute;left:1312px;top:621px;" width="15" height="15" shape-rendering="crispEdges"><rect x="5" y="0" width="5" height="1" fill="#000080"/><rect x="3" y="1" width="9" height="1" fill="#000080"/><rect x="2" y="2" width="6" height="1" fill="#000080"/><rect x="8" y="2" width="1" height="1" fill="#fff"/><rect x="9" y="2" width="4" height="1" fill="#000080"/><rect x="1" y="3" width="13" height="1" fill="#000080"/><rect x="1" y="4" width="6" height="1" fill="#000080"/><rect x="7" y="4" width="2" height="1" fill="#fff"/><rect x="9" y="4" width="5" height="1" fill="#000080"/><rect x="0" y="5" width="6" height="1" fill="#000080"/><rect x="6" y="5" width="2" height="1" fill="#fff"/><rect x="8" y="5" width="7" height="1" fill="#000080"/><rect x="0" y="6" width="7" height="1" fill="#000080"/><rect x="7" y="6" width="1" height="1" fill="#fff"/><rect x="8" y="6" width="7" height="1" fill="#000080"/><rect x="0" y="7" width="6" height="1" fill="#000080"/><rect x="6" y="7" width="2" height="1" fill="#fff"/><rect x="8" y="7" width="7" height="1" fill="#000080"/><rect x="0" y="8" width="6" height="1" fill="#000080"/><rect x="6" y="8" width="1" height="1" fill="#fff"/><rect x="7" y="8" width="8" height="1" fill="#000080"/><rect x="0" y="9" width="5" height="1" fill="#000080"/><rect x="5" y="9" width="2" height="1" fill="#fff"/><rect x="7" y="9" width="8" height="1" fill="#000080"/><rect x="1" y="10" width="4" height="1" fill="#000080"/><rect x="5" y="10" width="4" height="1" fill="#fff"/><rect x="9" y="10" width="5" height="1" fill="#000080"/><rect x="1" y="11" width="13" height="1" fill="#000080"/><rect x="2" y="12" width="11" height="1" fill="#000080"/><rect x="3" y="13" width="9" height="1" fill="#000080"/><rect x="5" y="14" width="5" height="1" fill="#000080"/></svg><svg style="position:absolute;left:1431px;top:622px;" width="16" height="14" shape-rendering="crispEdges"><rect x="0" y="0" width="7" height="1" fill="#000"/><rect x="0" y="1" width="1" height="1" fill="#000"/><rect x="1" y="1" width="1" height="1" fill="#fff"/><rect x="2" y="1" width="1" height="1" fill="#000"/><rect x="3" y="1" width="1" height="1" fill="#fff"/><rect x="4" y="1" width="1" height="1" fill="#000"/><rect x="5" y="1" width="1" height="1" fill="#fff"/><rect x="6" y="1" width="3" height="1" fill="#000"/><rect x="0" y="2" width="1" height="1" fill="#000"/><rect x="1" y="2" width="1" height="1" fill="#fff"/><rect x="2" y="2" width="1" height="1" fill="#000"/><rect x="3" y="2" width="1" height="1" fill="#fff"/><rect x="4" y="2" width="1" height="1" fill="#000"/><rect x="5" y="2" width="1" height="1" fill="#fff"/><rect x="6" y="2" width="1" height="1" fill="#000"/><rect x="7" y="2" width="2" height="1" fill="#fff"/><rect x="9" y="2" width="2" height="1" fill="#000"/><rect x="0" y="3" width="1" height="1" fill="#000"/><rect x="1" y="3" width="1" height="1" fill="#fff"/><rect x="2" y="3" width="1" height="1" fill="#000"/><rect x="3" y="3" width="1" height="1" fill="#fff"/><rect x="4" y="3" width="1" height="1" fill="#000"/><rect x="5" y="3" width="1" height="1" fill="#fff"/><rect x="6" y="3" width="1" height="1" fill="#000"/><rect x="7" y="3" width="4" height="1" fill="#fff"/><rect x="11" y="3" width="1" height="1" fill="#000"/><rect x="0" y="4" width="1" height="1" fill="#000"/><rect x="1" y="4" width="1" height="1" fill="#fff"/><rect x="2" y="4" width="1" height="1" fill="#000"/><rect x="3" y="4" width="1" height="1" fill="#fff"/><rect x="4" y="4" width="1" height="1" fill="#000"/><rect x="5" y="4" width="1" height="1" fill="#fff"/><rect x="6" y="4" width="1" height="1" fill="#000"/><rect x="7" y="4" width="5" height="1" fill="#fff"/><rect x="12" y="4" width="1" height="1" fill="#000"/><rect x="0" y="5" width="1" height="1" fill="#000"/><rect x="1" y="5" width="1" height="1" fill="#fff"/><rect x="2" y="5" width="1" height="1" fill="#000"/><rect x="3" y="5" width="1" height="1" fill="#fff"/><rect x="4" y="5" width="7" height="1" fill="#000"/><rect x="11" y="5" width="2" height="1" fill="#fff"/><rect x="13" y="5" width="1" height="1" fill="#000"/><rect x="0" y="6" width="1" height="1" fill="#000"/><rect x="1" y="6" width="1" height="1" fill="#fff"/><rect x="2" y="6" width="1" height="1" fill="#000"/><rect x="3" y="6" width="1" height="1" fill="#fff"/><rect x="4" y="6" width="1" height="1" fill="#000"/><rect x="5" y="6" width="5" height="1" fill="#fff"/><rect x="10" y="6" width="1" height="1" fill="#000"/><rect x="11" y="6" width="2" height="1" fill="#fff"/><rect x="13" y="6" width="1" height="1" fill="#000"/><rect x="0" y="7" width="1" height="1" fill="#000"/><rect x="1" y="7" width="1" height="1" fill="#fff"/><rect x="2" y="7" width="1" height="1" fill="#000"/><rect x="3" y="7" width="1" height="1" fill="#fff"/><rect x="4" y="7" width="1" height="1" fill="#000"/><rect x="5" y="7" width="1" height="1" fill="#fff"/><rect x="6" y="7" width="2" height="1" fill="#000"/><rect x="8" y="7" width="2" height="1" fill="#fff"/><rect x="10" y="7" width="4" height="1" fill="#000"/><rect x="0" y="8" width="1" height="1" fill="#000"/><rect x="1" y="8" width="1" height="1" fill="#fff"/><rect x="2" y="8" width="1" height="1" fill="#000"/><rect x="3" y="8" width="1" height="1" fill="#fff"/><rect x="4" y="8" width="1" height="1" fill="#000"/><rect x="5" y="8" width="8" height="1" fill="#fff"/><rect x="13" y="8" width="1" height="1" fill="#000"/><rect x="0" y="9" width="1" height="1" fill="#000"/><rect x="1" y="9" width="1" height="1" fill="#fff"/><rect x="2" y="9" width="1" height="1" fill="#000"/><rect x="3" y="9" width="1" height="1" fill="#fff"/><rect x="4" y="9" width="1" height="1" fill="#000"/><rect x="5" y="9" width="1" height="1" fill="#fff"/><rect x="6" y="9" width="5" height="1" fill="#000"/><rect x="11" y="9" width="2" height="1" fill="#fff"/><rect x="13" y="9" width="1" height="1" fill="#000"/><rect x="0" y="10" width="1" height="1" fill="#000"/><rect x="1" y="10" width="1" height="1" fill="#fff"/><rect x="2" y="10" width="1" height="1" fill="#000"/><rect x="3" y="10" width="1" height="1" fill="#fff"/><rect x="4" y="10" width="1" height="1" fill="#000"/><rect x="5" y="10" width="8" height="1" fill="#fff"/><rect x="13" y="10" width="1" height="1" fill="#000"/><rect x="0" y="11" width="3" height="1" fill="#000"/><rect x="3" y="11" width="1" height="1" fill="#fff"/><rect x="4" y="11" width="1" height="1" fill="#000"/><rect x="5" y="11" width="1" height="1" fill="#fff"/><rect x="6" y="11" width="5" height="1" fill="#000"/><rect x="11" y="11" width="2" height="1" fill="#fff"/><rect x="13" y="11" width="1" height="1" fill="#000"/><rect x="2" y="12" width="3" height="1" fill="#000"/><rect x="5" y="12" width="8" height="1" fill="#fff"/><rect x="13" y="12" width="1" height="1" fill="#000"/><rect x="4" y="13" width="10" height="1" fill="#000"/></svg><svg style="position:absolute;left:1532px;top:623px;" width="16" height="13" shape-rendering="crispEdges"><rect x="0" y="0" width="16" height="1" fill="#000"/><rect x="0" y="1" width="1" height="1" fill="#000"/><rect x="1" y="1" width="14" height="1" fill="#00f"/><rect x="15" y="1" width="1" height="1" fill="#000"/><rect x="0" y="2" width="16" height="1" fill="#000"/><rect x="0" y="3" width="1" height="1" fill="#000"/><rect x="1" y="3" width="14" height="1" fill="#fff"/><rect x="15" y="3" width="1" height="1" fill="#000"/><rect x="0" y="4" width="1" height="1" fill="#000"/><rect x="1" y="4" width="1" height="1" fill="#fff"/><rect x="2" y="4" width="2" height="1" fill="#000"/><rect x="4" y="4" width="5" height="1" fill="#fff"/><rect x="9" y="4" width="5" height="1" fill="#000"/><rect x="14" y="4" width="1" height="1" fill="#fff"/><rect x="15" y="4" width="1" height="1" fill="#000"/><rect x="0" y="5" width="1" height="1" fill="#000"/><rect x="1" y="5" width="1" height="1" fill="#fff"/><rect x="2" y="5" width="1" height="1" fill="#000"/><rect x="3" y="5" width="2" height="1" fill="#00E000"/><rect x="5" y="5" width="10" height="1" fill="#fff"/><rect x="15" y="5" width="1" height="1" fill="#000"/><rect x="0" y="6" width="1" height="1" fill="#000"/><rect x="1" y="6" width="1" height="1" fill="#fff"/><rect x="2" y="6" width="1" height="1" fill="#000"/><rect x="3" y="6" width="3" height="1" fill="#00E000"/><rect x="6" y="6" width="3" height="1" fill="#fff"/><rect x="9" y="6" width="5" height="1" fill="#000"/><rect x="14" y="6" width="1" height="1" fill="#fff"/><rect x="15" y="6" width="1" height="1" fill="#000"/><rect x="0" y="7" width="1" height="1" fill="#000"/><rect x="1" y="7" width="1" height="1" fill="#fff"/><rect x="2" y="7" width="1" height="1" fill="#000"/><rect x="3" y="7" width="4" height="1" fill="#00E000"/><rect x="7" y="7" width="8" height="1" fill="#fff"/><rect x="15" y="7" width="1" height="1" fill="#000"/><rect x="0" y="8" width="1" height="1" fill="#000"/><rect x="1" y="8" width="1" height="1" fill="#fff"/><rect x="2" y="8" width="1" height="1" fill="#000"/><rect x="3" y="8" width="3" height="1" fill="#00E000"/><rect x="6" y="8" width="3" height="1" fill="#fff"/><rect x="9" y="8" width="5" height="1" fill="#000"/><rect x="14" y="8" width="1" height="1" fill="#fff"/><rect x="15" y="8" width="1" height="1" fill="#000"/><rect x="0" y="9" width="1" height="1" fill="#000"/><rect x="1" y="9" width="1" height="1" fill="#fff"/><rect x="2" y="9" width="1" height="1" fill="#000"/><rect x="3" y="9" width="2" height="1" fill="#00E000"/><rect x="5" y="9" width="10" height="1" fill="#fff"/><rect x="15" y="9" width="1" height="1" fill="#000"/><rect x="0" y="10" width="1" height="1" fill="#000"/><rect x="1" y="10" width="1" height="1" fill="#fff"/><rect x="2" y="10" width="2" height="1" fill="#000"/><rect x="4" y="10" width="5" height="1" fill="#fff"/><rect x="9" y="10" width="5" height="1" fill="#000"/><rect x="14" y="10" width="1" height="1" fill="#fff"/><rect x="15" y="10" width="1" height="1" fill="#000"/><rect x="0" y="11" width="1" height="1" fill="#000"/><rect x="1" y="11" width="14" height="1" fill="#fff"/><rect x="15" y="11" width="1" height="1" fill="#000"/><rect x="0" y="12" width="16" height="1" fill="#000"/></svg><div style="left:34px;top:641px;width:1643px;height:253px;border-left:1px solid #fff;border-top:1px solid #fff"></div><div style="left:36px;top:644px;width:362px;height:191px;background:#E0DFE3;border-left:1px solid #716F64;border-top:1px solid #716F64;border-right:1px solid #fff;border-bottom:1px solid #fff"></div><div style="left:38px;top:646px;width:358px;height:1px;background:#000"></div><div style="left:38px;top:647px;width:255px;height:15px;background:#008080;border-left:1px solid #fff;border-top:1px solid #fff;border-right:1px solid #000;border-bottom:1px solid #000"></div><div class="t" style="left:38px;top:648px;width:254px;text-align:center;font-weight:bold;font-size:12px;letter-spacing:0px;color:#fff;line-height:15px">Наименование</div><div style="left:293px;top:647px;width:103px;height:15px;background:#008080;border-left:1px solid #fff;border-top:1px solid #fff;border-right:1px solid #000;border-bottom:1px solid #000"></div><div class="t" style="left:293px;top:648px;width:102px;text-align:center;font-weight:bold;font-size:12px;letter-spacing:0px;color:#fff;line-height:15px">Значение</div><div style="left:38px;top:663px;width:358px;height:16px;background:#C0C0C0"></div><div style="left:38px;top:679px;width:358px;height:1px;background:#000"></div><div class="t" style="left:41px;top:666px;font-weight:bold;font-size:12px;letter-spacing:-0.1px">Шифр&nbsp; [Версия: 4000]</div><div style="left:295px;top:666px;width:100px;height:15px;overflow:hidden"><div class="t" style="left:0;top:0;font-weight:bold;font-size:12px;letter-spacing:-0.1px">Е27-04-003-4</div></div><div style="left:38px;top:680px;width:358px;height:16px;background:#E0DFE3"></div><div style="left:38px;top:696px;width:358px;height:1px;background:#C0C0C0"></div><div class="t" style="left:41px;top:683px;font-size:12px;transform:scaleX(0.925);transform-origin:0 0">Кол-во</div><div style="left:295px;top:683px;width:100px;height:15px;overflow:hidden"><div class="t" style="left:0;top:0;font-size:12px;transform:scaleX(0.925);transform-origin:0 0">1.0</div></div><div style="left:38px;top:697px;width:358px;height:16px;background:#E0DFE3"></div><div style="left:38px;top:713px;width:358px;height:1px;background:#C0C0C0"></div><div class="t" style="left:41px;top:700px;font-size:12px;transform:scaleX(0.925);transform-origin:0 0">Ед. изм.</div><div style="left:295px;top:700px;width:100px;height:15px;overflow:hidden"><div class="t" style="left:0;top:0;font-size:12px;transform:scaleX(0.925);transform-origin:0 0">1000 м2 основания</div></div><div style="left:38px;top:714px;width:358px;height:16px;background:#E0DFE3"></div><div style="left:293px;top:714px;width:102px;height:16px;background:#FFFF00"></div><div style="left:38px;top:730px;width:358px;height:1px;background:#C0C0C0"></div><div class="t" style="left:41px;top:717px;font-size:12px;transform:scaleX(0.925);transform-origin:0 0">Наименование работ и затрат</div><div style="left:295px;top:717px;width:100px;height:15px;overflow:hidden"><div class="t" style="left:0;top:0;font-size:12px;transform:scaleX(0.925);transform-origin:0 0">Устройство основания</div></div><div style="left:38px;top:731px;width:358px;height:16px;background:#E0DFE3"></div><div style="left:38px;top:747px;width:358px;height:1px;background:#000"></div><div class="t" style="left:41px;top:734px;font-size:12px;transform:scaleX(0.925);transform-origin:0 0">Определитель</div><div style="left:295px;top:734px;width:100px;height:15px;overflow:hidden"><div class="t" style="left:0;top:0;font-size:12px;transform:scaleX(0.925);transform-origin:0 0">1: ОБЩЕСТРОИТЕЛЬНЫЕ</div></div><div style="left:38px;top:748px;width:358px;height:16px;background:#C0C0C0"></div><div style="left:38px;top:764px;width:358px;height:1px;background:#000"></div><div class="t" style="left:41px;top:751px;font-weight:bold;font-size:12px;letter-spacing:-0.1px">Ст-ть единицы</div><div style="left:295px;top:751px;width:100px;height:15px;overflow:hidden"><div class="t" style="left:0;top:0;font-weight:bold;font-size:12px;letter-spacing:-0.1px">7 313.37</div></div><div style="left:38px;top:765px;width:358px;height:16px;background:#E0DFE3"></div><div style="left:38px;top:781px;width:358px;height:1px;background:#C0C0C0"></div><div class="t" style="left:41px;top:768px;font-size:12px;transform:scaleX(0.925);transform-origin:0 0">Всего трудозатраты не занят. обслуж. машин</div><div style="left:295px;top:768px;width:100px;height:15px;overflow:hidden"><div class="t" style="left:0;top:0;font-size:12px;transform:scaleX(0.925);transform-origin:0 0">77.50908</div></div><div style="left:38px;top:782px;width:358px;height:16px;background:#E0DFE3"></div><div style="left:38px;top:798px;width:358px;height:1px;background:#000"></div><div class="t" style="left:41px;top:785px;font-size:12px;transform:scaleX(0.925);transform-origin:0 0">Всего трудозатраты обслуж. машин</div><div style="left:295px;top:785px;width:100px;height:15px;overflow:hidden"><div class="t" style="left:0;top:0;font-size:12px;transform:scaleX(0.925);transform-origin:0 0">43.10775</div></div><div style="left:38px;top:799px;width:358px;height:16px;background:#E0DFE3"></div><div style="left:38px;top:815px;width:358px;height:1px;background:#C0C0C0"></div><div class="t" style="left:41px;top:802px;font-size:12px;transform:scaleX(0.925);transform-origin:0 0">Накладные расходы (от ФОТ)</div><div style="left:295px;top:802px;width:100px;height:15px;overflow:hidden"><div class="t" style="left:0;top:0;font-size:12px;transform:scaleX(0.925);transform-origin:0 0">133.48%&nbsp; (1 697.95р.)</div></div><div style="left:38px;top:816px;width:358px;height:16px;background:#E0DFE3"></div><div style="left:38px;top:832px;width:358px;height:1px;background:#C0C0C0"></div><div class="t" style="left:41px;top:819px;font-size:12px;transform:scaleX(0.925);transform-origin:0 0">Сметная прибыль (от ФОТ)</div><div style="left:295px;top:819px;width:100px;height:15px;overflow:hidden"><div class="t" style="left:0;top:0;font-size:12px;transform:scaleX(0.925);transform-origin:0 0">80.75%&nbsp; (1 027.19р.)</div></div><div style="left:292px;top:663px;width:1px;height:170px;background:#C0C0C0"></div><div style="left:396px;top:644px;width:2px;height:191px;background:#fff"></div><div style="left:398px;top:644px;width:5px;height:191px;background:#9D9DA1"></div><div style="left:403px;top:644px;width:408px;height:191px;background:#E0DFE3;border-left:1px solid #716F64;border-top:1px solid #716F64"></div><div style="left:404px;top:646px;width:402px;height:1px;background:#000"></div><div style="left:404px;top:647px;width:152px;height:15px;background:#A6CAF0;border-left:1px solid #fff;border-top:1px solid #fff;border-right:1px solid #000;border-bottom:1px solid #000"></div><div class="t" style="left:404px;top:648px;width:151px;text-align:center;font-weight:bold;font-size:12px;letter-spacing:0px;color:#000;line-height:15px">Наименование</div><div style="left:556px;top:647px;width:70px;height:15px;background:#A6CAF0;border-left:1px solid #fff;border-top:1px solid #fff;border-right:1px solid #000;border-bottom:1px solid #000"></div><div class="t" style="left:556px;top:648px;width:69px;text-align:center;font-weight:bold;font-size:12px;letter-spacing:0px;color:#000;line-height:15px">Значение</div><div style="left:626px;top:647px;width:71px;height:15px;background:#A6CAF0;border-left:1px solid #fff;border-top:1px solid #fff;border-right:1px solid #000;border-bottom:1px solid #000"></div><div class="t" style="left:626px;top:648px;width:70px;text-align:center;font-weight:bold;font-size:12px;letter-spacing:0px;color:#000;line-height:15px">Поправка</div><div style="left:697px;top:647px;width:55px;height:15px;background:#A6CAF0;border-left:1px solid #fff;border-top:1px solid #fff;border-right:1px solid #000;border-bottom:1px solid #000"></div><div class="t" style="left:697px;top:648px;width:54px;text-align:center;font-weight:bold;font-size:12px;letter-spacing:0px;color:#000;line-height:15px">Начисл.</div><div style="left:752px;top:647px;width:54px;height:15px;background:#A6CAF0;border-left:1px solid #fff;border-top:1px solid #fff;border-right:1px solid #000;border-bottom:1px solid #000"></div><div class="t" style="left:752px;top:648px;width:53px;text-align:center;font-weight:bold;font-size:12px;letter-spacing:0px;color:#000;line-height:15px">Индекс</div><div style="left:404px;top:663px;width:402px;height:16px;background:#C0C0C0"></div><div style="left:404px;top:679px;width:402px;height:1px;background:#000"></div><div class="t" style="left:406px;top:666px;font-size:12px;transform:scaleX(0.925);transform-origin:0 0">Прямые&nbsp;затраты,&nbsp;в&nbsp;т.ч.:</div><div class="t" style="left:556px;top:666px;width:67px;text-align:right;font-size:12px;transform:scaleX(0.925);transform-origin:100% 0">7 313.37</div><div style="left:404px;top:680px;width:402px;height:16px;background:#E0DFE3"></div><div style="left:404px;top:696px;width:402px;height:1px;background:#C0C0C0"></div><div class="t" style="left:406px;top:683px;font-size:12px;transform:scaleX(0.925);transform-origin:0 0">&nbsp;оплата&nbsp;труда&nbsp;рабочих</div><div class="t" style="left:556px;top:683px;width:67px;text-align:right;font-size:12px;transform:scaleX(0.925);transform-origin:100% 0">693.50</div><div class="t" style="left:628px;top:683px;font-size:12px;transform:scaleX(0.925);transform-origin:0 0">*1.078</div><div class="t" style="left:699px;top:683px;font-size:12px;transform:scaleX(0.925);transform-origin:0 0">*1.587</div><div style="left:404px;top:697px;width:402px;height:16px;background:#E0DFE3"></div><div style="left:404px;top:713px;width:402px;height:1px;background:#C0C0C0"></div><div class="t" style="left:406px;top:700px;font-size:12px;transform:scaleX(0.925);transform-origin:0 0">&nbsp;эксплуатация&nbsp;машин&nbsp;всего</div><div class="t" style="left:556px;top:700px;width:67px;text-align:right;font-size:12px;transform:scaleX(0.925);transform-origin:100% 0">6 592.30</div><div class="t" style="left:628px;top:700px;font-size:12px;transform:scaleX(0.925);transform-origin:0 0">*1.56</div><div class="t" style="left:699px;top:700px;font-size:12px;transform:scaleX(0.925);transform-origin:0 0">*1.725</div><div style="left:404px;top:714px;width:402px;height:16px;background:#E0DFE3"></div><div style="left:404px;top:730px;width:402px;height:1px;background:#C0C0C0"></div><div class="t" style="left:406px;top:717px;font-size:12px;transform:scaleX(0.925);transform-origin:0 0">&nbsp;&nbsp;&nbsp;в&nbsp;т.ч.&nbsp;оплата&nbsp;механ.</div><div class="t" style="left:556px;top:717px;width:67px;text-align:right;font-size:12px;transform:scaleX(0.925);transform-origin:100% 0">578.56</div><div class="t" style="left:628px;top:717px;font-size:12px;transform:scaleX(0.925);transform-origin:0 0">*1.078</div><div class="t" style="left:699px;top:717px;font-size:12px;transform:scaleX(0.925);transform-origin:0 0">*1.725</div><div style="left:404px;top:731px;width:402px;height:16px;background:#E0DFE3"></div><div style="left:404px;top:747px;width:402px;height:1px;background:#000"></div><div class="t" style="left:406px;top:734px;font-size:12px;transform:scaleX(0.925);transform-origin:0 0">&nbsp;материал.&nbsp;ресурсы</div><div class="t" style="left:556px;top:734px;width:67px;text-align:right;font-size:12px;transform:scaleX(0.925);transform-origin:100% 0">27.57</div><div class="t" style="left:628px;top:734px;font-size:12px;transform:scaleX(0.925);transform-origin:0 0">*1.076</div><div style="left:404px;top:748px;width:402px;height:16px;background:#C0C0C0"></div><div style="left:404px;top:764px;width:402px;height:1px;background:#000"></div><div class="t" style="left:406px;top:751px;font-size:12px;transform:scaleX(0.925);transform-origin:0 0">Всего&nbsp;с&nbsp;НР&nbsp;и&nbsp;СП</div><div class="t" style="left:556px;top:751px;width:67px;text-align:right;font-size:12px;transform:scaleX(0.925);transform-origin:100% 0">10 038.50</div><div style="left:555px;top:663px;width:1px;height:102px;background:#C0C0C0"></div><div style="left:625px;top:663px;width:1px;height:102px;background:#C0C0C0"></div><div style="left:696px;top:663px;width:1px;height:102px;background:#C0C0C0"></div><div style="left:751px;top:663px;width:1px;height:102px;background:#C0C0C0"></div><div style="left:805px;top:646px;width:1px;height:119px;background:#C0C0C0"></div><div style="left:810px;top:644px;width:3px;height:191px;background:#9D9DA1"></div><div style="left:813px;top:644px;width:857px;height:192px;background:#E0DFE3;border-left:1px solid #716F64;border-top:1px solid #716F64"></div><div style="left:814px;top:645px;width:856px;height:126px;background:#fff"></div><div style="left:815px;top:646px;width:855px;height:124px;background:linear-gradient(#808000 0%,#A8A850 35%,#D8D8B0 70%,#FAFAF4 100%)"></div><div style="left:814px;top:770px;width:856px;height:1px;background:#fff"></div><div style="left:814px;top:771px;width:856px;height:1px;background:#9D9DA1"></div><div class="t" style="left:814px;top:650px;width:856px;text-align:center;color:#fff;font-weight:bold;font-size:12px;letter-spacing:-0.25px;line-height:15px">Прямые затраты</div><div style="left:884px;top:670px;width:761px;height:77px;border:2px solid #000;border-right-width:1px;border-top-width:1px"></div><div style="left:938px;top:671px;width:0;height:75px;border-left:1px dashed #787878"></div><div style="left:992px;top:671px;width:0;height:75px;border-left:1px dashed #787878"></div><div style="left:1046px;top:671px;width:0;height:75px;border-left:1px dashed #787878"></div><div style="left:1100px;top:671px;width:0;height:75px;border-left:1px dashed #787878"></div><div style="left:1154px;top:671px;width:0;height:75px;border-left:1px dashed #787878"></div><div style="left:1207px;top:671px;width:0;height:75px;border-left:1px dashed #787878"></div><div style="left:1261px;top:671px;width:0;height:75px;border-left:1px dashed #787878"></div><div style="left:1315px;top:671px;width:0;height:75px;border-left:1px dashed #787878"></div><div style="left:1369px;top:671px;width:0;height:75px;border-left:1px dashed #787878"></div><div style="left:1423px;top:671px;width:0;height:75px;border-left:1px dashed #787878"></div><div style="left:1477px;top:671px;width:0;height:75px;border-left:1px dashed #787878"></div><div style="left:1530px;top:671px;width:0;height:75px;border-left:1px dashed #787878"></div><div style="left:1584px;top:671px;width:0;height:75px;border-left:1px dashed #787878"></div><div style="left:1638px;top:671px;width:0;height:75px;border-left:1px dashed #787878"></div><div style="left:886px;top:684px;width:758px;height:0;border-top:1px dashed #787878"></div><div style="left:886px;top:732px;width:758px;height:0;border-top:1px dashed #787878"></div><div style="left:884px;top:747px;width:1px;height:5px;background:#505050"></div><div style="left:898px;top:747px;width:1px;height:3px;background:#505050"></div><div style="left:911px;top:747px;width:1px;height:3px;background:#505050"></div><div style="left:925px;top:747px;width:1px;height:3px;background:#505050"></div><div style="left:938px;top:747px;width:1px;height:5px;background:#505050"></div><div style="left:952px;top:747px;width:1px;height:3px;background:#505050"></div><div style="left:965px;top:747px;width:1px;height:3px;background:#505050"></div><div style="left:979px;top:747px;width:1px;height:3px;background:#505050"></div><div style="left:992px;top:747px;width:1px;height:5px;background:#505050"></div><div style="left:1006px;top:747px;width:1px;height:3px;background:#505050"></div><div style="left:1019px;top:747px;width:1px;height:3px;background:#505050"></div><div style="left:1033px;top:747px;width:1px;height:3px;background:#505050"></div><div style="left:1046px;top:747px;width:1px;height:5px;background:#505050"></div><div style="left:1059px;top:747px;width:1px;height:3px;background:#505050"></div><div style="left:1073px;top:747px;width:1px;height:3px;background:#505050"></div><div style="left:1086px;top:747px;width:1px;height:3px;background:#505050"></div><div style="left:1100px;top:747px;width:1px;height:5px;background:#505050"></div><div style="left:1113px;top:747px;width:1px;height:3px;background:#505050"></div><div style="left:1127px;top:747px;width:1px;height:3px;background:#505050"></div><div style="left:1140px;top:747px;width:1px;height:3px;background:#505050"></div><div style="left:1154px;top:747px;width:1px;height:5px;background:#505050"></div><div style="left:1167px;top:747px;width:1px;height:3px;background:#505050"></div><div style="left:1181px;top:747px;width:1px;height:3px;background:#505050"></div><div style="left:1194px;top:747px;width:1px;height:3px;background:#505050"></div><div style="left:1207px;top:747px;width:1px;height:5px;background:#505050"></div><div style="left:1221px;top:747px;width:1px;height:3px;background:#505050"></div><div style="left:1234px;top:747px;width:1px;height:3px;background:#505050"></div><div style="left:1248px;top:747px;width:1px;height:3px;background:#505050"></div><div style="left:1261px;top:747px;width:1px;height:5px;background:#505050"></div><div style="left:1275px;top:747px;width:1px;height:3px;background:#505050"></div><div style="left:1288px;top:747px;width:1px;height:3px;background:#505050"></div><div style="left:1302px;top:747px;width:1px;height:3px;background:#505050"></div><div style="left:1315px;top:747px;width:1px;height:5px;background:#505050"></div><div style="left:1329px;top:747px;width:1px;height:3px;background:#505050"></div><div style="left:1342px;top:747px;width:1px;height:3px;background:#505050"></div><div style="left:1355px;top:747px;width:1px;height:3px;background:#505050"></div><div style="left:1369px;top:747px;width:1px;height:5px;background:#505050"></div><div style="left:1382px;top:747px;width:1px;height:3px;background:#505050"></div><div style="left:1396px;top:747px;width:1px;height:3px;background:#505050"></div><div style="left:1409px;top:747px;width:1px;height:3px;background:#505050"></div><div style="left:1423px;top:747px;width:1px;height:5px;background:#505050"></div><div style="left:1436px;top:747px;width:1px;height:3px;background:#505050"></div><div style="left:1450px;top:747px;width:1px;height:3px;background:#505050"></div><div style="left:1463px;top:747px;width:1px;height:3px;background:#505050"></div><div style="left:1477px;top:747px;width:1px;height:5px;background:#505050"></div><div style="left:1490px;top:747px;width:1px;height:3px;background:#505050"></div><div style="left:1503px;top:747px;width:1px;height:3px;background:#505050"></div><div style="left:1517px;top:747px;width:1px;height:3px;background:#505050"></div><div style="left:1530px;top:747px;width:1px;height:5px;background:#505050"></div><div style="left:1544px;top:747px;width:1px;height:3px;background:#505050"></div><div style="left:1557px;top:747px;width:1px;height:3px;background:#505050"></div><div style="left:1571px;top:747px;width:1px;height:3px;background:#505050"></div><div style="left:1584px;top:747px;width:1px;height:5px;background:#505050"></div><div style="left:1598px;top:747px;width:1px;height:3px;background:#505050"></div><div style="left:1611px;top:747px;width:1px;height:3px;background:#505050"></div><div style="left:1625px;top:747px;width:1px;height:3px;background:#505050"></div><div style="left:1638px;top:747px;width:1px;height:5px;background:#505050"></div><div class="t" style="left:854px;top:753px;width:60px;text-align:center;font-size:11px">0</div><div class="t" style="left:908px;top:753px;width:60px;text-align:center;font-size:11px">500</div><div class="t" style="left:962px;top:753px;width:60px;text-align:center;font-size:11px">1 000</div><div class="t" style="left:1016px;top:753px;width:60px;text-align:center;font-size:11px">1 500</div><div class="t" style="left:1070px;top:753px;width:60px;text-align:center;font-size:11px">2 000</div><div class="t" style="left:1124px;top:753px;width:60px;text-align:center;font-size:11px">2 500</div><div class="t" style="left:1177px;top:753px;width:60px;text-align:center;font-size:11px">3 000</div><div class="t" style="left:1231px;top:753px;width:60px;text-align:center;font-size:11px">3 500</div><div class="t" style="left:1285px;top:753px;width:60px;text-align:center;font-size:11px">4 000</div><div class="t" style="left:1339px;top:753px;width:60px;text-align:center;font-size:11px">4 500</div><div class="t" style="left:1393px;top:753px;width:60px;text-align:center;font-size:11px">5 000</div><div class="t" style="left:1447px;top:753px;width:60px;text-align:center;font-size:11px">5 500</div><div class="t" style="left:1500px;top:753px;width:60px;text-align:center;font-size:11px">6 000</div><div class="t" style="left:1554px;top:753px;width:60px;text-align:center;font-size:11px">6 500</div><div class="t" style="left:1608px;top:753px;width:60px;text-align:center;font-size:11px">7 000</div><div style="left:885px;top:677px;width:75px;height:14px;background:#FF0000;border:1px solid #000"></div><div style="left:885px;top:701px;width:709px;height:14px;background:#008000;border:1px solid #000"></div><div style="left:885px;top:725px;width:3px;height:14px;background:#0000FF;border:1px solid #000"></div><div style="left:960px;top:684px;width:8px;height:1px;background:#fff"></div><div style="left:968px;top:677px;width:45px;height:16px;background:#FFFF80;border:1px solid #000"></div><div class="t" style="left:968px;top:678px;width:45px;text-align:center;font-size:11px">693.50</div><div style="left:1594px;top:708px;width:8px;height:1px;background:#fff"></div><div style="left:1602px;top:701px;width:51px;height:16px;background:#FFFF80;border:1px solid #000"></div><div class="t" style="left:1602px;top:702px;width:51px;text-align:center;font-size:11px">6592.30</div><div style="left:888px;top:732px;width:8px;height:1px;background:#fff"></div><div style="left:896px;top:725px;width:39px;height:16px;background:#FFFF80;border:1px solid #000"></div><div class="t" style="left:896px;top:726px;width:39px;text-align:center;font-size:11px">27.57</div><div class="t" style="left:820px;top:678px;width:58px;text-align:right;font-size:11px">693.50</div><div style="left:879px;top:684px;width:5px;height:1px;background:#505050"></div><div class="t" style="left:820px;top:702px;width:58px;text-align:right;font-size:11px">6592.30</div><div style="left:879px;top:708px;width:5px;height:1px;background:#505050"></div><div class="t" style="left:820px;top:726px;width:58px;text-align:right;font-size:11px">27.57</div><div style="left:879px;top:732px;width:5px;height:1px;background:#505050"></div><div style="left:821px;top:778px;width:12px;height:12px;background:#FF0000;border:1px solid #000"></div><div class="t" style="left:838px;top:777px;font-size:11px;letter-spacing:0px">- основная зарплата</div><div style="left:989px;top:776px;width:64px;height:16px;background:#808080;border:1px solid;border-color:#707070 #fff #fff #707070"></div><div class="t" style="left:989px;top:777px;width:64px;text-align:center;color:#fff;font-weight:bold;font-size:12px;letter-spacing:0.6px;line-height:14px">9.48%</div><div style="left:821px;top:798px;width:12px;height:12px;background:#008000;border:1px solid #000"></div><div class="t" style="left:838px;top:797px;font-size:11px;letter-spacing:0px">- эксплуатация машин</div><div style="left:989px;top:796px;width:64px;height:16px;background:#808080;border:1px solid;border-color:#707070 #fff #fff #707070"></div><div class="t" style="left:989px;top:797px;width:64px;text-align:center;color:#fff;font-weight:bold;font-size:12px;letter-spacing:0.6px;line-height:14px">90.14%</div><div style="left:821px;top:818px;width:12px;height:12px;background:#0000FF;border:1px solid #000"></div><div class="t" style="left:838px;top:817px;font-size:11px;letter-spacing:0px">- стоимость материалов</div><div style="left:989px;top:816px;width:64px;height:16px;background:#808080;border:1px solid;border-color:#707070 #fff #fff #707070"></div><div class="t" style="left:989px;top:817px;width:64px;text-align:center;color:#fff;font-weight:bold;font-size:12px;letter-spacing:0.6px;line-height:14px">0.38%</div><div style="left:1669px;top:644px;width:1px;height:192px;background:#9D9DA1"></div><div style="left:1670px;top:644px;width:1px;height:193px;background:#fff"></div><div style="left:813px;top:836px;width:858px;height:1px;background:#fff"></div><div style="left:1671px;top:643px;width:1px;height:194px;background:#9D9DA1"></div><div style="left:1675px;top:639px;width:1px;height:256px;background:#716F64"></div><div style="left:0px;top:894px;width:1676px;height:1px;background:#716F64"></div><div style="left:36px;top:838px;width:1635px;height:20px;background:#808080;border-right:1px solid #fff;border-bottom:1px solid #fff"></div><div style="left:44px;top:841px;width:14px;height:14px;border-radius:50%;background:#fff;border:1px solid #B0B0B0"></div><div style="left:49px;top:846px;width:4px;height:4px;border-radius:50%;background:#000"></div><div style="left:61px;top:840px;width:107px;height:16px;border:1px dotted #000"></div><div class="t" style="left:62px;top:842px;color:#fff;font-size:11px;letter-spacing:0px">Расчетные значения</div><div style="left:204px;top:841px;width:14px;height:14px;border-radius:50%;background:#fff;border:1px solid #B0B0B0"></div><div class="t" style="left:222px;top:842px;color:#fff;font-size:11px;letter-spacing:0px">Базисные значения</div><div style="left:0px;top:894px;width:1680px;height:1px;background:#716F64"></div><div style="left:0px;top:895px;width:1680px;height:1px;background:#fff"></div><div style="left:4px;top:896px;width:1672px;height:28px;border:1px solid;border-color:#fff #9D9DA1 #9D9DA1 #fff"></div><div class="t" style="left:12px;top:902px;font-size:13px;letter-spacing:0.28px;line-height:15px">Формула для объема (F9):</div><div style="left:196px;top:897px;width:1341px;height:25px;background:#fff;border:1px solid;border-color:#9D9DA1 #F1EFE2 #F1EFE2 #9D9DA1"></div><div class="t" style="left:199px;top:902px;font-size:13px;letter-spacing:-0.2px;line-height:15px">1000.0</div><svg style="position:absolute;left:1548px;top:904px" width="17" height="13"><rect x="0.5" y="0.5" width="16" height="12" rx="1" fill="#008080" stroke="#003040"/><rect x="3" y="3" width="11" height="3" fill="#a0e0f0"/><path d="M3 8h2M6 8h2M9 8h2M12 8h2M3 10h2M6 10h2M9 10h2M12 10h2" stroke="#c0f0ff"/></svg><div class="t" style="left:1576px;top:903px;font-size:11px;letter-spacing:0px">Точность:</div><div style="left:1631px;top:898px;width:20px;height:23px;background:#fff;border:1px solid;border-color:#9D9DA1 #F1EFE2 #F1EFE2 #9D9DA1"></div><div class="t" style="left:1634px;top:900px;font-size:12px">9</div><div style="left:1651px;top:898px;width:18px;height:11px;background:#E0DFE3;border:1px solid;border-color:#fff #716F64 #716F64 #fff"></div><div style="left:1651px;top:909px;width:18px;height:12px;background:#E0DFE3;border:1px solid;border-color:#fff #716F64 #716F64 #fff"></div><svg style="position:absolute;left:1656px;top:901px" width="8" height="18"><path d="M0.5 4.5 L4 1 L7.5 4.5Z M0.5 13 L4 16.5 L7.5 13Z" fill="#000"/></svg><div style="left:0px;top:925px;width:1680px;height:1px;background:#9D9DA1"></div><div style="left:0px;top:926px;width:1680px;height:1px;background:#fff"></div><div style="left:4px;top:929px;width:126px;height:23px;background:#E0DFE3;border:1px solid;border-color:#fff #716F64 #716F64 #fff;box-shadow:inset -1px -1px 0 #9D9DA1"></div><div style="left:130px;top:929px;width:221px;height:23px;background:#E0DFE3;border:1px solid;border-color:#fff #716F64 #716F64 #fff;box-shadow:inset -1px -1px 0 #9D9DA1"></div><div style="left:352px;top:929px;width:124px;height:23px;background:#E0DFE3;border:1px solid;border-color:#fff #716F64 #716F64 #fff;box-shadow:inset -1px -1px 0 #9D9DA1"></div><div style="left:476px;top:929px;width:320px;height:23px;background:#E0DFE3;border:1px solid;border-color:#fff #716F64 #716F64 #fff;box-shadow:inset -1px -1px 0 #9D9DA1"></div><div style="left:0px;top:954px;width:1676px;height:1px;background:#9D9DA1"></div><div style="left:0px;top:955px;width:1676px;height:1px;background:#fff"></div><div style="left:4px;top:958px;width:126px;height:23px;background:#E0DFE3;border:1px solid;border-color:#fff #716F64 #716F64 #fff;box-shadow:inset -1px -1px 0 #9D9DA1"></div><div style="left:130px;top:958px;width:164px;height:23px;background:#E0DFE3;border:1px solid;border-color:#fff #716F64 #716F64 #fff;box-shadow:inset -1px -1px 0 #9D9DA1"></div><div style="left:294px;top:958px;width:160px;height:23px;background:#E0DFE3;border:1px solid;border-color:#fff #716F64 #716F64 #fff;box-shadow:inset -1px -1px 0 #9D9DA1"></div><div style="left:454px;top:958px;width:143px;height:23px;background:#E0DFE3;border:1px solid;border-color:#fff #716F64 #716F64 #fff;box-shadow:inset -1px -1px 0 #9D9DA1"></div><div style="left:597px;top:958px;width:199px;height:23px;background:#E0DFE3;border:1px solid;border-color:#fff #716F64 #716F64 #fff;box-shadow:inset -1px -1px 0 #9D9DA1"></div><div style="left:0px;top:984px;width:1676px;height:1px;background:#9D9DA1"></div><div style="left:0px;top:985px;width:1676px;height:1px;background:#fff"></div><svg style="position:absolute;left:11px;top:932px" width="18" height="17"><path d="M1 8 L5 5 H16 L13 15 H1Z" fill="#807838" stroke="#000" stroke-width="0.8"/><rect x="3" y="2" width="9" height="8" fill="#fff" stroke="#000" stroke-width="0.8"/><path d="M11 1 v6 M8 4 h6" stroke="#0c0" stroke-width="2.2"/><path d="M1 15 L4 9 H17 L13 15Z" fill="#c8c060" stroke="#000" stroke-width="0.8"/></svg><div class="t" style="left:33px;top:933px;font-size:13px;letter-spacing:0.2px;line-height:15px">Ins - Добавить</div><svg style="position:absolute;left:139px;top:934px;" width="17" height="13" shape-rendering="crispEdges"><rect x="6" y="0" width="3" height="1" fill="#000"/><rect x="5" y="1" width="1" height="1" fill="#000"/><rect x="6" y="1" width="3" height="1" fill="#fff"/><rect x="9" y="1" width="2" height="1" fill="#000"/><rect x="4" y="2" width="1" height="1" fill="#000"/><rect x="5" y="2" width="6" height="1" fill="#fff"/><rect x="11" y="2" width="1" height="1" fill="#000"/><rect x="3" y="3" width="1" height="1" fill="#000"/><rect x="4" y="3" width="8" height="1" fill="#fff"/><rect x="12" y="3" width="1" height="1" fill="#000"/><rect x="2" y="4" width="1" height="1" fill="#000"/><rect x="3" y="4" width="5" height="1" fill="#fff"/><rect x="8" y="4" width="1" height="1" fill="#000"/><rect x="9" y="4" width="4" height="1" fill="#fff"/><rect x="13" y="4" width="1" height="1" fill="#000"/><rect x="1" y="5" width="1" height="1" fill="#000"/><rect x="2" y="5" width="5" height="1" fill="#fff"/><rect x="7" y="5" width="1" height="1" fill="#000"/><rect x="8" y="5" width="6" height="1" fill="#fff"/><rect x="14" y="5" width="1" height="1" fill="#000"/><rect x="0" y="6" width="1" height="1" fill="#000"/><rect x="1" y="6" width="5" height="1" fill="#fff"/><rect x="6" y="6" width="1" height="1" fill="#000"/><rect x="7" y="6" width="8" height="1" fill="#fff"/><rect x="15" y="6" width="1" height="1" fill="#000"/><rect x="0" y="7" width="1" height="1" fill="#00f"/><rect x="1" y="7" width="1" height="1" fill="#000"/><rect x="2" y="7" width="3" height="1" fill="#fff"/><rect x="5" y="7" width="1" height="1" fill="#000"/><rect x="6" y="7" width="8" height="1" fill="#fff"/><rect x="14" y="7" width="1" height="1" fill="#000"/><rect x="1" y="8" width="1" height="1" fill="#00f"/><rect x="2" y="8" width="1" height="1" fill="#000"/><rect x="3" y="8" width="1" height="1" fill="#fff"/><rect x="4" y="8" width="1" height="1" fill="#000"/><rect x="5" y="8" width="8" height="1" fill="#fff"/><rect x="13" y="8" width="1" height="1" fill="#000"/><rect x="2" y="9" width="1" height="1" fill="#00f"/><rect x="3" y="9" width="1" height="1" fill="#000"/><rect x="4" y="9" width="8" height="1" fill="#fff"/><rect x="12" y="9" width="1" height="1" fill="#000"/><rect x="3" y="10" width="1" height="1" fill="#00f"/><rect x="4" y="10" width="1" height="1" fill="#000"/><rect x="5" y="10" width="6" height="1" fill="#fff"/><rect x="11" y="10" width="1" height="1" fill="#000"/><rect x="4" y="11" width="2" height="1" fill="#00f"/><rect x="6" y="11" width="1" height="1" fill="#000"/><rect x="7" y="11" width="3" height="1" fill="#fff"/><rect x="10" y="11" width="1" height="1" fill="#000"/><rect x="6" y="12" width="2" height="1" fill="#00f"/><rect x="8" y="12" width="2" height="1" fill="#000"/></svg><div class="t" style="left:159px;top:933px;font-size:13px;letter-spacing:0.2px;line-height:15px">(Ctrl+) F4 - Добавить из книги</div><svg style="position:absolute;left:360px;top:932px" width="18" height="17"><path d="M1 8 L5 5 H16 L13 15 H1Z" fill="#807838" stroke="#000" stroke-width="0.8"/><rect x="3" y="2" width="9" height="8" fill="#fff" stroke="#000" stroke-width="0.8"/><rect x="8" y="1" width="7" height="3" fill="#e00000"/><path d="M1 15 L4 9 H17 L13 15Z" fill="#c8c060" stroke="#000" stroke-width="0.8"/></svg><div class="t" style="left:382px;top:933px;font-size:13px;letter-spacing:0.2px;line-height:15px">Del - Удалить</div><svg style="position:absolute;left:509px;top:935px" width="14" height="10"><path d="M4 1 L1 4 L4 7 M1 4 H8 Q12 4 12 8" stroke="#0000c0" stroke-width="1.6" fill="none"/></svg><div class="t" style="left:528px;top:933px;font-size:13px;letter-spacing:0.2px;line-height:15px">Ctrl+Z - Отменить: Коэфф. пересчета</div><svg style="position:absolute;left:20px;top:960px" width="18" height="18"><path d="M1 1h3v3h-3zM7 1h3v3h-3zM13 1h3v3h-3z" fill="#e00"/><path d="M4 4h3v3h-3zM10 4h3v3h-3z" fill="#00c"/><path d="M2 10 L7 5 L12 9 L9 14 L4 15Z" fill="#ff0" stroke="#000" stroke-width="0.7"/><path d="M12 12 l4 5 M16 12 l-3 5" stroke="#00c" stroke-width="1.2"/></svg><div class="t" style="left:42px;top:962px;font-size:13px;letter-spacing:0.2px;line-height:15px">F2 - Раздел</div><svg style="position:absolute;left:147px;top:960px" width="18" height="18"><path d="M2 7 L7 1 L13 6 L10 11 L5 12Z" fill="#ff0" stroke="#000" stroke-width="0.8"/><path d="M1 2 l4 4" stroke="#000" stroke-width="2.5"/><path d="M1 2 l3 3" stroke="#0cc" stroke-width="1.5"/><path d="M14 3 v13 M4 16 h10" stroke="#000"/><rect x="12" y="1" width="3" height="4" fill="#e00"/></svg><div class="t" style="left:169px;top:962px;font-size:13px;letter-spacing:0.2px;line-height:15px">F5 - Примечание</div><svg style="position:absolute;left:312px;top:962px;" width="15" height="15" shape-rendering="crispEdges"><rect x="5" y="0" width="5" height="1" fill="#000080"/><rect x="3" y="1" width="9" height="1" fill="#000080"/><rect x="2" y="2" width="6" height="1" fill="#000080"/><rect x="8" y="2" width="1" height="1" fill="#fff"/><rect x="9" y="2" width="4" height="1" fill="#000080"/><rect x="1" y="3" width="13" height="1" fill="#000080"/><rect x="1" y="4" width="6" height="1" fill="#000080"/><rect x="7" y="4" width="2" height="1" fill="#fff"/><rect x="9" y="4" width="5" height="1" fill="#000080"/><rect x="0" y="5" width="6" height="1" fill="#000080"/><rect x="6" y="5" width="2" height="1" fill="#fff"/><rect x="8" y="5" width="7" height="1" fill="#000080"/><rect x="0" y="6" width="7" height="1" fill="#000080"/><rect x="7" y="6" width="1" height="1" fill="#fff"/><rect x="8" y="6" width="7" height="1" fill="#000080"/><rect x="0" y="7" width="6" height="1" fill="#000080"/><rect x="6" y="7" width="2" height="1" fill="#fff"/><rect x="8" y="7" width="7" height="1" fill="#000080"/><rect x="0" y="8" width="6" height="1" fill="#000080"/><rect x="6" y="8" width="1" height="1" fill="#fff"/><rect x="7" y="8" width="8" height="1" fill="#000080"/><rect x="0" y="9" width="5" height="1" fill="#000080"/><rect x="5" y="9" width="2" height="1" fill="#fff"/><rect x="7" y="9" width="8" height="1" fill="#000080"/><rect x="1" y="10" width="4" height="1" fill="#000080"/><rect x="5" y="10" width="4" height="1" fill="#fff"/><rect x="9" y="10" width="5" height="1" fill="#000080"/><rect x="1" y="11" width="13" height="1" fill="#000080"/><rect x="2" y="12" width="11" height="1" fill="#000080"/><rect x="3" y="13" width="9" height="1" fill="#000080"/><rect x="5" y="14" width="5" height="1" fill="#000080"/></svg><div class="t" style="left:331px;top:962px;font-size:13px;letter-spacing:0.2px;line-height:15px">(Alt+) F8 - Индекс</div><svg style="position:absolute;left:467px;top:962px;" width="16" height="14" shape-rendering="crispEdges"><rect x="0" y="0" width="7" height="1" fill="#000"/><rect x="0" y="1" width="1" height="1" fill="#000"/><rect x="1" y="1" width="1" height="1" fill="#fff"/><rect x="2" y="1" width="1" height="1" fill="#000"/><rect x="3" y="1" width="1" height="1" fill="#fff"/><rect x="4" y="1" width="1" height="1" fill="#000"/><rect x="5" y="1" width="1" height="1" fill="#fff"/><rect x="6" y="1" width="3" height="1" fill="#000"/><rect x="0" y="2" width="1" height="1" fill="#000"/><rect x="1" y="2" width="1" height="1" fill="#fff"/><rect x="2" y="2" width="1" height="1" fill="#000"/><rect x="3" y="2" width="1" height="1" fill="#fff"/><rect x="4" y="2" width="1" height="1" fill="#000"/><rect x="5" y="2" width="1" height="1" fill="#fff"/><rect x="6" y="2" width="1" height="1" fill="#000"/><rect x="7" y="2" width="2" height="1" fill="#fff"/><rect x="9" y="2" width="2" height="1" fill="#000"/><rect x="0" y="3" width="1" height="1" fill="#000"/><rect x="1" y="3" width="1" height="1" fill="#fff"/><rect x="2" y="3" width="1" height="1" fill="#000"/><rect x="3" y="3" width="1" height="1" fill="#fff"/><rect x="4" y="3" width="1" height="1" fill="#000"/><rect x="5" y="3" width="1" height="1" fill="#fff"/><rect x="6" y="3" width="1" height="1" fill="#000"/><rect x="7" y="3" width="4" height="1" fill="#fff"/><rect x="11" y="3" width="1" height="1" fill="#000"/><rect x="0" y="4" width="1" height="1" fill="#000"/><rect x="1" y="4" width="1" height="1" fill="#fff"/><rect x="2" y="4" width="1" height="1" fill="#000"/><rect x="3" y="4" width="1" height="1" fill="#fff"/><rect x="4" y="4" width="1" height="1" fill="#000"/><rect x="5" y="4" width="1" height="1" fill="#fff"/><rect x="6" y="4" width="1" height="1" fill="#000"/><rect x="7" y="4" width="5" height="1" fill="#fff"/><rect x="12" y="4" width="1" height="1" fill="#000"/><rect x="0" y="5" width="1" height="1" fill="#000"/><rect x="1" y="5" width="1" height="1" fill="#fff"/><rect x="2" y="5" width="1" height="1" fill="#000"/><rect x="3" y="5" width="1" height="1" fill="#fff"/><rect x="4" y="5" width="7" height="1" fill="#000"/><rect x="11" y="5" width="2" height="1" fill="#fff"/><rect x="13" y="5" width="1" height="1" fill="#000"/><rect x="0" y="6" width="1" height="1" fill="#000"/><rect x="1" y="6" width="1" height="1" fill="#fff"/><rect x="2" y="6" width="1" height="1" fill="#000"/><rect x="3" y="6" width="1" height="1" fill="#fff"/><rect x="4" y="6" width="1" height="1" fill="#000"/><rect x="5" y="6" width="5" height="1" fill="#fff"/><rect x="10" y="6" width="1" height="1" fill="#000"/><rect x="11" y="6" width="2" height="1" fill="#fff"/><rect x="13" y="6" width="1" height="1" fill="#000"/><rect x="0" y="7" width="1" height="1" fill="#000"/><rect x="1" y="7" width="1" height="1" fill="#fff"/><rect x="2" y="7" width="1" height="1" fill="#000"/><rect x="3" y="7" width="1" height="1" fill="#fff"/><rect x="4" y="7" width="1" height="1" fill="#000"/><rect x="5" y="7" width="1" height="1" fill="#fff"/><rect x="6" y="7" width="2" height="1" fill="#000"/><rect x="8" y="7" width="2" height="1" fill="#fff"/><rect x="10" y="7" width="4" height="1" fill="#000"/><rect x="0" y="8" width="1" height="1" fill="#000"/><rect x="1" y="8" width="1" height="1" fill="#fff"/><rect x="2" y="8" width="1" height="1" fill="#000"/><rect x="3" y="8" width="1" height="1" fill="#fff"/><rect x="4" y="8" width="1" height="1" fill="#000"/><rect x="5" y="8" width="8" height="1" fill="#fff"/><rect x="13" y="8" width="1" height="1" fill="#000"/><rect x="0" y="9" width="1" height="1" fill="#000"/><rect x="1" y="9" width="1" height="1" fill="#fff"/><rect x="2" y="9" width="1" height="1" fill="#000"/><rect x="3" y="9" width="1" height="1" fill="#fff"/><rect x="4" y="9" width="1" height="1" fill="#000"/><rect x="5" y="9" width="1" height="1" fill="#fff"/><rect x="6" y="9" width="5" height="1" fill="#000"/><rect x="11" y="9" width="2" height="1" fill="#fff"/><rect x="13" y="9" width="1" height="1" fill="#000"/><rect x="0" y="10" width="1" height="1" fill="#000"/><rect x="1" y="10" width="1" height="1" fill="#fff"/><rect x="2" y="10" width="1" height="1" fill="#000"/><rect x="3" y="10" width="1" height="1" fill="#fff"/><rect x="4" y="10" width="1" height="1" fill="#000"/><rect x="5" y="10" width="8" height="1" fill="#fff"/><rect x="13" y="10" width="1" height="1" fill="#000"/><rect x="0" y="11" width="3" height="1" fill="#000"/><rect x="3" y="11" width="1" height="1" fill="#fff"/><rect x="4" y="11" width="1" height="1" fill="#000"/><rect x="5" y="11" width="1" height="1" fill="#fff"/><rect x="6" y="11" width="5" height="1" fill="#000"/><rect x="11" y="11" width="2" height="1" fill="#fff"/><rect x="13" y="11" width="1" height="1" fill="#000"/><rect x="2" y="12" width="3" height="1" fill="#000"/><rect x="5" y="12" width="8" height="1" fill="#fff"/><rect x="13" y="12" width="1" height="1" fill="#000"/><rect x="4" y="13" width="10" height="1" fill="#000"/></svg><div class="t" style="left:487px;top:962px;font-size:13px;letter-spacing:0.2px;line-height:15px">F12 - Тех.часть</div><svg style="position:absolute;left:619px;top:960px" width="17" height="18"><path d="M3 2 L13 2 L11 6 L5 6Z" fill="#000"/><path d="M8 5 v10" stroke="#000" stroke-width="2"/><path d="M2 9 q3 6 8 8" stroke="#000" stroke-width="1.4" fill="none"/><rect x="11" y="10" width="5" height="7" fill="#e00"/></svg><div class="t" style="left:639px;top:962px;font-size:13px;letter-spacing:0.2px;line-height:15px">Alt+W - Состав работ</div><div style="left:4px;top:991px;width:65px;height:25px;border:1px solid;border-color:#9D9DA1 #fff #fff #9D9DA1"></div><div class="t" style="left:8px;top:997px;font-size:12px;letter-spacing:0.2px">4:9</div><div style="left:76px;top:991px;width:25px;height:25px;background:repeating-conic-gradient(#E8E8E8 0 25%,#F8F8F8 0 50%) 0 0/2px 2px;border:1px solid;border-color:#9D9DA1 #fff #fff #9D9DA1"></div><svg style="position:absolute;left:83px;top:998px;" width="13" height="13" shape-rendering="crispEdges"><rect x="5" y="0" width="3" height="1" fill="#000"/><rect x="2" y="1" width="2" height="1" fill="#000"/><rect x="5" y="1" width="1" height="1" fill="#000"/><rect x="6" y="1" width="1" height="1" fill="#505050"/><rect x="7" y="1" width="1" height="1" fill="#000"/><rect x="9" y="1" width="2" height="1" fill="#000"/><rect x="2" y="2" width="1" height="1" fill="#000"/><rect x="3" y="2" width="1" height="1" fill="#505050"/><rect x="4" y="2" width="2" height="1" fill="#000"/><rect x="6" y="2" width="1" height="1" fill="#505050"/><rect x="7" y="2" width="2" height="1" fill="#000"/><rect x="9" y="2" width="1" height="1" fill="#505050"/><rect x="10" y="2" width="1" height="1" fill="#000"/><rect x="3" y="3" width="1" height="1" fill="#000"/><rect x="4" y="3" width="5" height="1" fill="#505050"/><rect x="9" y="3" width="1" height="1" fill="#000"/><rect x="0" y="4" width="3" height="1" fill="#000"/><rect x="3" y="4" width="2" height="1" fill="#505050"/><rect x="5" y="4" width="3" height="1" fill="#000"/><rect x="8" y="4" width="2" height="1" fill="#505050"/><rect x="10" y="4" width="3" height="1" fill="#000"/><rect x="0" y="5" width="1" height="1" fill="#000"/><rect x="1" y="5" width="3" height="1" fill="#505050"/><rect x="4" y="5" width="1" height="1" fill="#000"/><rect x="8" y="5" width="1" height="1" fill="#000"/><rect x="9" y="5" width="3" height="1" fill="#505050"/><rect x="12" y="5" width="1" height="1" fill="#000"/><rect x="0" y="6" width="2" height="1" fill="#000"/><rect x="2" y="6" width="2" height="1" fill="#505050"/><rect x="4" y="6" width="1" height="1" fill="#000"/><rect x="8" y="6" width="1" height="1" fill="#000"/><rect x="9" y="6" width="2" height="1" fill="#505050"/><rect x="11" y="6" width="2" height="1" fill="#000"/><rect x="0" y="7" width="1" height="1" fill="#000"/><rect x="1" y="7" width="3" height="1" fill="#505050"/><rect x="4" y="7" width="1" height="1" fill="#000"/><rect x="8" y="7" width="1" height="1" fill="#000"/><rect x="9" y="7" width="3" height="1" fill="#505050"/><rect x="12" y="7" width="1" height="1" fill="#000"/><rect x="0" y="8" width="3" height="1" fill="#000"/><rect x="3" y="8" width="2" height="1" fill="#505050"/><rect x="5" y="8" width="3" height="1" fill="#000"/><rect x="8" y="8" width="2" height="1" fill="#505050"/><rect x="10" y="8" width="3" height="1" fill="#000"/><rect x="3" y="9" width="1" height="1" fill="#000"/><rect x="4" y="9" width="5" height="1" fill="#505050"/><rect x="9" y="9" width="1" height="1" fill="#000"/><rect x="2" y="10" width="1" height="1" fill="#000"/><rect x="3" y="10" width="1" height="1" fill="#505050"/><rect x="4" y="10" width="2" height="1" fill="#000"/><rect x="6" y="10" width="1" height="1" fill="#505050"/><rect x="7" y="10" width="2" height="1" fill="#000"/><rect x="9" y="10" width="1" height="1" fill="#505050"/><rect x="10" y="10" width="1" height="1" fill="#000"/><rect x="2" y="11" width="2" height="1" fill="#000"/><rect x="5" y="11" width="1" height="1" fill="#000"/><rect x="6" y="11" width="1" height="1" fill="#505050"/><rect x="7" y="11" width="1" height="1" fill="#000"/><rect x="9" y="11" width="2" height="1" fill="#000"/><rect x="5" y="12" width="3" height="1" fill="#000"/></svg><div style="left:104px;top:991px;width:81px;height:25px;background:#E0DFE3;border:1px solid;border-color:#fff #716F64 #716F64 #fff;box-shadow:inset -1px -1px 0 #9D9DA1"></div><div class="t" style="left:104px;top:992px;width:81px;text-align:center;font-size:11px;line-height:10px;letter-spacing:0.1px">Параметры</div><div class="t" style="left:104px;top:1001px;width:81px;text-align:center;font-size:11px;line-height:10px;letter-spacing:0.1px">расчета</div><div style="left:190px;top:991px;width:109px;height:25px;background:#E0DFE3;border:1px solid;border-color:#fff #716F64 #716F64 #fff;box-shadow:inset -1px -1px 0 #9D9DA1"></div><div class="t" style="left:190px;top:998px;width:108px;text-align:center;font-weight:bold;font-size:12px;letter-spacing:-0.3px">БАЗИСНЫЕ</div><div style="left:302px;top:991px;width:226px;height:24px;background:#000;border:1px solid;border-color:#9D9DA1 #fff #fff #9D9DA1"></div><div class="t" style="left:303px;top:996px;color:#00FF00;font-weight:bold;font-size:13px;letter-spacing:0.82px;line-height:15px">Итого: 36 863.30 руб.</div><div style="left:531px;top:995px;width:18px;height:19px;background:#E0DFE3;border:1px solid;border-color:#fff #716F64 #716F64 #fff;box-shadow:inset -1px -1px 0 #9D9DA1"></div><svg style="position:absolute;left:533px;top:997px" width="14" height="14"><circle cx="7" cy="7" r="5.5" fill="#a0a0a0" stroke="#606060"/><circle cx="7" cy="7" r="3" fill="#505050"/><circle cx="6" cy="6" r="1.2" fill="#fff"/></svg><div style="left:1455px;top:991px;width:105px;height:25px;background:#E0DFE3;border:1px solid;border-color:#fff #716F64 #716F64 #fff;box-shadow:inset -1px -1px 0 #9D9DA1"></div><svg style="position:absolute;left:1470px;top:996px" width="15" height="15"><path d="M2 2 L13 13 M13 2 L2 13" stroke="#b00000" stroke-width="3.4"/><path d="M2 2 L13 13" stroke="#700000" stroke-width="1"/></svg><div class="t" style="left:1490px;top:996px;font-size:13px;letter-spacing:0.45px;line-height:15px">Закрыть</div><div style="left:1567px;top:991px;width:106px;height:25px;background:#E0DFE3;border:1px solid;border-color:#fff #716F64 #716F64 #fff;box-shadow:inset -1px -1px 0 #9D9DA1"></div><div class="t" style="left:1580px;top:992px;font-weight:bold;font-size:19px;line-height:20px;color:#00A0C0;text-shadow:1px 1px 0 #004060">?</div><div class="t" style="left:1602px;top:996px;font-size:13px;letter-spacing:0.45px;line-height:15px">Справка</div><div style="left:0px;top:1019px;width:1680px;height:31px;background:linear-gradient(#A8A8C0 0px,#A8A8C0 1px,#FFFFFF 2px,#F0F0F6 3px,#C8C8DA 6px,#BCBCD0 12px,#CACADA 20px,#E0E0E8 26px,#D8D8E2 29px,#A8A8C0 31px)"></div><div style="left:0px;top:1020px;width:96px;height:30px;background:linear-gradient(#8FD08F 0px,#5AB05A 3px,#3C9C3C 8px,#2E8E2E 16px,#2A862A 24px,#3A9A3A 30px);border-radius:0 12px 12px 0;box-shadow:inset -3px 0 4px rgba(0,60,0,0.5),inset 0 2px 2px rgba(255,255,255,0.35)"></div><svg style="position:absolute;left:10px;top:1025px" width="20" height="20"><path d="M2 3 Q5 1 9 3 L8 9 Q5 7 1 9Z" fill="#f05020"/><path d="M10 3 Q14 5 18 3 L17 9 Q13 11 9 9Z" fill="#40b040"/><path d="M1 10 Q5 8 8 10 L7 16 Q4 14 0 16Z" fill="#2060e0"/><path d="M9 10 Q13 12 17 10 L16 16 Q12 18 8 16Z" fill="#f0c020"/></svg><div class="t" style="left:34px;top:1025px;color:#fff;font-weight:bold;font-style:italic;font-size:18px;line-height:20px;text-shadow:1px 1px 1px #204020;letter-spacing:-0.6px">пуск</div><svg style="position:absolute;left:107px;top:1026px" width="18" height="18"><ellipse cx="9" cy="9" rx="8.5" ry="4" transform="rotate(-40 9 9)" fill="none" stroke="#40A0F0" stroke-width="1.2"/><circle cx="9.5" cy="10" r="4.8" fill="none" stroke="#1E7CD8" stroke-width="3"/><path d="M5 9.5 h9" stroke="#1E7CD8" stroke-width="2.2"/><path d="M11 12.5 h4" stroke="#E0E0EC" stroke-width="2"/></svg><svg style="position:absolute;left:131px;top:1027px" width="16" height="16"><rect x="0.5" y="0.5" width="13" height="14" rx="1" fill="#2A70D8" stroke="#1040A0"/><rect x="2" y="3" width="10" height="10" fill="#FFF8D8"/><path d="M4 5 h6 v6 h-4 q-2 -3 -2 -6Z" fill="#60A0F0"/><circle cx="14" cy="6" r="1.5" fill="#F06020"/></svg><svg style="position:absolute;left:153px;top:1026px" width="18" height="17"><circle cx="9" cy="8.5" r="7.8" fill="#E87818"/><circle cx="10" cy="8" r="5" fill="#1850A8"/><path d="M1.5 9 Q2 2 8 1.5 Q5 4 6 6 Q3 6 4 10 Q6 14 11 13 Q14 12 15 9 Q16 15 9 16 Q2 16 1.5 9Z" fill="#F09020"/></svg><div class="t" style="left:182px;top:1022px;font-size:14px;font-weight:bold;line-height:14px">»</div><div style="left:198px;top:1023px;width:158px;height:26px;background:linear-gradient(#FFFFFF,#ECECF2 35%,#D4D4E2);border:1px solid #9C9CB4;border-bottom:2px solid #8888A0;border-radius:3px"></div><div class="t" style="left:226px;top:1029px;font-size:11px;color:#202020;letter-spacing:-0.1px">ГРАНД Смета</div><svg style="position:absolute;left:205px;top:1028px" width="16" height="16"><path d="M1 1h3v3h-3zM9 1h3v3h-3zM5 5h3v3h-3zM13 5h3v3h-3z" fill="#e00"/><path d="M1 5h3v3h-3zM9 5h3v3h-3zM1 9h3v3h-3zM5 9h3v3h-3zM9 9h3v3h-3zM13 9h3v3h-3zM1 13h3v3h-3zM5 13h3v3h-3zM9 13h3v3h-3zM13 13h3v3h-3z" fill="#00a"/><path d="M5 1h3v3h-3z" fill="#e00"/></svg><div style="left:358px;top:1023px;width:158px;height:26px;background:linear-gradient(#FFFFFF,#ECECF2 35%,#D4D4E2);border:1px solid #9C9CB4;border-bottom:2px solid #8888A0;border-radius:3px"></div><div class="t" style="left:386px;top:1029px;font-size:11px;color:#202020;letter-spacing:-0.1px">Вопросы-ответы - ...</div><div style="left:518px;top:1023px;width:159px;height:26px;background:linear-gradient(#66708A,#7A8298);border:1px solid #505870;border-radius:3px"></div><div class="t" style="left:546px;top:1029px;font-size:11px;color:#fff;letter-spacing:-0.1px">WinPИК 1.3</div><div style="left:679px;top:1023px;width:158px;height:26px;background:linear-gradient(#FFFFFF,#ECECF2 35%,#D4D4E2);border:1px solid #9C9CB4;border-bottom:2px solid #8888A0;border-radius:3px"></div><div class="t" style="left:707px;top:1029px;font-size:11px;color:#202020;letter-spacing:-0.1px">Информационное аг...</div><div style="left:839px;top:1023px;width:158px;height:26px;background:linear-gradient(#FFFFFF,#ECECF2 35%,#D4D4E2);border:1px solid #9C9CB4;border-bottom:2px solid #8888A0;border-radius:3px"></div><div class="t" style="left:867px;top:1029px;font-size:11px;color:#202020;letter-spacing:-0.1px">Mail.Ru Агент (1 вкл...</div><div style="left:999px;top:1023px;width:158px;height:26px;background:linear-gradient(#FFFFFF,#ECECF2 35%,#D4D4E2);border:1px solid #9C9CB4;border-bottom:2px solid #8888A0;border-radius:3px"></div><div class="t" style="left:1027px;top:1029px;font-size:11px;color:#202020;letter-spacing:-0.1px">Вопросы-ответы [Ре...</div><svg style="position:absolute;left:365px;top:1027px" width="18" height="18"><path d="M4 1.5 H13 L16.5 5 V16.5 H4Z" fill="#fff" stroke="#606060"/><circle cx="8" cy="10" r="4.5" fill="none" stroke="#1878d8" stroke-width="2.2"/><path d="M3.5 10 h9" stroke="#1878d8" stroke-width="1.8"/></svg><svg style="position:absolute;left:686px;top:1027px" width="18" height="18"><path d="M4 1.5 H13 L16.5 5 V16.5 H4Z" fill="#fff" stroke="#606060"/><circle cx="8" cy="10" r="4.5" fill="none" stroke="#1878d8" stroke-width="2.2"/><path d="M3.5 10 h9" stroke="#1878d8" stroke-width="1.8"/></svg><svg style="position:absolute;left:525px;top:1027px" width="18" height="17"><ellipse cx="7" cy="4" rx="5" ry="2.5" fill="#c8c800" stroke="#404000" stroke-width="0.8"/><rect x="2" y="4" width="10" height="8" fill="#b0b000" stroke="#404000" stroke-width="0.8"/><ellipse cx="7" cy="12" rx="5" ry="2.5" fill="#c0c000" stroke="#404000" stroke-width="0.8"/><ellipse cx="12" cy="11" rx="4.5" ry="4.5" fill="#e8e800" stroke="#404000" stroke-width="0.8"/></svg><svg style="position:absolute;left:846px;top:1027px" width="18" height="17"><path d="M1 6 L9 1 L17 6 V16 H1Z" fill="#fff" stroke="#000"/><path d="M1 6 L9 11 L17 6" stroke="#000" fill="none"/><path d="M5 2 L13 2 L13 7 L9 9 L5 7Z" fill="#ffe040" stroke="#a08000" stroke-width="0.5"/></svg><svg style="position:absolute;left:1006px;top:1027px" width="18" height="17"><path d="M4 1.5 H13 L16.5 5 V16.5 H4Z" fill="#fff" stroke="#606060"/><rect x="1" y="4" width="10" height="9" fill="#2050b0"/><text x="2" y="12" font-size="9" font-weight="bold" font-family="Liberation Sans" fill="#fff">W</text></svg><div style="left:1551px;top:1020px;width:129px;height:30px;background:linear-gradient(#FFFFFF 0px,#F4F4F8 3px,#E0E0EA 15px,#C8C8D8 30px);border-left:1px solid #9898B0"></div><div style="left:1516px;top:1027px;width:16px;height:17px;background:#C8C8D4"></div><div class="t" style="left:1517px;top:1030px;font-size:11px">RU</div><svg style="position:absolute;left:1540px;top:1025px" width="20" height="20"><circle cx="10" cy="10" r="9" fill="#d0d4e4" stroke="#8088a8"/><path d="M12 5 L7 10 L12 15" stroke="#fff" stroke-width="2.5" fill="none"/></svg><svg style="position:absolute;left:1562px;top:1026px" width="18" height="18"><circle cx="9" cy="9" r="8" fill="#00c000"/><circle cx="9" cy="9" r="4.5" fill="none" stroke="#e0ffe0" stroke-width="1.8"/><circle cx="9" cy="9" r="1.8" fill="#e0ffe0"/></svg><svg style="position:absolute;left:1580px;top:1027px" width="16" height="16"><rect x="5" y="1" width="10" height="8" fill="#6070a0" stroke="#304070"/><rect x="1" y="6" width="10" height="8" fill="#8090c0" stroke="#304070"/></svg><svg style="position:absolute;left:1597px;top:1027px" width="16" height="16"><path d="M1 1 h4 v6 l6 -6 h4 l-7 7 l7 7 h-4 l-6 -6 v6 h-4Z" fill="#e00000"/><path d="M9 9 L15 15" stroke="#000" stroke-width="2"/></svg><div class="t" style="left:1618px;top:1025px;color:#e00000;font-size:17px;line-height:18px;font-family:'Liberation Serif'">Я</div><div class="t" style="left:1639px;top:1029px;font-size:12px;letter-spacing:0.1px">15:25</div></body></html>
